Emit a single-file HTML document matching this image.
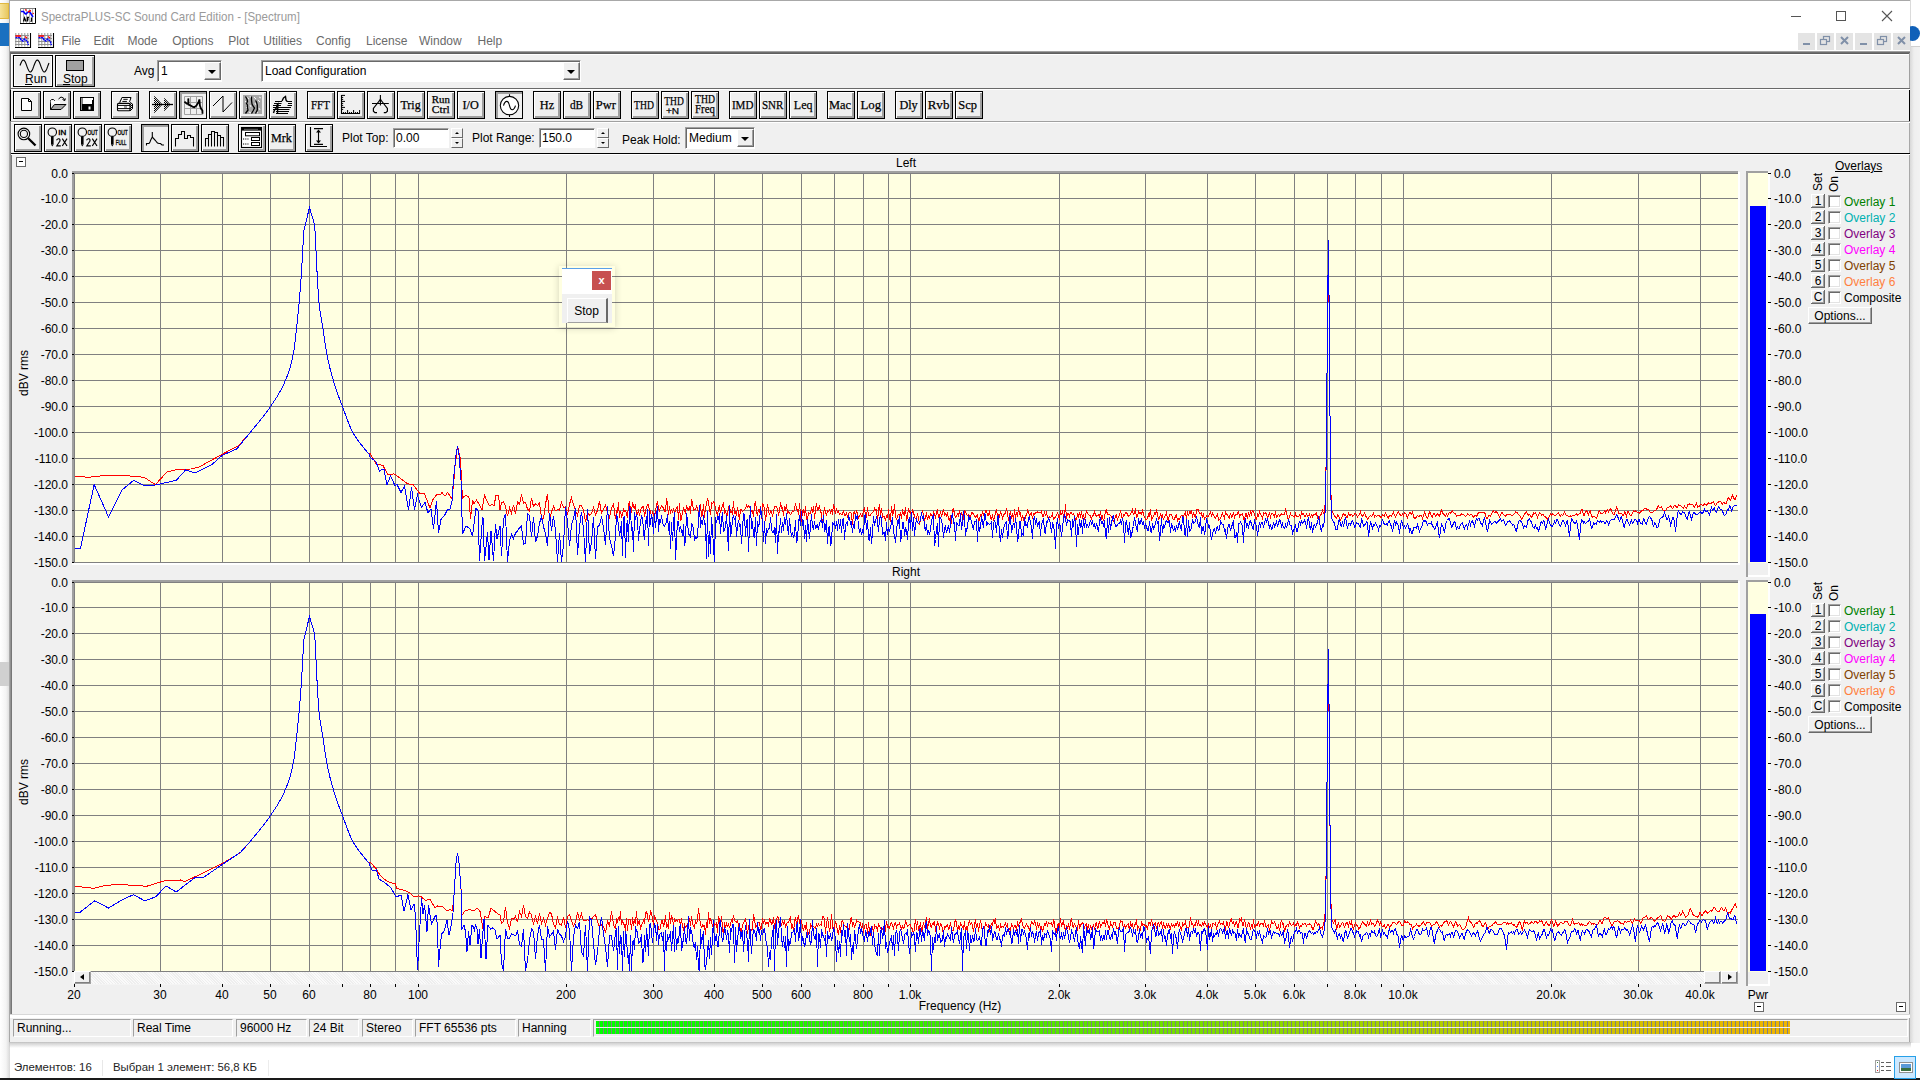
<!DOCTYPE html><html><head><meta charset="utf-8"><title>SpectraPLUS</title><style>html,body{margin:0;padding:0;}body{width:1920px;height:1080px;overflow:hidden;position:relative;background:#ffffff;font-family:"Liberation Sans",sans-serif;}div{box-sizing:border-box;}.btn{position:absolute;width:28px;height:28px;background:#f0f0f0;border:1px solid #000;box-shadow:inset 1px 1px 0 #fff,inset -2px -2px 0 #a0a0a0;}.btnp{position:absolute;width:28px;height:28px;background:#f0f0f0;border:1px solid #000;box-shadow:inset 2px 2px 0 #a0a0a0;}.lbl{position:absolute;white-space:nowrap;font-size:12px;line-height:14px;color:#000;}svg{position:absolute;left:0;top:0;overflow:visible}</style></head><body><div style="position:absolute;left:0px;top:0px;width:10px;height:1080px;background:linear-gradient(90deg,#ffffff 0%,#f4f4f4 60%,#d8d8d8 100%)"></div><div style="position:absolute;left:0px;top:3px;width:9px;height:16px;background:linear-gradient(90deg,#f6e39a,#e8c860);border:1px solid #e0b840;border-left:none"></div><div style="position:absolute;left:0px;top:23px;width:9px;height:23px;background:#1a70c0"></div><div style="position:absolute;left:0px;top:662px;width:9px;height:24px;background:#d0d0d0"></div><div style="position:absolute;left:1910px;top:0px;width:10px;height:1043px;background:linear-gradient(90deg,#d8d8d8 0%,#efefef 40%,#f2f2f2 100%)"></div><div style="position:absolute;left:1911px;top:0px;width:9px;height:46px;background:#ffffff"></div><div style="position:absolute;left:1905px;top:26px;width:15px;height:15px;border-radius:50%;background:#1060b8"></div><div style="position:absolute;left:1911px;top:46px;width:9px;height:1px;background:#d0d0d0"></div><div style="position:absolute;left:9px;top:0px;width:1901px;height:1043px;background:#f0f0f0;border:1px solid #a8a8a8"></div><div style="position:absolute;left:10px;top:1px;width:1900px;height:50px;background:#ffffff"></div><svg width="1920" height="60"><rect x="20" y="8" width="16" height="16" fill="#fff"/><path d="M20.5,24 V8.5 H36" stroke="#808080" fill="none"/><path d="M35.5,8 V23.5 H20" stroke="#000" fill="none"/><path d="M23.5,9 V23 M26.5,9 V23 M29.5,9 V23 M32.5,9 V23" stroke="#a0a0a0" stroke-width="0.8"/><polyline points="21,11.5 23.5,11.5 25,13.5 26,14 27.5,12.5 29,11.5 30.5,13 32,15.5 33,17" fill="none" stroke="#0000ff" stroke-width="1.6"/><path d="M25,9.5 L26.5,10.5 M28,12 L31,10.5 M33,13 L33.5,14" stroke="#ff0000" stroke-width="1.4"/><path d="M23.5,21.5 L24.5,18 L26,21.5 M27.5,21.5 V17.5 H29 M27,19.5 H28.5 M31.5,17.5 V21 L30.5,21.5" stroke="#000" stroke-width="1.3" fill="none"/><g transform="translate(15,33)"><rect x="0" y="1" width="15" height="14" fill="#fff"/><line x1="0.8" y1="0" x2="0.8" y2="13.5" stroke="#888" stroke-width="0.9"/><line x1="3.8" y1="0" x2="3.8" y2="13.5" stroke="#888" stroke-width="0.9"/><line x1="6.8" y1="0" x2="6.8" y2="13.5" stroke="#888" stroke-width="0.9"/><line x1="9.8" y1="0" x2="9.8" y2="13.5" stroke="#888" stroke-width="0.9"/><line x1="12.8" y1="0" x2="12.8" y2="13.5" stroke="#888" stroke-width="0.9"/><line x1="0" y1="2.5" x2="14" y2="2.5" stroke="#888" stroke-width="0.9"/><line x1="0" y1="5.5" x2="14" y2="5.5" stroke="#888" stroke-width="0.9"/><line x1="0" y1="8.5" x2="14" y2="8.5" stroke="#888" stroke-width="0.9"/><line x1="0" y1="11.5" x2="14" y2="11.5" stroke="#888" stroke-width="0.9"/><path d="M0.5,4.5 H5 L6,7 L8,8 L9.5,6 L11,7 L12.5,9 L13.5,12" fill="none" stroke="#0000ff" stroke-width="1.5" stroke-dasharray="2,0.6"/><path d="M0.5,3 H6 M10,3.5 L12,5" fill="none" stroke="#ff0000" stroke-width="1.3"/><path d="M0,14.5 H15.5 V0" stroke="#000" fill="none" stroke-width="1.1"/></g><g transform="translate(38,33)"><rect x="0" y="1" width="15" height="14" fill="#fff"/><line x1="0.8" y1="0" x2="0.8" y2="13.5" stroke="#888" stroke-width="0.9"/><line x1="3.8" y1="0" x2="3.8" y2="13.5" stroke="#888" stroke-width="0.9"/><line x1="6.8" y1="0" x2="6.8" y2="13.5" stroke="#888" stroke-width="0.9"/><line x1="9.8" y1="0" x2="9.8" y2="13.5" stroke="#888" stroke-width="0.9"/><line x1="12.8" y1="0" x2="12.8" y2="13.5" stroke="#888" stroke-width="0.9"/><line x1="0" y1="2.5" x2="14" y2="2.5" stroke="#888" stroke-width="0.9"/><line x1="0" y1="5.5" x2="14" y2="5.5" stroke="#888" stroke-width="0.9"/><line x1="0" y1="8.5" x2="14" y2="8.5" stroke="#888" stroke-width="0.9"/><line x1="0" y1="11.5" x2="14" y2="11.5" stroke="#888" stroke-width="0.9"/><path d="M0.5,4.5 H5 L6,7 L8,8 L9.5,6 L11,7 L12.5,9 L13.5,12" fill="none" stroke="#0000ff" stroke-width="1.5" stroke-dasharray="2,0.6"/><path d="M0.5,3 H6 M10,3.5 L12,5" fill="none" stroke="#ff0000" stroke-width="1.3"/><path d="M0,14.5 H15.5 V0" stroke="#000" fill="none" stroke-width="1.1"/></g><line x1="1791" y1="16.5" x2="1801" y2="16.5" stroke="#555"/><rect x="1836.5" y="11.5" width="9" height="9" fill="none" stroke="#555"/><path d="M1882,11 L1892,21 M1892,11 L1882,21" stroke="#555" stroke-width="1.1"/></svg><div style="position:absolute;left:41px;top:9px;font-size:13px;line-height:15px;color:#9a9a9a;white-space:nowrap;transform:scaleX(0.887);transform-origin:0 0">SpectraPLUS-SC Sound Card Edition - [Spectrum]</div><div style="position:absolute;left:61.4px;top:34px;font-size:12px;line-height:14px;color:#6a6a6a;white-space:nowrap;">File</div><div style="position:absolute;left:93.4px;top:34px;font-size:12px;line-height:14px;color:#6a6a6a;white-space:nowrap;">Edit</div><div style="position:absolute;left:127.4px;top:34px;font-size:12px;line-height:14px;color:#6a6a6a;white-space:nowrap;">Mode</div><div style="position:absolute;left:172.2px;top:34px;font-size:12px;line-height:14px;color:#6a6a6a;white-space:nowrap;">Options</div><div style="position:absolute;left:228.3px;top:34px;font-size:12px;line-height:14px;color:#6a6a6a;white-space:nowrap;">Plot</div><div style="position:absolute;left:263.3px;top:34px;font-size:12px;line-height:14px;color:#6a6a6a;white-space:nowrap;">Utilities</div><div style="position:absolute;left:316px;top:34px;font-size:12px;line-height:14px;color:#6a6a6a;white-space:nowrap;">Config</div><div style="position:absolute;left:366px;top:34px;font-size:12px;line-height:14px;color:#6a6a6a;white-space:nowrap;">License</div><div style="position:absolute;left:419px;top:34px;font-size:12px;line-height:14px;color:#6a6a6a;white-space:nowrap;">Window</div><div style="position:absolute;left:477.5px;top:34px;font-size:12px;line-height:14px;color:#6a6a6a;white-space:nowrap;">Help</div><div style="position:absolute;left:1798px;top:33px;width:17px;height:17px;background:#e4e4e4"></div><div style="position:absolute;left:1817px;top:33px;width:17px;height:17px;background:#e4e4e4"></div><div style="position:absolute;left:1836px;top:33px;width:17px;height:17px;background:#e4e4e4"></div><div style="position:absolute;left:1855px;top:33px;width:17px;height:17px;background:#e4e4e4"></div><div style="position:absolute;left:1874px;top:33px;width:17px;height:17px;background:#e4e4e4"></div><div style="position:absolute;left:1893px;top:33px;width:17px;height:17px;background:#e4e4e4"></div><svg width="1920" height="60"><rect x="1803" y="43" width="7" height="2" fill="#8090a8"/><rect x="1823.5" y="36.5" width="6" height="5" fill="none" stroke="#8090a8" stroke-width="1.2"/><rect x="1820.5" y="39.5" width="6" height="5" fill="#e4e4e4" stroke="#8090a8" stroke-width="1.2"/><path d="M1841,37 L1848,44 M1848,37 L1841,44" stroke="#8090a8" stroke-width="2"/><rect x="1860" y="43" width="7" height="2" fill="#8090a8"/><rect x="1880.5" y="36.5" width="6" height="5" fill="none" stroke="#8090a8" stroke-width="1.2"/><rect x="1877.5" y="39.5" width="6" height="5" fill="#e4e4e4" stroke="#8090a8" stroke-width="1.2"/><path d="M1898,37 L1905,44 M1905,37 L1898,44" stroke="#8090a8" stroke-width="2"/></svg><div style="position:absolute;left:10px;top:51px;width:1900px;height:1px;background:#a0a0a0"></div><div style="position:absolute;left:10px;top:52px;width:1900px;height:1px;background:#6e6e6e"></div><div style="position:absolute;left:10px;top:53px;width:1900px;height:1px;background:#5f5f5f"></div><div style="position:absolute;left:10px;top:54px;width:1900px;height:34px;background:#f0f0f0"></div><div style="position:absolute;left:11px;top:54px;width:1898px;height:1px;background:#ffffff"></div><div style="position:absolute;left:10px;top:88px;width:1900px;height:1px;background:#696969"></div><div style="position:absolute;left:10px;top:89px;width:1900px;height:1px;background:#ffffff"></div><div style="position:absolute;left:10px;top:121px;width:1900px;height:1px;background:#a0a0a0"></div><div style="position:absolute;left:10px;top:122px;width:1900px;height:1px;background:#ffffff"></div><div style="position:absolute;left:10px;top:52px;width:1px;height:38px;background:#696969"></div><div style="position:absolute;left:11px;top:55px;width:1px;height:33px;background:#ffffff"></div><div style="position:absolute;left:10px;top:90px;width:1px;height:31px;background:#000"></div><div style="position:absolute;left:10px;top:121px;width:1px;height:34px;background:#808080"></div><div style="position:absolute;left:1909px;top:53px;width:1px;height:35px;background:#a0a0a0"></div><div style="position:absolute;left:1909px;top:90px;width:1px;height:31px;background:#000"></div><div style="position:absolute;left:11px;top:153px;width:1899px;height:1px;background:#000"></div><div style="position:absolute;left:11px;top:154px;width:1899px;height:1px;background:#ffffff"></div><div style="position:absolute;left:13px;top:55px;width:40px;height:32px;background:#f0f0f0;border:1px solid #000;box-shadow:inset 1px 1px 0 #fff,inset -1px -1px 0 #fff;"></div><div style="position:absolute;left:55px;top:55px;width:40px;height:32px;background:#f0f0f0;border:1px solid #000;box-shadow:inset 1px 1px 0 #fff,inset -2px -2px 0 #a0a0a0;"></div><svg width="1920" height="160"><polyline points="20.0,65.5 20.5,64.2 21.0,63.0 21.5,61.9 22.0,61.0 22.5,60.4 23.0,60.1 23.5,60.0 24.0,60.3 24.5,60.8 25.0,61.6 25.5,62.6 26.0,63.8 26.5,65.1 27.0,66.5 27.5,67.8 28.0,69.0 28.5,70.1 29.0,71.0 29.5,71.6 30.0,71.9 30.5,72.0 31.0,71.7 31.5,71.2 32.0,70.4 32.5,69.4 33.0,68.2 33.5,66.9 34.0,65.5 34.5,64.2 35.0,63.0 35.5,61.9 36.0,61.0 36.5,60.4 37.0,60.1 37.5,60.0 38.0,60.3 38.5,60.8 39.0,61.6 39.5,62.6 40.0,63.8 40.5,65.1 41.0,66.5 41.5,67.8 42.0,69.0 42.5,70.1 43.0,71.0 43.5,71.6 44.0,71.9 44.5,72.0 45.0,71.7 45.5,71.2 46.0,70.4 46.5,69.4 47.0,68.2 47.5,66.9 48.0,65.5 48.5,64.2 49.0,63.0" fill="none" stroke="#000" stroke-width="1.1"/><rect x="66.5" y="60.5" width="17" height="10" fill="#a0a0a0" stroke="#000"/></svg><div style="position:absolute;left:25px;top:72px;font-size:12px;line-height:14px;color:#000;white-space:nowrap;">Run</div><div style="position:absolute;left:25px;top:84px;width:7px;height:1px;background:#000"></div><div style="position:absolute;left:63px;top:72px;font-size:12px;line-height:14px;color:#000;white-space:nowrap;">Stop</div><div style="position:absolute;left:63px;top:84px;width:7px;height:1px;background:#000"></div><div style="position:absolute;left:134px;top:64px;font-size:12px;line-height:14px;color:#000;white-space:nowrap;">Avg</div><div style="position:absolute;left:157px;top:60px;width:65px;height:22px;background:#fff;border:1px solid;border-color:#a0a0a0 #fff #fff #a0a0a0;box-shadow:inset 1px 1px 0 #696969"></div><div style="position:absolute;left:204px;top:62px;width:17px;height:18px;background:#f0f0f0;border:1px solid;border-color:#fff #696969 #696969 #fff;box-shadow:inset -1px -1px 0 #a0a0a0"></div><div style="position:absolute;left:208px;top:70px;width:0;height:0;border-left:4px solid transparent;border-right:4px solid transparent;border-top:4px solid #000"></div><div style="position:absolute;left:161px;top:64px;font-size:12px;line-height:14px;color:#000;white-space:nowrap;">1</div><div style="position:absolute;left:261px;top:60px;width:320px;height:22px;background:#fff;border:1px solid;border-color:#a0a0a0 #fff #fff #a0a0a0;box-shadow:inset 1px 1px 0 #696969"></div><div style="position:absolute;left:563px;top:62px;width:17px;height:18px;background:#f0f0f0;border:1px solid;border-color:#fff #696969 #696969 #fff;box-shadow:inset -1px -1px 0 #a0a0a0"></div><div style="position:absolute;left:567px;top:70px;width:0;height:0;border-left:4px solid transparent;border-right:4px solid transparent;border-top:4px solid #000"></div><div style="position:absolute;left:265px;top:64px;font-size:12px;line-height:14px;color:#000;white-space:nowrap;">Load Configuration</div><div class="btn" style="left:13px;top:91px"></div><div class="btn" style="left:43px;top:91px"></div><div class="btn" style="left:73px;top:91px"></div><div class="btn" style="left:111px;top:91px"></div><div class="btn" style="left:149px;top:91px"></div><div class="btnp" style="left:179px;top:91px"></div><div class="btn" style="left:209px;top:91px"></div><div class="btn" style="left:239px;top:91px"></div><div class="btn" style="left:269px;top:91px"></div><div class="btn" style="left:307px;top:91px"></div><div class="btn" style="left:337px;top:91px"></div><div class="btn" style="left:367px;top:91px"></div><div class="btn" style="left:397px;top:91px"></div><div class="btn" style="left:427px;top:91px"></div><div class="btn" style="left:457px;top:91px"></div><div class="btnp" style="left:495px;top:91px"></div><div class="btn" style="left:533px;top:91px"></div><div class="btn" style="left:563px;top:91px"></div><div class="btn" style="left:593px;top:91px"></div><div class="btn" style="left:631px;top:91px"></div><div class="btn" style="left:661px;top:91px"></div><div class="btn" style="left:691px;top:91px"></div><div class="btn" style="left:729px;top:91px"></div><div class="btn" style="left:759px;top:91px"></div><div class="btn" style="left:789px;top:91px"></div><div class="btn" style="left:827px;top:91px"></div><div class="btn" style="left:857px;top:91px"></div><div class="btn" style="left:895px;top:91px"></div><div class="btn" style="left:925px;top:91px"></div><div class="btn" style="left:955px;top:91px"></div><div class="btn" style="left:14px;top:124px"></div><div class="btn" style="left:44px;top:124px"></div><div class="btn" style="left:74px;top:124px"></div><div class="btn" style="left:104px;top:124px"></div><div class="btnp" style="left:141px;top:124px"></div><div class="btn" style="left:171px;top:124px"></div><div class="btn" style="left:201px;top:124px"></div><div class="btn" style="left:238px;top:124px"></div><div class="btn" style="left:268px;top:124px"></div><div class="btn" style="left:305px;top:124px"></div><svg width="1920" height="160"><g transform="translate(13,91)"><path d="M8.5,7.5 H15.5 L18.5,10.5 V19.5 H8.5 Z" fill="#fff" stroke="#000"/><path d="M15.5,7.5 V10.5 H18.5" fill="none" stroke="#000"/></g><g transform="translate(43,91)"><path d="M7.5,18.5 V9.5 L8.5,8.5 H10.5 L11.5,9.5 V10.5 H17" fill="none" stroke="#000"/><path d="M7.5,10 H17 V13 H8 Z" fill="#fff"/><path d="M7.5,18.5 L11.5,13.5 H23 L18,18.5 Z" fill="#a8a8a8" stroke="#000"/><path d="M15.5,8 Q18,4.5 20.5,7 L21.5,9" fill="none" stroke="#000"/><path d="M19.5,8 L21.5,10 L22.5,7.5" fill="none" stroke="#000"/></g><g transform="translate(73,91)"><rect x="7" y="6" width="14" height="14" fill="#000"/><rect x="8" y="7" width="1" height="12" fill="#909090"/><rect x="9.5" y="7" width="9.5" height="6" fill="#fff"/><rect x="19" y="7" width="1" height="2" fill="#fff"/><rect x="10" y="15" width="8.5" height="4" fill="#000"/><rect x="15.5" y="15.5" width="2" height="3" fill="#fff"/></g><g transform="translate(111,91)"><path d="M11.2,6.5 H19.7 V7.5 L18.4,10.8 M11.2,6.5 L8.6,11.8" stroke="#000" stroke-width="1.1" fill="none"/><path d="M11.5,7 H19 L17.8,11.5 H9.5 Z" fill="#fff"/><path d="M12.3,8.3 H16.7 M11.3,10.4 H15.9" stroke="#000" stroke-width="1"/><rect x="6.5" y="12.4" width="12.5" height="7.3" rx="1" fill="#fff" stroke="#000" stroke-width="1.1"/><path d="M6.5,14.4 H19 M6.5,17.6 H19" stroke="#000" stroke-width="1"/><rect x="13" y="15" width="3" height="2" fill="#a0a0a0"/><path d="M19,11.5 L21.5,13 V17.5 L19,20" stroke="#000" stroke-width="1" fill="url(#chk)"/></g><g transform="translate(149,91)"><defs><pattern id="chk" width="2" height="2" patternUnits="userSpaceOnUse"><rect x="0" y="0" width="1" height="1" fill="#000"/><rect x="1" y="1" width="1" height="1" fill="#000"/></pattern></defs><path d="M5,5 L13,13.5 L5,22 Z M15,7 L21,13.5 L15,20 Z" fill="url(#chk)"/><path d="M3,13.5 H24" stroke="#000" stroke-width="1.3"/><path d="M5.5,5.5 L13,13.5 L5.5,21.5 M15.5,7.5 L21,13.5 L15.5,19.5" stroke="#000" stroke-width="0.8" fill="none"/></g><g transform="translate(179,91)"><path d="M5.5,5.5 H23.5 V23.5 H5.5 Z M11.5,5.5 V23.5 M17.5,5.5 V23.5 M5.5,11.5 H23.5 M5.5,17.5 H23.5" stroke="#a0a0a0" fill="none"/><path d="M5.4,10.6 L7.75,12.75 L9.3,13 L9.3,7.4 L9.5,13.7 L11.2,14.3 L13.4,15.6 L15.25,16.3 L17.4,14.6 L19.6,10.9 L20.4,8.4 L20.9,14.6 L22.1,17.75 L23.4,19.6 L23.5,22.75" stroke="#000" stroke-width="1.8" fill="none"/></g><g transform="translate(209,91)"><path d="M4,15 L14,5 V21 L23,11.5" stroke="#000" stroke-width="1" fill="none"/></g><g transform="translate(239,91)"><rect x="4" y="4" width="19" height="19" fill="#a8a8a8"/><path d="M7,6 L10,8 M6,10 L8,12 M11,5 L12,7 M15,6 L17,8 M19,9 L21,11 M7,16 L9,18 M11,14 L12,16 M16,12 L17,14 M20,17 L21,19 M10,21 L12,22 M17,21 L19,22 M20,6 L22,7" stroke="#fff" stroke-width="0.9"/><path d="M6.5,5.5 L8,8 L8.5,10.5 L7.5,12.5 L8.5,14 L8.5,17 L9,19 L6.5,22.5 M12.5,5.5 L12.5,9 L13,13 L14,15 L15.5,17 L14,20 L12.5,22.5 M16.5,9.5 L17.5,11 L18.3,14 L18.3,19 L16.5,22.5" stroke="#000" stroke-width="1.3" fill="none"/></g><g transform="translate(269,91)"><path d="M6,10.5 H13 M18,10.5 H23 M5,12.5 H12.5 M19,12.5 H23 M4,14.5 H12 M18.5,14.5 H23 M4,16.5 H22 M4,18.5 H20.5 M7,20.5 H20 M7,22.5 H19" stroke="#000" stroke-width="1"/><path d="M13,10 L14.5,7 L16.5,5.5 L17,9 L18,10.5 M4.5,22 L5.5,19 L7.5,17 L8,14 L9,13 L8.5,22" stroke="#000" stroke-width="1.4" fill="none"/></g><g transform="translate(337,91)"><path d="M4.5,4 V22.5 H23" stroke="#000" stroke-width="1.1" fill="none"/><path d="M4.5,4.4 H8 M4.5,10.4 H8 M4.5,16.4 H8 M4.5,6.4 H6.2 M4.5,8.4 H6.2 M4.5,12.4 H6.2 M4.5,14.4 H6.2 M4.5,18.4 H6.2 M10.6,22.5 V19 M16.6,22.5 V19 M22.6,22.5 V19 M6.4,22.5 V21 M8.4,22.5 V21 M12.6,22.5 V21 M14.5,22.5 V21 M18.6,22.5 V21 M20.5,22.5 V21" stroke="#000" stroke-width="1"/></g><g transform="translate(367,91)"><path d="M13.4,4 V14.5 M5,12.5 H21.8" stroke="#000" stroke-width="1.1" fill="none"/><path d="M13.4,7 L15.3,10.2 H11.5 Z" fill="#000"/><path d="M12.2,10 L6.4,17.4 V20.2 L8,21.6 H10 M14.6,10 L20.4,17.4 V20.2 L18.8,21.6 H16.8" stroke="#000" stroke-width="1.2" fill="none"/></g><g transform="translate(495,91)"><circle cx="14.5" cy="14.6" r="9.2" stroke="#000" stroke-width="1.1" fill="#fff"/><path d="M14.5,3.3 V5.5 M14.5,23.7 V26" stroke="#000" stroke-width="1.1"/><path d="M8.5,14.6 C9.5,11 11,10.4 11.8,10.4 C13.5,10.4 14,12.5 14.5,14.6 C15,16.7 15.5,18.7 17.2,18.7 C18,18.7 19.5,18 20.5,14.6" stroke="#000" stroke-width="1.1" fill="none"/></g><g transform="translate(14,124)"><circle cx="9.9" cy="9.9" r="5.8" stroke="#000" stroke-width="1.1" fill="none"/><circle cx="9.9" cy="9.9" r="3.6" stroke="#000" stroke-width="1.1" fill="none"/><path d="M14.2,14.2 L21.5,21.5" stroke="#000" stroke-width="2.3"/></g><g transform="translate(44,124)"><circle cx="8.3" cy="8.2" r="4.2" stroke="#000" stroke-width="1.1" fill="#f0f0f0"/><path d="M8.3,12.5 V20.5" stroke="#000" stroke-width="2.6"/><path d="M7,20.5 L8.3,22.5 L9.6,20.5 Z" fill="#000"/><text x="14.2" y="10.9" font-family="Liberation Sans" font-size="6.6" stroke="#000" stroke-width="0.35" textLength="8" lengthAdjust="spacingAndGlyphs" fill="#000">IN</text><path d="M12.5,16.2 Q13.5,14.5 15,14.8 Q16.5,15.3 15.8,17.2 L12.8,21.8 H16.8" stroke="#000" stroke-width="1.15" fill="none"/><path d="M18.3,14.6 L23,22 M23,14.6 L18.3,22" stroke="#000" stroke-width="1.15"/></g><g transform="translate(74,124)"><circle cx="8.3" cy="8.2" r="4.2" stroke="#000" stroke-width="1.1" fill="#f0f0f0"/><path d="M8.3,12.5 V20.5" stroke="#000" stroke-width="2.6"/><path d="M7,20.5 L8.3,22.5 L9.6,20.5 Z" fill="#000"/><text x="13.5" y="10.9" font-family="Liberation Sans" font-size="6.6" stroke="#000" stroke-width="0.35" textLength="10.3" lengthAdjust="spacingAndGlyphs" fill="#000">OUT</text><path d="M12.5,16.2 Q13.5,14.5 15,14.8 Q16.5,15.3 15.8,17.2 L12.8,21.8 H16.8" stroke="#000" stroke-width="1.15" fill="none"/><path d="M18.3,14.6 L23,22 M23,14.6 L18.3,22" stroke="#000" stroke-width="1.15"/></g><g transform="translate(104,124)"><circle cx="8.3" cy="8.2" r="4.2" stroke="#000" stroke-width="1.1" fill="#f0f0f0"/><path d="M8.3,12.5 V20.5" stroke="#000" stroke-width="2.6"/><path d="M7,20.5 L8.3,22.5 L9.6,20.5 Z" fill="#000"/><text x="13.5" y="10.9" font-family="Liberation Sans" font-size="6.6" stroke="#000" stroke-width="0.35" textLength="10.3" lengthAdjust="spacingAndGlyphs" fill="#000">OUT</text><text x="11.8" y="20.8" font-family="Liberation Sans" font-size="6.8" stroke="#000" stroke-width="0.35" textLength="10.7" lengthAdjust="spacingAndGlyphs" fill="#000">FULL</text></g><g transform="translate(141,124)"><path d="M5.5,21.5 V19.5 H8 L9,18 L9.5,16.5 L10.5,14.5 L11.3,13 V8 M11.3,12.5 L12,14 L13.5,15.5 L14.5,16.5 L15.5,18 L16.5,19 L18,19.5 H19.5 L21,21 H23" stroke="#000" stroke-width="1.1" fill="none"/></g><g transform="translate(171,124)"><path d="M4.5,22.6 V14.5 H7.5 V10.5 H10.5 V7.5 H13.5 V14.5 H16.5 V11.5 H19.5 V13.5 H22.5 V22.6" stroke="#000" stroke-width="1.05" fill="none"/></g><g transform="translate(201,124)"><path d="M4.5,22.6 V14.5 H7.5 V10.5 H10.5 V7.5 H13.5 V8.5 H16.5 V11.5 H19.5 V13.5 H22.5 V22.6 M7.5,14.5 V22.6 M10.5,10.5 V22.6 M13.5,7.5 V22.6 M16.5,8.5 V22.6 M19.5,11.5 V22.6" stroke="#000" stroke-width="1.05" fill="none"/></g><g transform="translate(238,124)"><rect x="3.5" y="3.5" width="20" height="20" fill="#fff" stroke="#000" stroke-width="1.1"/><rect x="4" y="4" width="19" height="2.6" fill="#000"/><path d="M6.5,5.3 H19.5" stroke="#fff" stroke-width="0.8" stroke-dasharray="1,1"/><rect x="7.5" y="8.5" width="14" height="3.3" fill="none" stroke="#000"/><rect x="13.5" y="13.5" width="8" height="3" fill="none" stroke="#000"/><rect x="13.5" y="18.5" width="8" height="3" fill="none" stroke="#000"/><path d="M5,15 H10.5 M5,20 H10.5" stroke="#000" stroke-dasharray="1.2,1"/></g><g transform="translate(305,124)"><path d="M5.5,3 V22.5 H22" stroke="#000" stroke-width="1.1" fill="none"/><path d="M9,4.6 H18 M9,20.4 H18 M13.5,6 V19" stroke="#000" stroke-width="1.1"/><path d="M11,8.5 L13.5,5.5 L16,8.5 Z M11,16.5 L13.5,19.5 L16,16.5 Z" fill="#000"/></g></svg><svg width="1920" height="160"><text x="311" y="108.8" font-family="Liberation Serif" font-size="13" font-weight="normal" textLength="18.8" lengthAdjust="spacingAndGlyphs" fill="#000" stroke="#000" stroke-width="0.25">FFT</text><text x="400.4" y="108.8" font-family="Liberation Serif" font-size="13" font-weight="normal" textLength="20.3" lengthAdjust="spacingAndGlyphs" fill="#000" stroke="#000" stroke-width="0.25">Trig</text><text x="431.8" y="102.5" font-family="Liberation Serif" font-size="10" font-weight="normal" textLength="18.0" lengthAdjust="spacingAndGlyphs" fill="#000" stroke="#000" stroke-width="0.25">Run</text><text x="431.8" y="113" font-family="Liberation Serif" font-size="11" font-weight="normal" textLength="18.0" lengthAdjust="spacingAndGlyphs" fill="#000" stroke="#000" stroke-width="0.25">Ctrl</text><text x="462.5" y="108.8" font-family="Liberation Serif" font-size="13" font-weight="normal" textLength="16.3" lengthAdjust="spacingAndGlyphs" fill="#000" stroke="#000" stroke-width="0.25">I/O</text><text x="539.8" y="108.8" font-family="Liberation Serif" font-size="13" font-weight="normal" textLength="14.399999999999999" lengthAdjust="spacingAndGlyphs" fill="#000" stroke="#000" stroke-width="0.25">Hz</text><text x="569.9" y="108.8" font-family="Liberation Serif" font-size="13" font-weight="normal" textLength="13.200000000000001" lengthAdjust="spacingAndGlyphs" fill="#000" stroke="#000" stroke-width="0.25">dB</text><text x="595.8" y="108.8" font-family="Liberation Serif" font-size="13" font-weight="normal" textLength="20.099999999999998" lengthAdjust="spacingAndGlyphs" fill="#000" stroke="#000" stroke-width="0.25">Pwr</text><text x="634.1" y="108.8" font-family="Liberation Serif" font-size="13" font-weight="normal" textLength="19.799999999999997" lengthAdjust="spacingAndGlyphs" fill="#000" stroke="#000" stroke-width="0.25">THD</text><text x="664.2" y="104.9" font-family="Liberation Serif" font-size="13" font-weight="normal" textLength="19.6" lengthAdjust="spacingAndGlyphs" fill="#000" stroke="#000" stroke-width="0.25">THD</text><text x="665.9" y="113.7" font-family="Liberation Sans" font-size="9.5" font-weight="normal" textLength="13.200000000000001" lengthAdjust="spacingAndGlyphs" fill="#000" stroke="#000" stroke-width="0.25">+N</text><text x="695" y="102.9" font-family="Liberation Serif" font-size="11.8" font-weight="normal" textLength="19.9" lengthAdjust="spacingAndGlyphs" fill="#000" stroke="#000" stroke-width="0.25">THD</text><text x="695" y="113" font-family="Liberation Serif" font-size="12" font-weight="normal" textLength="19.9" lengthAdjust="spacingAndGlyphs" fill="#000" stroke="#000" stroke-width="0.25">Freq</text><text x="731.9" y="108.8" font-family="Liberation Serif" font-size="13" font-weight="normal" textLength="21.5" lengthAdjust="spacingAndGlyphs" fill="#000" stroke="#000" stroke-width="0.25">IMD</text><text x="761.9" y="108.8" font-family="Liberation Serif" font-size="13" font-weight="normal" textLength="21.5" lengthAdjust="spacingAndGlyphs" fill="#000" stroke="#000" stroke-width="0.25">SNR</text><text x="793.8" y="108.8" font-family="Liberation Serif" font-size="13" font-weight="normal" textLength="18.7" lengthAdjust="spacingAndGlyphs" fill="#000" stroke="#000" stroke-width="0.25">Leq</text><text x="829" y="108.8" font-family="Liberation Serif" font-size="13" font-weight="normal" textLength="22" lengthAdjust="spacingAndGlyphs" fill="#000" stroke="#000" stroke-width="0.25">Mac</text><text x="860.4" y="108.8" font-family="Liberation Serif" font-size="13" font-weight="normal" textLength="20.85" lengthAdjust="spacingAndGlyphs" fill="#000" stroke="#000" stroke-width="0.25">Log</text><text x="899.4" y="108.8" font-family="Liberation Serif" font-size="13" font-weight="normal" textLength="18.299999999999997" lengthAdjust="spacingAndGlyphs" fill="#000" stroke="#000" stroke-width="0.25">Dly</text><text x="927.7" y="108.8" font-family="Liberation Serif" font-size="13" font-weight="normal" textLength="21.7" lengthAdjust="spacingAndGlyphs" fill="#000" stroke="#000" stroke-width="0.25">Rvb</text><text x="958.3" y="108.8" font-family="Liberation Serif" font-size="13" font-weight="normal" textLength="18.7" lengthAdjust="spacingAndGlyphs" fill="#000" stroke="#000" stroke-width="0.25">Scp</text><text x="271" y="141.8" font-family="Liberation Serif" font-size="13" font-weight="normal" textLength="20.9" lengthAdjust="spacingAndGlyphs" fill="#000" stroke="#000" stroke-width="0.25">Mrk</text></svg><div style="position:absolute;left:342px;top:131px;font-size:12px;line-height:14px;color:#000;white-space:nowrap;">Plot Top:</div><div style="position:absolute;left:393px;top:128px;width:56px;height:20px;background:#fff;border:1px solid;border-color:#a0a0a0 #fff #fff #a0a0a0;box-shadow:inset 1px 1px 0 #696969"></div><div style="position:absolute;left:396px;top:131px;font-size:12px;line-height:14px;color:#000;white-space:nowrap;">0.00</div><div style="position:absolute;left:451px;top:128px;width:12px;height:10px;background:#f0f0f0;border:1px solid;border-color:#fff #696969 #696969 #fff"></div><div style="position:absolute;left:451px;top:138px;width:12px;height:10px;background:#f0f0f0;border:1px solid;border-color:#fff #696969 #696969 #fff"></div><div style="position:absolute;left:455px;top:132px;width:0;height:0;border-left:2px solid transparent;border-right:2px solid transparent;border-bottom:2px solid #000"></div><div style="position:absolute;left:455px;top:142px;width:0;height:0;border-left:2px solid transparent;border-right:2px solid transparent;border-top:2px solid #000"></div><div style="position:absolute;left:472px;top:131px;font-size:12px;line-height:14px;color:#000;white-space:nowrap;">Plot Range:</div><div style="position:absolute;left:539px;top:128px;width:56px;height:20px;background:#fff;border:1px solid;border-color:#a0a0a0 #fff #fff #a0a0a0;box-shadow:inset 1px 1px 0 #696969"></div><div style="position:absolute;left:542px;top:131px;font-size:12px;line-height:14px;color:#000;white-space:nowrap;">150.0</div><div style="position:absolute;left:597px;top:128px;width:12px;height:10px;background:#f0f0f0;border:1px solid;border-color:#fff #696969 #696969 #fff"></div><div style="position:absolute;left:597px;top:138px;width:12px;height:10px;background:#f0f0f0;border:1px solid;border-color:#fff #696969 #696969 #fff"></div><div style="position:absolute;left:601px;top:132px;width:0;height:0;border-left:2px solid transparent;border-right:2px solid transparent;border-bottom:2px solid #000"></div><div style="position:absolute;left:601px;top:142px;width:0;height:0;border-left:2px solid transparent;border-right:2px solid transparent;border-top:2px solid #000"></div><div style="position:absolute;left:622px;top:133px;font-size:12px;line-height:14px;color:#000;white-space:nowrap;">Peak Hold:</div><div style="position:absolute;left:685px;top:127px;width:70px;height:22px;background:#fff;border:1px solid;border-color:#a0a0a0 #fff #fff #a0a0a0;box-shadow:inset 1px 1px 0 #696969"></div><div style="position:absolute;left:737px;top:129px;width:17px;height:18px;background:#f0f0f0;border:1px solid;border-color:#fff #696969 #696969 #fff;box-shadow:inset -1px -1px 0 #a0a0a0"></div><div style="position:absolute;left:741px;top:137px;width:0;height:0;border-left:4px solid transparent;border-right:4px solid transparent;border-top:4px solid #000"></div><div style="position:absolute;left:689px;top:131px;font-size:12px;line-height:14px;color:#000;white-space:nowrap;">Medium</div><div style="position:absolute;left:10px;top:155px;width:2px;height:860px;background:linear-gradient(90deg,#a0a0a0,#696969)"></div><div style="position:absolute;left:16px;top:157px;width:10px;height:10px;background:#fff;border:1px solid #696969"></div><div style="position:absolute;left:19px;top:161px;width:4px;height:1px;background:#000"></div><svg width="1920" height="1080" style="shape-rendering:crispEdges"><rect x="75" y="174" width="1663" height="388" fill="#ffffe1"/><rect x="72" y="171" width="1666" height="2" fill="#a0a0a0"/><rect x="72" y="171" width="2" height="392" fill="#a0a0a0"/><rect x="1738" y="172" width="2" height="392" fill="#ffffff"/><rect x="72" y="563" width="1668" height="2" fill="#ffffff"/><rect x="74" y="173" width="1664" height="1" fill="#808080"/><rect x="72" y="173" width="2" height="1" fill="#000"/><rect x="74" y="198" width="1664" height="1" fill="#808080"/><rect x="72" y="198" width="2" height="1" fill="#000"/><rect x="74" y="224" width="1664" height="1" fill="#808080"/><rect x="72" y="224" width="2" height="1" fill="#000"/><rect x="74" y="250" width="1664" height="1" fill="#808080"/><rect x="72" y="250" width="2" height="1" fill="#000"/><rect x="74" y="276" width="1664" height="1" fill="#808080"/><rect x="72" y="276" width="2" height="1" fill="#000"/><rect x="74" y="302" width="1664" height="1" fill="#808080"/><rect x="72" y="302" width="2" height="1" fill="#000"/><rect x="74" y="328" width="1664" height="1" fill="#808080"/><rect x="72" y="328" width="2" height="1" fill="#000"/><rect x="74" y="354" width="1664" height="1" fill="#808080"/><rect x="72" y="354" width="2" height="1" fill="#000"/><rect x="74" y="380" width="1664" height="1" fill="#808080"/><rect x="72" y="380" width="2" height="1" fill="#000"/><rect x="74" y="406" width="1664" height="1" fill="#808080"/><rect x="72" y="406" width="2" height="1" fill="#000"/><rect x="74" y="432" width="1664" height="1" fill="#808080"/><rect x="72" y="432" width="2" height="1" fill="#000"/><rect x="74" y="458" width="1664" height="1" fill="#808080"/><rect x="72" y="458" width="2" height="1" fill="#000"/><rect x="74" y="484" width="1664" height="1" fill="#808080"/><rect x="72" y="484" width="2" height="1" fill="#000"/><rect x="74" y="510" width="1664" height="1" fill="#808080"/><rect x="72" y="510" width="2" height="1" fill="#000"/><rect x="74" y="536" width="1664" height="1" fill="#808080"/><rect x="72" y="536" width="2" height="1" fill="#000"/><rect x="74" y="562" width="1664" height="1" fill="#808080"/><rect x="72" y="562" width="2" height="1" fill="#000"/><rect x="74" y="173" width="1" height="389" fill="#808080"/><rect x="160" y="173" width="1" height="389" fill="#808080"/><rect x="222" y="173" width="1" height="389" fill="#808080"/><rect x="270" y="173" width="1" height="389" fill="#808080"/><rect x="309" y="173" width="1" height="389" fill="#808080"/><rect x="342" y="173" width="1" height="389" fill="#808080"/><rect x="370" y="173" width="1" height="389" fill="#808080"/><rect x="395" y="173" width="1" height="389" fill="#808080"/><rect x="418" y="173" width="1" height="389" fill="#808080"/><rect x="566" y="173" width="1" height="389" fill="#808080"/><rect x="653" y="173" width="1" height="389" fill="#808080"/><rect x="714" y="173" width="1" height="389" fill="#808080"/><rect x="762" y="173" width="1" height="389" fill="#808080"/><rect x="801" y="173" width="1" height="389" fill="#808080"/><rect x="834" y="173" width="1" height="389" fill="#808080"/><rect x="863" y="173" width="1" height="389" fill="#808080"/><rect x="888" y="173" width="1" height="389" fill="#808080"/><rect x="910" y="173" width="1" height="389" fill="#808080"/><rect x="1059" y="173" width="1" height="389" fill="#808080"/><rect x="1145" y="173" width="1" height="389" fill="#808080"/><rect x="1207" y="173" width="1" height="389" fill="#808080"/><rect x="1255" y="173" width="1" height="389" fill="#808080"/><rect x="1294" y="173" width="1" height="389" fill="#808080"/><rect x="1327" y="173" width="1" height="389" fill="#808080"/><rect x="1355" y="173" width="1" height="389" fill="#808080"/><rect x="1381" y="173" width="1" height="389" fill="#808080"/><rect x="1403" y="173" width="1" height="389" fill="#808080"/><rect x="1551" y="173" width="1" height="389" fill="#808080"/><rect x="1638" y="173" width="1" height="389" fill="#808080"/><rect x="1700" y="173" width="1" height="389" fill="#808080"/><rect x="1746" y="171" width="2" height="406" fill="#a0a0a0"/><rect x="1746" y="171" width="22" height="2" fill="#a0a0a0"/><rect x="1748" y="173" width="20" height="390" fill="#ffffe1"/><rect x="1748" y="563" width="20" height="12" fill="#f0f0f0"/><rect x="1768" y="172" width="2" height="405" fill="#ffffff"/><rect x="1748" y="575" width="22" height="2" fill="#ffffff"/><rect x="1750" y="206" width="16" height="356" fill="#0000ff"/><rect x="1768" y="173" width="3" height="1" fill="#000"/><rect x="1768" y="198" width="3" height="1" fill="#000"/><rect x="1768" y="224" width="3" height="1" fill="#000"/><rect x="1768" y="250" width="3" height="1" fill="#000"/><rect x="1768" y="276" width="3" height="1" fill="#000"/><rect x="1768" y="302" width="3" height="1" fill="#000"/><rect x="1768" y="328" width="3" height="1" fill="#000"/><rect x="1768" y="354" width="3" height="1" fill="#000"/><rect x="1768" y="380" width="3" height="1" fill="#000"/><rect x="1768" y="406" width="3" height="1" fill="#000"/><rect x="1768" y="432" width="3" height="1" fill="#000"/><rect x="1768" y="458" width="3" height="1" fill="#000"/><rect x="1768" y="484" width="3" height="1" fill="#000"/><rect x="1768" y="510" width="3" height="1" fill="#000"/><rect x="1768" y="536" width="3" height="1" fill="#000"/><rect x="1768" y="562" width="3" height="1" fill="#000"/><rect x="75" y="583" width="1663" height="388" fill="#ffffe1"/><rect x="72" y="580" width="1666" height="2" fill="#a0a0a0"/><rect x="72" y="580" width="2" height="392" fill="#a0a0a0"/><rect x="1738" y="581" width="2" height="392" fill="#ffffff"/><rect x="74" y="582" width="1664" height="1" fill="#808080"/><rect x="72" y="582" width="2" height="1" fill="#000"/><rect x="74" y="607" width="1664" height="1" fill="#808080"/><rect x="72" y="607" width="2" height="1" fill="#000"/><rect x="74" y="633" width="1664" height="1" fill="#808080"/><rect x="72" y="633" width="2" height="1" fill="#000"/><rect x="74" y="659" width="1664" height="1" fill="#808080"/><rect x="72" y="659" width="2" height="1" fill="#000"/><rect x="74" y="685" width="1664" height="1" fill="#808080"/><rect x="72" y="685" width="2" height="1" fill="#000"/><rect x="74" y="711" width="1664" height="1" fill="#808080"/><rect x="72" y="711" width="2" height="1" fill="#000"/><rect x="74" y="737" width="1664" height="1" fill="#808080"/><rect x="72" y="737" width="2" height="1" fill="#000"/><rect x="74" y="763" width="1664" height="1" fill="#808080"/><rect x="72" y="763" width="2" height="1" fill="#000"/><rect x="74" y="789" width="1664" height="1" fill="#808080"/><rect x="72" y="789" width="2" height="1" fill="#000"/><rect x="74" y="815" width="1664" height="1" fill="#808080"/><rect x="72" y="815" width="2" height="1" fill="#000"/><rect x="74" y="841" width="1664" height="1" fill="#808080"/><rect x="72" y="841" width="2" height="1" fill="#000"/><rect x="74" y="867" width="1664" height="1" fill="#808080"/><rect x="72" y="867" width="2" height="1" fill="#000"/><rect x="74" y="893" width="1664" height="1" fill="#808080"/><rect x="72" y="893" width="2" height="1" fill="#000"/><rect x="74" y="919" width="1664" height="1" fill="#808080"/><rect x="72" y="919" width="2" height="1" fill="#000"/><rect x="74" y="945" width="1664" height="1" fill="#808080"/><rect x="72" y="945" width="2" height="1" fill="#000"/><rect x="74" y="971" width="1664" height="1" fill="#808080"/><rect x="72" y="971" width="2" height="1" fill="#000"/><rect x="74" y="582" width="1" height="389" fill="#808080"/><rect x="160" y="582" width="1" height="389" fill="#808080"/><rect x="222" y="582" width="1" height="389" fill="#808080"/><rect x="270" y="582" width="1" height="389" fill="#808080"/><rect x="309" y="582" width="1" height="389" fill="#808080"/><rect x="342" y="582" width="1" height="389" fill="#808080"/><rect x="370" y="582" width="1" height="389" fill="#808080"/><rect x="395" y="582" width="1" height="389" fill="#808080"/><rect x="418" y="582" width="1" height="389" fill="#808080"/><rect x="566" y="582" width="1" height="389" fill="#808080"/><rect x="653" y="582" width="1" height="389" fill="#808080"/><rect x="714" y="582" width="1" height="389" fill="#808080"/><rect x="762" y="582" width="1" height="389" fill="#808080"/><rect x="801" y="582" width="1" height="389" fill="#808080"/><rect x="834" y="582" width="1" height="389" fill="#808080"/><rect x="863" y="582" width="1" height="389" fill="#808080"/><rect x="888" y="582" width="1" height="389" fill="#808080"/><rect x="910" y="582" width="1" height="389" fill="#808080"/><rect x="1059" y="582" width="1" height="389" fill="#808080"/><rect x="1145" y="582" width="1" height="389" fill="#808080"/><rect x="1207" y="582" width="1" height="389" fill="#808080"/><rect x="1255" y="582" width="1" height="389" fill="#808080"/><rect x="1294" y="582" width="1" height="389" fill="#808080"/><rect x="1327" y="582" width="1" height="389" fill="#808080"/><rect x="1355" y="582" width="1" height="389" fill="#808080"/><rect x="1381" y="582" width="1" height="389" fill="#808080"/><rect x="1403" y="582" width="1" height="389" fill="#808080"/><rect x="1551" y="582" width="1" height="389" fill="#808080"/><rect x="1638" y="582" width="1" height="389" fill="#808080"/><rect x="1700" y="582" width="1" height="389" fill="#808080"/><rect x="1746" y="580" width="2" height="406" fill="#a0a0a0"/><rect x="1746" y="580" width="22" height="2" fill="#a0a0a0"/><rect x="1748" y="582" width="20" height="390" fill="#ffffe1"/><rect x="1748" y="972" width="20" height="12" fill="#f0f0f0"/><rect x="1768" y="581" width="2" height="405" fill="#ffffff"/><rect x="1748" y="984" width="22" height="2" fill="#ffffff"/><rect x="1750" y="614" width="16" height="357" fill="#0000ff"/><rect x="1768" y="582" width="3" height="1" fill="#000"/><rect x="1768" y="607" width="3" height="1" fill="#000"/><rect x="1768" y="633" width="3" height="1" fill="#000"/><rect x="1768" y="659" width="3" height="1" fill="#000"/><rect x="1768" y="685" width="3" height="1" fill="#000"/><rect x="1768" y="711" width="3" height="1" fill="#000"/><rect x="1768" y="737" width="3" height="1" fill="#000"/><rect x="1768" y="763" width="3" height="1" fill="#000"/><rect x="1768" y="789" width="3" height="1" fill="#000"/><rect x="1768" y="815" width="3" height="1" fill="#000"/><rect x="1768" y="841" width="3" height="1" fill="#000"/><rect x="1768" y="867" width="3" height="1" fill="#000"/><rect x="1768" y="893" width="3" height="1" fill="#000"/><rect x="1768" y="919" width="3" height="1" fill="#000"/><rect x="1768" y="945" width="3" height="1" fill="#000"/><rect x="1768" y="971" width="3" height="1" fill="#000"/><rect x="72" y="972" width="1666" height="13" fill="#f4f4f4"/></svg><div style="position:absolute;left:74px;top:972px;width:1664px;height:12px;background-image:repeating-linear-gradient(45deg,#fafafa 0 1px,#eeeeee 1px 2px)"></div><div style="position:absolute;left:74px;top:971px;width:17px;height:13px;background:#f0f0f0;border:1px solid;border-color:#fff #a0a0a0 #a0a0a0 #fff;box-shadow:inset -1px -1px 0 #808080"></div><div style="position:absolute;left:80px;top:974px;width:0;height:0;border-top:3px solid transparent;border-bottom:3px solid transparent;border-right:4px solid #000"></div><div style="position:absolute;left:1704px;top:971px;width:17px;height:13px;background:#f0f0f0;border:1px solid;border-color:#fff #a0a0a0 #a0a0a0 #fff;box-shadow:inset -1px -1px 0 #808080"></div><div style="position:absolute;left:1721px;top:971px;width:17px;height:13px;background:#f0f0f0;border:1px solid;border-color:#fff #a0a0a0 #a0a0a0 #fff;box-shadow:inset -1px -1px 0 #808080"></div><div style="position:absolute;left:1728px;top:974px;width:0;height:0;border-top:3px solid transparent;border-bottom:3px solid transparent;border-left:4px solid #000"></div><div class="lbl" style="left:0px;width:68px;text-align:right;top:167px">0.0</div><div class="lbl" style="left:1774px;top:167px">0.0</div><div class="lbl" style="left:0px;width:68px;text-align:right;top:192px">-10.0</div><div class="lbl" style="left:1774px;top:192px">-10.0</div><div class="lbl" style="left:0px;width:68px;text-align:right;top:218px">-20.0</div><div class="lbl" style="left:1774px;top:218px">-20.0</div><div class="lbl" style="left:0px;width:68px;text-align:right;top:244px">-30.0</div><div class="lbl" style="left:1774px;top:244px">-30.0</div><div class="lbl" style="left:0px;width:68px;text-align:right;top:270px">-40.0</div><div class="lbl" style="left:1774px;top:270px">-40.0</div><div class="lbl" style="left:0px;width:68px;text-align:right;top:296px">-50.0</div><div class="lbl" style="left:1774px;top:296px">-50.0</div><div class="lbl" style="left:0px;width:68px;text-align:right;top:322px">-60.0</div><div class="lbl" style="left:1774px;top:322px">-60.0</div><div class="lbl" style="left:0px;width:68px;text-align:right;top:348px">-70.0</div><div class="lbl" style="left:1774px;top:348px">-70.0</div><div class="lbl" style="left:0px;width:68px;text-align:right;top:374px">-80.0</div><div class="lbl" style="left:1774px;top:374px">-80.0</div><div class="lbl" style="left:0px;width:68px;text-align:right;top:400px">-90.0</div><div class="lbl" style="left:1774px;top:400px">-90.0</div><div class="lbl" style="left:0px;width:68px;text-align:right;top:426px">-100.0</div><div class="lbl" style="left:1774px;top:426px">-100.0</div><div class="lbl" style="left:0px;width:68px;text-align:right;top:452px">-110.0</div><div class="lbl" style="left:1774px;top:452px">-110.0</div><div class="lbl" style="left:0px;width:68px;text-align:right;top:478px">-120.0</div><div class="lbl" style="left:1774px;top:478px">-120.0</div><div class="lbl" style="left:0px;width:68px;text-align:right;top:504px">-130.0</div><div class="lbl" style="left:1774px;top:504px">-130.0</div><div class="lbl" style="left:0px;width:68px;text-align:right;top:530px">-140.0</div><div class="lbl" style="left:1774px;top:530px">-140.0</div><div class="lbl" style="left:0px;width:68px;text-align:right;top:556px">-150.0</div><div class="lbl" style="left:1774px;top:556px">-150.0</div><div class="lbl" style="left:-6px;top:366px;width:60px;text-align:center;transform:rotate(-90deg)">dBV rms</div><div class="lbl" style="left:0px;width:68px;text-align:right;top:576px">0.0</div><div class="lbl" style="left:1774px;top:576px">0.0</div><div class="lbl" style="left:0px;width:68px;text-align:right;top:601px">-10.0</div><div class="lbl" style="left:1774px;top:601px">-10.0</div><div class="lbl" style="left:0px;width:68px;text-align:right;top:627px">-20.0</div><div class="lbl" style="left:1774px;top:627px">-20.0</div><div class="lbl" style="left:0px;width:68px;text-align:right;top:653px">-30.0</div><div class="lbl" style="left:1774px;top:653px">-30.0</div><div class="lbl" style="left:0px;width:68px;text-align:right;top:679px">-40.0</div><div class="lbl" style="left:1774px;top:679px">-40.0</div><div class="lbl" style="left:0px;width:68px;text-align:right;top:705px">-50.0</div><div class="lbl" style="left:1774px;top:705px">-50.0</div><div class="lbl" style="left:0px;width:68px;text-align:right;top:731px">-60.0</div><div class="lbl" style="left:1774px;top:731px">-60.0</div><div class="lbl" style="left:0px;width:68px;text-align:right;top:757px">-70.0</div><div class="lbl" style="left:1774px;top:757px">-70.0</div><div class="lbl" style="left:0px;width:68px;text-align:right;top:783px">-80.0</div><div class="lbl" style="left:1774px;top:783px">-80.0</div><div class="lbl" style="left:0px;width:68px;text-align:right;top:809px">-90.0</div><div class="lbl" style="left:1774px;top:809px">-90.0</div><div class="lbl" style="left:0px;width:68px;text-align:right;top:835px">-100.0</div><div class="lbl" style="left:1774px;top:835px">-100.0</div><div class="lbl" style="left:0px;width:68px;text-align:right;top:861px">-110.0</div><div class="lbl" style="left:1774px;top:861px">-110.0</div><div class="lbl" style="left:0px;width:68px;text-align:right;top:887px">-120.0</div><div class="lbl" style="left:1774px;top:887px">-120.0</div><div class="lbl" style="left:0px;width:68px;text-align:right;top:913px">-130.0</div><div class="lbl" style="left:1774px;top:913px">-130.0</div><div class="lbl" style="left:0px;width:68px;text-align:right;top:939px">-140.0</div><div class="lbl" style="left:1774px;top:939px">-140.0</div><div class="lbl" style="left:0px;width:68px;text-align:right;top:965px">-150.0</div><div class="lbl" style="left:1774px;top:965px">-150.0</div><div class="lbl" style="left:-6px;top:775px;width:60px;text-align:center;transform:rotate(-90deg)">dBV rms</div><div class="lbl" style="left:876px;top:156px;width:60px;text-align:center">Left</div><div class="lbl" style="left:876px;top:565px;width:60px;text-align:center">Right</div><div style="position:absolute;left:74px;top:984px;width:1px;height:3px;background:#000"></div><div class="lbl" style="left:34px;width:80px;text-align:center;top:988px">20</div><div style="position:absolute;left:160px;top:984px;width:1px;height:3px;background:#000"></div><div class="lbl" style="left:120px;width:80px;text-align:center;top:988px">30</div><div style="position:absolute;left:222px;top:984px;width:1px;height:3px;background:#000"></div><div class="lbl" style="left:182px;width:80px;text-align:center;top:988px">40</div><div style="position:absolute;left:270px;top:984px;width:1px;height:3px;background:#000"></div><div class="lbl" style="left:230px;width:80px;text-align:center;top:988px">50</div><div style="position:absolute;left:309px;top:984px;width:1px;height:3px;background:#000"></div><div class="lbl" style="left:269px;width:80px;text-align:center;top:988px">60</div><div style="position:absolute;left:342px;top:984px;width:1px;height:3px;background:#000"></div><div style="position:absolute;left:370px;top:984px;width:1px;height:3px;background:#000"></div><div class="lbl" style="left:330px;width:80px;text-align:center;top:988px">80</div><div style="position:absolute;left:395px;top:984px;width:1px;height:3px;background:#000"></div><div style="position:absolute;left:418px;top:984px;width:1px;height:3px;background:#000"></div><div class="lbl" style="left:378px;width:80px;text-align:center;top:988px">100</div><div style="position:absolute;left:566px;top:984px;width:1px;height:3px;background:#000"></div><div class="lbl" style="left:526px;width:80px;text-align:center;top:988px">200</div><div style="position:absolute;left:653px;top:984px;width:1px;height:3px;background:#000"></div><div class="lbl" style="left:613px;width:80px;text-align:center;top:988px">300</div><div style="position:absolute;left:714px;top:984px;width:1px;height:3px;background:#000"></div><div class="lbl" style="left:674px;width:80px;text-align:center;top:988px">400</div><div style="position:absolute;left:762px;top:984px;width:1px;height:3px;background:#000"></div><div class="lbl" style="left:722px;width:80px;text-align:center;top:988px">500</div><div style="position:absolute;left:801px;top:984px;width:1px;height:3px;background:#000"></div><div class="lbl" style="left:761px;width:80px;text-align:center;top:988px">600</div><div style="position:absolute;left:834px;top:984px;width:1px;height:3px;background:#000"></div><div style="position:absolute;left:863px;top:984px;width:1px;height:3px;background:#000"></div><div class="lbl" style="left:823px;width:80px;text-align:center;top:988px">800</div><div style="position:absolute;left:888px;top:984px;width:1px;height:3px;background:#000"></div><div style="position:absolute;left:910px;top:984px;width:1px;height:3px;background:#000"></div><div class="lbl" style="left:870px;width:80px;text-align:center;top:988px">1.0k</div><div style="position:absolute;left:1059px;top:984px;width:1px;height:3px;background:#000"></div><div class="lbl" style="left:1019px;width:80px;text-align:center;top:988px">2.0k</div><div style="position:absolute;left:1145px;top:984px;width:1px;height:3px;background:#000"></div><div class="lbl" style="left:1105px;width:80px;text-align:center;top:988px">3.0k</div><div style="position:absolute;left:1207px;top:984px;width:1px;height:3px;background:#000"></div><div class="lbl" style="left:1167px;width:80px;text-align:center;top:988px">4.0k</div><div style="position:absolute;left:1255px;top:984px;width:1px;height:3px;background:#000"></div><div class="lbl" style="left:1215px;width:80px;text-align:center;top:988px">5.0k</div><div style="position:absolute;left:1294px;top:984px;width:1px;height:3px;background:#000"></div><div class="lbl" style="left:1254px;width:80px;text-align:center;top:988px">6.0k</div><div style="position:absolute;left:1327px;top:984px;width:1px;height:3px;background:#000"></div><div style="position:absolute;left:1355px;top:984px;width:1px;height:3px;background:#000"></div><div class="lbl" style="left:1315px;width:80px;text-align:center;top:988px">8.0k</div><div style="position:absolute;left:1381px;top:984px;width:1px;height:3px;background:#000"></div><div style="position:absolute;left:1403px;top:984px;width:1px;height:3px;background:#000"></div><div class="lbl" style="left:1363px;width:80px;text-align:center;top:988px">10.0k</div><div style="position:absolute;left:1551px;top:984px;width:1px;height:3px;background:#000"></div><div class="lbl" style="left:1511px;width:80px;text-align:center;top:988px">20.0k</div><div style="position:absolute;left:1638px;top:984px;width:1px;height:3px;background:#000"></div><div class="lbl" style="left:1598px;width:80px;text-align:center;top:988px">30.0k</div><div style="position:absolute;left:1700px;top:984px;width:1px;height:3px;background:#000"></div><div class="lbl" style="left:1660px;width:80px;text-align:center;top:988px">40.0k</div><div class="lbl" style="left:1738px;width:40px;text-align:center;top:988px">Pwr</div><div class="lbl" style="left:900px;width:120px;text-align:center;top:999px">Frequency (Hz)</div><div style="position:absolute;left:1754px;top:1002px;width:10px;height:10px;background:#fff;border:1px solid #696969"></div><div style="position:absolute;left:1757px;top:1006px;width:4px;height:1px;background:#000"></div><div style="position:absolute;left:1896px;top:1002px;width:10px;height:10px;background:#fff;border:1px solid #696969"></div><div style="position:absolute;left:1899px;top:1006px;width:4px;height:1px;background:#000"></div><div class="lbl" style="left:1835px;top:159px;text-decoration:underline">Overlays</div><div class="lbl" style="left:1803px;top:175px;width:30px;text-align:center;transform:rotate(-90deg)">Set</div><div class="lbl" style="left:1819px;top:177px;width:30px;text-align:center;transform:rotate(-90deg)">On</div><div style="position:absolute;left:1811px;top:194px;width:14px;height:14px;background:#f0f0f0;border-right:1px solid #696969;border-bottom:1px solid #696969;box-shadow:inset 1px 1px 0 #fff,inset -1px -1px 0 #a0a0a0"></div><div class="lbl" style="left:1811px;top:194px;width:14px;text-align:center">1</div><div style="position:absolute;left:1828px;top:195px;width:13px;height:13px;background:#fff;border:1px solid;border-color:#a0a0a0 #fff #fff #a0a0a0;box-shadow:inset 1px 1px 0 #696969,inset -1px -1px 0 #e3e3e3"></div><div class="lbl" style="left:1844px;top:195px;color:#008000">Overlay 1</div><div style="position:absolute;left:1811px;top:210px;width:14px;height:14px;background:#f0f0f0;border-right:1px solid #696969;border-bottom:1px solid #696969;box-shadow:inset 1px 1px 0 #fff,inset -1px -1px 0 #a0a0a0"></div><div class="lbl" style="left:1811px;top:210px;width:14px;text-align:center">2</div><div style="position:absolute;left:1828px;top:211px;width:13px;height:13px;background:#fff;border:1px solid;border-color:#a0a0a0 #fff #fff #a0a0a0;box-shadow:inset 1px 1px 0 #696969,inset -1px -1px 0 #e3e3e3"></div><div class="lbl" style="left:1844px;top:211px;color:#00b0b0">Overlay 2</div><div style="position:absolute;left:1811px;top:226px;width:14px;height:14px;background:#f0f0f0;border-right:1px solid #696969;border-bottom:1px solid #696969;box-shadow:inset 1px 1px 0 #fff,inset -1px -1px 0 #a0a0a0"></div><div class="lbl" style="left:1811px;top:226px;width:14px;text-align:center">3</div><div style="position:absolute;left:1828px;top:227px;width:13px;height:13px;background:#fff;border:1px solid;border-color:#a0a0a0 #fff #fff #a0a0a0;box-shadow:inset 1px 1px 0 #696969,inset -1px -1px 0 #e3e3e3"></div><div class="lbl" style="left:1844px;top:227px;color:#800080">Overlay 3</div><div style="position:absolute;left:1811px;top:242px;width:14px;height:14px;background:#f0f0f0;border-right:1px solid #696969;border-bottom:1px solid #696969;box-shadow:inset 1px 1px 0 #fff,inset -1px -1px 0 #a0a0a0"></div><div class="lbl" style="left:1811px;top:242px;width:14px;text-align:center">4</div><div style="position:absolute;left:1828px;top:243px;width:13px;height:13px;background:#fff;border:1px solid;border-color:#a0a0a0 #fff #fff #a0a0a0;box-shadow:inset 1px 1px 0 #696969,inset -1px -1px 0 #e3e3e3"></div><div class="lbl" style="left:1844px;top:243px;color:#ff00ff">Overlay 4</div><div style="position:absolute;left:1811px;top:258px;width:14px;height:14px;background:#f0f0f0;border-right:1px solid #696969;border-bottom:1px solid #696969;box-shadow:inset 1px 1px 0 #fff,inset -1px -1px 0 #a0a0a0"></div><div class="lbl" style="left:1811px;top:258px;width:14px;text-align:center">5</div><div style="position:absolute;left:1828px;top:259px;width:13px;height:13px;background:#fff;border:1px solid;border-color:#a0a0a0 #fff #fff #a0a0a0;box-shadow:inset 1px 1px 0 #696969,inset -1px -1px 0 #e3e3e3"></div><div class="lbl" style="left:1844px;top:259px;color:#804000">Overlay 5</div><div style="position:absolute;left:1811px;top:274px;width:14px;height:14px;background:#f0f0f0;border-right:1px solid #696969;border-bottom:1px solid #696969;box-shadow:inset 1px 1px 0 #fff,inset -1px -1px 0 #a0a0a0"></div><div class="lbl" style="left:1811px;top:274px;width:14px;text-align:center">6</div><div style="position:absolute;left:1828px;top:275px;width:13px;height:13px;background:#fff;border:1px solid;border-color:#a0a0a0 #fff #fff #a0a0a0;box-shadow:inset 1px 1px 0 #696969,inset -1px -1px 0 #e3e3e3"></div><div class="lbl" style="left:1844px;top:275px;color:#ff8040">Overlay 6</div><div style="position:absolute;left:1811px;top:290px;width:14px;height:14px;background:#f0f0f0;border-right:1px solid #696969;border-bottom:1px solid #696969;box-shadow:inset 1px 1px 0 #fff,inset -1px -1px 0 #a0a0a0"></div><div class="lbl" style="left:1811px;top:290px;width:14px;text-align:center">C</div><div style="position:absolute;left:1828px;top:291px;width:13px;height:13px;background:#fff;border:1px solid;border-color:#a0a0a0 #fff #fff #a0a0a0;box-shadow:inset 1px 1px 0 #696969,inset -1px -1px 0 #e3e3e3"></div><div class="lbl" style="left:1844px;top:291px">Composite</div><div style="position:absolute;left:1808px;top:307px;width:64px;height:17px;background:#f0f0f0;border:1px solid;border-color:#fff #696969 #696969 #fff;box-shadow:inset -1px -1px 0 #a0a0a0"></div><div class="lbl" style="left:1808px;top:309px;width:64px;text-align:center">Options...</div><div class="lbl" style="left:1803px;top:584px;width:30px;text-align:center;transform:rotate(-90deg)">Set</div><div class="lbl" style="left:1819px;top:586px;width:30px;text-align:center;transform:rotate(-90deg)">On</div><div style="position:absolute;left:1811px;top:603px;width:14px;height:14px;background:#f0f0f0;border-right:1px solid #696969;border-bottom:1px solid #696969;box-shadow:inset 1px 1px 0 #fff,inset -1px -1px 0 #a0a0a0"></div><div class="lbl" style="left:1811px;top:603px;width:14px;text-align:center">1</div><div style="position:absolute;left:1828px;top:604px;width:13px;height:13px;background:#fff;border:1px solid;border-color:#a0a0a0 #fff #fff #a0a0a0;box-shadow:inset 1px 1px 0 #696969,inset -1px -1px 0 #e3e3e3"></div><div class="lbl" style="left:1844px;top:604px;color:#008000">Overlay 1</div><div style="position:absolute;left:1811px;top:619px;width:14px;height:14px;background:#f0f0f0;border-right:1px solid #696969;border-bottom:1px solid #696969;box-shadow:inset 1px 1px 0 #fff,inset -1px -1px 0 #a0a0a0"></div><div class="lbl" style="left:1811px;top:619px;width:14px;text-align:center">2</div><div style="position:absolute;left:1828px;top:620px;width:13px;height:13px;background:#fff;border:1px solid;border-color:#a0a0a0 #fff #fff #a0a0a0;box-shadow:inset 1px 1px 0 #696969,inset -1px -1px 0 #e3e3e3"></div><div class="lbl" style="left:1844px;top:620px;color:#00b0b0">Overlay 2</div><div style="position:absolute;left:1811px;top:635px;width:14px;height:14px;background:#f0f0f0;border-right:1px solid #696969;border-bottom:1px solid #696969;box-shadow:inset 1px 1px 0 #fff,inset -1px -1px 0 #a0a0a0"></div><div class="lbl" style="left:1811px;top:635px;width:14px;text-align:center">3</div><div style="position:absolute;left:1828px;top:636px;width:13px;height:13px;background:#fff;border:1px solid;border-color:#a0a0a0 #fff #fff #a0a0a0;box-shadow:inset 1px 1px 0 #696969,inset -1px -1px 0 #e3e3e3"></div><div class="lbl" style="left:1844px;top:636px;color:#800080">Overlay 3</div><div style="position:absolute;left:1811px;top:651px;width:14px;height:14px;background:#f0f0f0;border-right:1px solid #696969;border-bottom:1px solid #696969;box-shadow:inset 1px 1px 0 #fff,inset -1px -1px 0 #a0a0a0"></div><div class="lbl" style="left:1811px;top:651px;width:14px;text-align:center">4</div><div style="position:absolute;left:1828px;top:652px;width:13px;height:13px;background:#fff;border:1px solid;border-color:#a0a0a0 #fff #fff #a0a0a0;box-shadow:inset 1px 1px 0 #696969,inset -1px -1px 0 #e3e3e3"></div><div class="lbl" style="left:1844px;top:652px;color:#ff00ff">Overlay 4</div><div style="position:absolute;left:1811px;top:667px;width:14px;height:14px;background:#f0f0f0;border-right:1px solid #696969;border-bottom:1px solid #696969;box-shadow:inset 1px 1px 0 #fff,inset -1px -1px 0 #a0a0a0"></div><div class="lbl" style="left:1811px;top:667px;width:14px;text-align:center">5</div><div style="position:absolute;left:1828px;top:668px;width:13px;height:13px;background:#fff;border:1px solid;border-color:#a0a0a0 #fff #fff #a0a0a0;box-shadow:inset 1px 1px 0 #696969,inset -1px -1px 0 #e3e3e3"></div><div class="lbl" style="left:1844px;top:668px;color:#804000">Overlay 5</div><div style="position:absolute;left:1811px;top:683px;width:14px;height:14px;background:#f0f0f0;border-right:1px solid #696969;border-bottom:1px solid #696969;box-shadow:inset 1px 1px 0 #fff,inset -1px -1px 0 #a0a0a0"></div><div class="lbl" style="left:1811px;top:683px;width:14px;text-align:center">6</div><div style="position:absolute;left:1828px;top:684px;width:13px;height:13px;background:#fff;border:1px solid;border-color:#a0a0a0 #fff #fff #a0a0a0;box-shadow:inset 1px 1px 0 #696969,inset -1px -1px 0 #e3e3e3"></div><div class="lbl" style="left:1844px;top:684px;color:#ff8040">Overlay 6</div><div style="position:absolute;left:1811px;top:699px;width:14px;height:14px;background:#f0f0f0;border-right:1px solid #696969;border-bottom:1px solid #696969;box-shadow:inset 1px 1px 0 #fff,inset -1px -1px 0 #a0a0a0"></div><div class="lbl" style="left:1811px;top:699px;width:14px;text-align:center">C</div><div style="position:absolute;left:1828px;top:700px;width:13px;height:13px;background:#fff;border:1px solid;border-color:#a0a0a0 #fff #fff #a0a0a0;box-shadow:inset 1px 1px 0 #696969,inset -1px -1px 0 #e3e3e3"></div><div class="lbl" style="left:1844px;top:700px">Composite</div><div style="position:absolute;left:1808px;top:716px;width:64px;height:17px;background:#f0f0f0;border:1px solid;border-color:#fff #696969 #696969 #fff;box-shadow:inset -1px -1px 0 #a0a0a0"></div><div class="lbl" style="left:1808px;top:718px;width:64px;text-align:center">Options...</div><div style="position:absolute;left:10px;top:1014px;width:1900px;height:1px;background:#d8d8d8"></div><div style="position:absolute;left:10px;top:1015px;width:1900px;height:3px;background:#ffffff"></div><div style="position:absolute;left:13px;top:1019px;width:118px;height:18px;border:1px solid;border-color:#a0a0a0 #fff #fff #a0a0a0"></div><div style="position:absolute;left:17px;top:1021px;font-size:12px;line-height:14px;color:#000;white-space:nowrap;">Running...</div><div style="position:absolute;left:133px;top:1019px;width:100px;height:18px;border:1px solid;border-color:#a0a0a0 #fff #fff #a0a0a0"></div><div style="position:absolute;left:137px;top:1021px;font-size:12px;line-height:14px;color:#000;white-space:nowrap;">Real Time</div><div style="position:absolute;left:236px;top:1019px;width:71px;height:18px;border:1px solid;border-color:#a0a0a0 #fff #fff #a0a0a0"></div><div style="position:absolute;left:240px;top:1021px;font-size:12px;line-height:14px;color:#000;white-space:nowrap;">96000 Hz</div><div style="position:absolute;left:309px;top:1019px;width:50px;height:18px;border:1px solid;border-color:#a0a0a0 #fff #fff #a0a0a0"></div><div style="position:absolute;left:313px;top:1021px;font-size:12px;line-height:14px;color:#000;white-space:nowrap;">24 Bit</div><div style="position:absolute;left:362px;top:1019px;width:51px;height:18px;border:1px solid;border-color:#a0a0a0 #fff #fff #a0a0a0"></div><div style="position:absolute;left:366px;top:1021px;font-size:12px;line-height:14px;color:#000;white-space:nowrap;">Stereo</div><div style="position:absolute;left:415px;top:1019px;width:101px;height:18px;border:1px solid;border-color:#a0a0a0 #fff #fff #a0a0a0"></div><div style="position:absolute;left:419px;top:1021px;font-size:12px;line-height:14px;color:#000;white-space:nowrap;">FFT 65536 pts</div><div style="position:absolute;left:518px;top:1019px;width:73px;height:18px;border:1px solid;border-color:#a0a0a0 #fff #fff #a0a0a0"></div><div style="position:absolute;left:522px;top:1021px;font-size:12px;line-height:14px;color:#000;white-space:nowrap;">Hanning</div><div style="position:absolute;left:593px;top:1019px;width:1315px;height:18px;border:1px solid;border-color:#a0a0a0 #fff #fff #a0a0a0"></div><svg width="1920" height="1080" style="shape-rendering:crispEdges"><defs><linearGradient id="mg" x1="596" y1="0" x2="1790" y2="0" gradientUnits="userSpaceOnUse"><stop offset="0" stop-color="#00ff00"/><stop offset="0.33" stop-color="#44e800"/><stop offset="0.67" stop-color="#a8d000"/><stop offset="1" stop-color="#f0b400"/></linearGradient><pattern id="mp" x="596" y="0" width="4" height="20" patternUnits="userSpaceOnUse"><rect x="3" y="0" width="1" height="20" fill="#808080"/></pattern></defs><rect x="596" y="1021" width="1194" height="6" fill="url(#mg)"/><rect x="596" y="1028" width="1194" height="6" fill="url(#mg)"/><rect x="596" y="1021" width="1194" height="6" fill="url(#mp)"/><rect x="596" y="1028" width="1194" height="6" fill="url(#mp)"/></svg><div style="position:absolute;left:9px;top:1042px;width:1902px;height:6px;background:linear-gradient(#c8c8c8,#ffffff00)"></div><div style="position:absolute;left:14px;top:1061px;font-size:11.4px;line-height:13.4px;color:#1e1e1e;white-space:nowrap;">Элементов: 16</div><div style="position:absolute;left:102px;top:1060px;width:1px;height:16px;background:#e8e8e8"></div><div style="position:absolute;left:268px;top:1060px;width:1px;height:16px;background:#ececec"></div><div style="position:absolute;left:113px;top:1061px;font-size:11.4px;line-height:13.4px;color:#1e1e1e;white-space:nowrap;">Выбран 1 элемент: 56,8 КБ</div><div style="position:absolute;left:0px;top:1078px;width:1920px;height:2px;background:#1a1a1a"></div><svg width="1920" height="1080" style="shape-rendering:crispEdges"><rect x="1875.5" y="1060.5" width="4" height="12" fill="#fff" stroke="#a0a0a0"/><rect x="1877" y="1062" width="1" height="1" fill="#408040"/><rect x="1877" y="1066" width="1" height="1" fill="#4080ff"/><rect x="1877" y="1070" width="1" height="1" fill="#e02020"/><path d="M1881,1062.5 H1884 M1886,1062.5 H1891 M1881,1066.5 H1884 M1886,1066.5 H1891 M1881,1070.5 H1884 M1886,1070.5 H1891" stroke="#606060"/><rect x="1894.5" y="1056.5" width="21" height="22" fill="#cce8ff" stroke="#26a0e8"/><rect x="1899.5" y="1062.5" width="13" height="10" fill="#fff" stroke="#909090"/><rect x="1901" y="1064" width="10" height="7" fill="#5a9ad8"/><rect x="1901" y="1068" width="10" height="3" fill="#3a7040"/></svg><svg width="1920" height="1080" style="shape-rendering:crispEdges"><polyline points="75.0,476.2 88.7,477.3 106.5,475.2 125.0,475.5 144.0,477.3 155.4,484.6 166.9,472.0 176.2,469.6 190.8,469.0 199.2,466.9 222.0,454.4 238.7,445.5 250.4,432.3 250.9,431.7 251.4,431.1 251.9,430.4 252.4,429.8 252.9,429.2 253.4,428.6 253.9,427.9 254.4,427.3 254.9,426.7 255.4,426.1 255.9,425.5 256.4,424.9 256.9,424.3 257.4,423.7 257.9,423.1 258.4,422.5 258.9,421.9 259.4,421.2 259.9,420.6 260.4,420.0 260.9,419.4 261.4,418.8 261.9,418.2 262.4,417.5 262.9,416.9 263.4,416.3 263.9,415.6 264.4,415.0 264.9,414.3 265.4,413.7 265.9,413.0 266.4,412.3 266.9,411.7 267.4,411.0 267.9,410.3 268.4,409.6 268.9,408.9 269.4,408.2 269.9,407.4 270.4,406.7 270.9,406.0 271.4,405.2 271.9,404.5 272.4,403.7 272.9,403.0 273.4,402.2 273.9,401.5 274.4,400.7 274.9,400.0 275.4,399.2 275.9,398.4 276.4,397.6 276.9,396.9 277.4,396.0 277.9,395.2 278.4,394.4 278.9,393.5 279.4,392.7 279.9,391.8 280.4,390.9 280.9,389.9 281.4,389.0 281.9,388.0 282.4,387.0 282.9,386.0 283.4,385.0 283.9,383.9 284.4,382.8 284.9,381.6 285.4,380.5 285.9,379.3 286.4,378.0 286.9,376.8 287.4,375.5 287.9,374.1 288.4,372.7 288.9,371.2 289.4,369.7 289.9,368.1 290.4,366.3 290.9,364.5 291.4,362.5 291.9,360.5 292.4,358.3 292.9,356.0 293.4,353.5 293.9,350.4 294.4,346.8 294.9,342.8 295.4,338.4 295.9,334.0 296.4,329.5 296.9,325.0 297.4,320.3 297.9,315.4 298.4,310.2 298.9,304.9 299.4,299.3 299.9,293.6 300.4,287.5 300.9,281.0 301.4,273.7 301.9,265.2 302.4,256.1 302.9,247.4 303.4,238.9 303.9,230.4 309.5,207.5 314.7,224.9 315.2,234.8 315.7,244.8 316.2,254.9 316.7,265.2 317.2,275.0 317.7,283.7 318.2,292.2 318.7,299.3 319.2,304.5 319.7,308.7 320.2,312.3 320.7,315.4 321.2,318.3 321.7,321.0 322.2,323.8 322.7,326.7 323.2,329.9 323.7,333.4 324.2,336.9 324.7,340.5 325.2,344.0 325.7,347.4 326.2,350.6 326.7,353.5 327.2,356.1 327.7,358.5 328.2,360.8 328.7,363.1 329.2,365.2 329.7,367.3 330.2,369.3 330.7,371.2 331.2,373.1 331.7,374.9 332.2,376.7 332.7,378.4 333.2,380.1 333.7,381.8 334.2,383.4 334.7,385.0 335.2,386.6 335.7,388.1 336.2,389.6 336.7,391.0 337.2,392.4 337.7,393.8 338.2,395.2 338.7,396.6 339.2,397.9 339.7,399.3 340.2,400.6 340.7,401.9 341.2,403.2 341.7,404.5 342.2,405.9 342.7,407.2 343.2,408.6 343.7,409.9 344.2,411.3 344.7,412.6 345.2,414.0 345.7,415.4 346.2,416.7 346.7,418.1 347.2,419.4 347.7,420.8 348.2,422.0 348.7,423.3 349.2,424.6 349.7,425.8 350.2,426.9 350.7,428.1 351.2,429.2 351.7,430.2 352.2,431.2 352.7,432.2 353.2,433.0 353.7,433.9 354.2,434.8 354.7,435.6 355.2,436.4 355.7,437.2 356.2,437.9 356.7,438.7 357.2,439.4 357.7,440.1 358.2,440.8 358.7,441.5 359.2,442.1 359.7,442.8 360.2,443.4 360.7,444.1 361.2,444.7 361.7,445.3 362.2,445.9 362.7,446.6 363.2,447.2 363.7,447.8 364.2,448.4 364.7,449.0 365.2,449.6 365.7,450.2 366.2,450.8 366.7,451.4 367.2,452.0 367.7,452.7 368.2,453.3 368.7,453.9 369.2,454.6 369.7,455.3 370.0,453.0 376.0,463.8 383.0,465.6 388.0,475.0 394.0,473.8 400.0,478.0 407.5,483.8 413.0,484.4 420.0,493.8 424.5,493.8 430.0,508.0 433.0,499.4 437.0,494.4 440.0,495.0 442.0,492.5 445.0,496.2 447.5,492.5 452.0,498.8 454.0,479.4 455.0,466.0 456.5,455.0 457.5,446.2 459.0,453.0 460.5,459.4 461.5,480.0 462.5,498.0 466.0,495.0 469.0,497.5 470.5,519.4 472.5,500.0 474.0,503.8 476.5,500.0 479.5,505.0 482.0,510.0 484.5,495.0 487.5,502.5 490.0,506.2 492.0,503.8 494.0,506.2 496.0,495.0 498.5,495.0 500.0,510.0 501.5,503.0 503.5,501.9 505.5,505.9 507.5,516.3 509.5,507.9 511.5,513.4 513.5,505.0 515.5,514.2 517.5,501.6 519.5,504.2 521.5,494.3 523.5,503.3 525.5,502.4 527.5,509.1 529.5,511.1 531.5,498.2 533.5,506.5 535.5,504.0 537.5,505.5 539.5,502.6 541.5,518.0 543.5,518.2 545.5,504.2 547.5,493.8 549.5,519.3 551.5,512.0 553.5,506.4 555.5,510.9 557.5,509.6 559.5,510.2 561.5,502.2 563.5,507.7 565.5,506.9 567.5,515.2 569.5,504.2 571.5,498.0 573.5,504.5 575.5,510.2 577.5,515.7 579.5,505.6 581.5,505.8 583.5,509.9 585.5,522.0 587.5,513.1 589.5,515.1 591.5,513.9 593.5,507.3 595.5,514.9 597.5,510.3 599.5,501.4 601.5,513.4 603.5,509.4 605.5,505.4 607.5,512.7 609.5,517.8 611.5,507.7 613.5,504.2 615.5,519.2 616.5,511.1 617.5,512.1 618.5,502.0 619.5,518.4 620.5,510.8 621.5,517.7 622.5,515.0 623.5,509.3 624.5,511.5 625.5,510.3 626.5,513.6 627.5,518.4 628.5,504.3 629.5,501.2 630.5,509.6 631.5,511.5 632.5,502.1 633.5,506.7 634.5,508.1 635.5,504.5 636.5,514.6 637.5,514.3 638.5,509.1 639.5,515.9 640.5,509.5 641.5,508.3 642.5,506.5 643.5,506.8 644.5,517.4 645.5,510.5 646.5,507.8 647.5,504.1 648.5,504.3 649.5,511.3 650.5,510.9 651.5,516.3 652.5,512.4 653.5,514.3 654.5,517.0 655.5,511.5 656.5,504.3 657.5,501.4 658.5,508.2 659.5,510.5 660.5,508.1 661.5,505.6 662.5,507.0 663.5,507.8 664.5,511.1 665.5,511.5 666.5,498.1 667.5,504.4 668.5,514.7 669.5,505.8 670.5,514.1 671.5,508.7 672.5,512.8 673.5,508.6 674.5,513.0 675.5,511.4 676.5,507.4 677.5,506.8 678.5,519.7 679.5,503.5 680.5,521.3 681.5,517.9 682.5,512.9 683.5,507.4 684.5,510.5 685.5,512.9 686.5,504.7 687.5,509.8 688.5,510.3 689.5,505.8 690.5,513.8 691.5,498.6 692.5,503.4 693.5,510.1 694.5,509.8 695.5,509.2 696.5,506.2 697.5,507.9 698.5,514.3 699.5,515.4 700.5,504.3 701.5,517.3 702.5,514.4 703.5,504.0 704.5,517.5 705.5,507.3 706.5,504.6 707.5,497.6 708.5,503.2 709.5,509.1 710.5,515.4 711.5,503.0 712.5,503.7 713.5,502.0 714.5,502.1 715.5,510.0 716.5,511.9 717.5,515.8 718.5,508.0 719.5,506.0 720.5,513.4 721.5,509.2 722.5,505.3 723.5,502.4 724.5,514.0 725.5,511.5 726.5,515.2 727.5,515.3 728.5,506.2 729.5,505.6 730.5,512.5 731.5,511.7 732.5,513.5 733.5,501.4 734.5,513.5 735.5,512.2 736.5,514.7 737.5,507.3 738.5,513.1 739.5,519.8 740.5,509.4 741.5,509.9 742.5,511.6 743.5,510.4 744.5,509.5 745.5,508.9 746.5,505.1 747.5,507.3 748.5,505.7 749.5,507.4 750.5,508.3 751.5,511.4 752.5,510.5 753.5,517.2 754.5,505.4 755.5,500.8 756.5,511.4 757.5,515.6 758.5,509.3 759.5,512.4 760.5,506.5 761.5,518.8 762.5,503.3 763.5,504.2 764.5,508.9 765.5,521.2 766.5,512.7 767.5,503.7 768.5,510.4 769.5,515.4 770.5,510.5 771.5,511.1 772.5,517.1 773.5,511.5 774.5,506.7 775.5,506.7 776.5,506.4 777.5,509.7 778.5,514.5 779.5,511.6 780.5,502.0 781.5,508.6 782.5,507.8 783.5,516.4 784.5,506.1 785.5,510.5 786.5,504.0 787.5,513.4 788.5,512.1 789.5,512.8 790.5,514.5 791.5,513.2 792.5,511.0 793.5,511.8 794.5,510.1 795.5,502.6 796.5,509.0 797.5,509.2 798.5,515.0 799.5,503.1 800.5,515.3 801.5,521.7 802.5,511.2 803.5,510.1 804.5,516.1 805.5,505.6 806.5,519.6 807.5,519.0 808.5,512.4 809.5,513.8 810.5,513.2 811.5,509.3 812.5,512.8 813.5,505.6 814.5,519.1 815.5,509.6 816.5,502.6 817.5,511.2 818.5,508.4 819.5,506.1 820.5,511.5 821.5,513.3 822.5,523.7 823.5,515.4 824.5,507.2 825.5,512.1 826.5,516.1 827.5,510.5 828.5,511.5 829.5,509.9 830.5,512.7 831.5,509.5 832.5,515.0 833.5,503.6 834.5,509.4 835.5,513.6 836.5,509.2 837.5,512.0 838.5,510.9 839.5,514.7 840.5,513.6 841.5,514.3 842.5,514.2 843.5,510.6 844.5,515.7 845.5,515.5 846.5,512.0 847.5,517.8 848.5,513.5 849.5,512.3 850.5,512.2 851.5,513.9 852.5,525.3 853.5,512.8 854.5,511.9 855.5,516.7 856.5,510.0 857.5,514.3 858.5,517.7 859.5,515.7 860.5,513.7 861.5,516.4 862.5,516.0 863.5,510.9 864.5,507.2 865.5,516.4 866.5,517.0 867.5,507.2 868.5,515.5 869.5,515.3 870.5,515.1 871.5,513.2 872.5,512.9 873.5,511.7 874.5,508.4 875.5,510.6 876.5,509.6 877.5,520.1 878.5,511.5 879.5,503.7 880.5,516.6 881.5,508.1 882.5,517.3 883.5,516.1 884.5,516.7 885.5,521.4 886.5,515.1 887.5,518.1 888.5,509.3 889.5,518.7 890.5,521.5 891.5,505.8 892.5,514.6 893.5,513.0 894.5,504.4 895.5,515.9 896.5,520.2 897.5,515.2 898.5,514.4 899.5,515.5 900.5,512.3 901.5,519.2 902.5,509.5 903.5,514.9 904.5,515.1 905.5,507.3 906.5,521.4 907.5,516.6 908.5,508.3 909.5,512.4 910.5,511.9 911.5,515.4 912.5,510.2 913.5,511.6 914.5,517.2 915.5,518.5 916.5,517.5 917.5,514.7 918.5,516.9 919.5,525.2 920.5,518.0 921.5,514.3 922.5,511.7 923.5,514.6 924.5,520.9 925.5,516.9 926.5,512.5 927.5,520.3 928.5,515.9 929.5,517.9 930.5,514.0 931.5,514.2 932.5,517.9 933.5,512.3 934.5,514.8 935.5,517.2 936.5,512.9 937.5,510.3 938.5,517.3 939.5,517.7 940.5,511.2 941.5,517.2 942.5,512.7 943.5,509.1 944.5,514.9 945.5,513.7 946.5,515.7 947.5,513.2 948.5,519.5 949.5,520.5 950.5,515.3 951.5,523.6 952.5,509.9 953.5,508.8 954.5,514.1 955.5,517.1 956.5,516.6 957.5,514.0 958.5,516.0 959.5,510.2 960.5,517.2 961.5,512.0 962.5,515.7 963.5,519.7 964.5,510.8 965.5,511.2 966.5,514.2 967.5,515.3 968.5,514.4 969.5,515.2 970.5,517.7 971.5,512.9 972.5,513.0 973.5,514.3 974.5,515.8 975.5,517.0 976.5,516.6 977.5,514.7 978.5,520.8 979.5,520.1 980.5,514.4 981.5,517.9 982.5,511.3 983.5,515.4 984.5,515.2 985.5,510.8 986.5,511.0 987.5,514.9 988.5,515.7 989.5,510.2 990.5,518.5 991.5,519.1 992.5,515.9 993.5,519.7 994.5,517.8 995.5,512.6 996.5,510.5 997.5,515.1 998.5,514.4 999.5,517.9 1000.5,511.1 1001.5,514.4 1002.5,518.2 1003.5,515.1 1004.5,514.1 1005.5,512.7 1006.5,509.5 1007.5,513.0 1008.5,521.0 1009.5,515.8 1010.5,510.9 1011.5,519.1 1012.5,512.7 1013.5,521.9 1014.5,509.2 1015.5,518.0 1016.5,512.2 1017.5,516.7 1018.5,507.5 1019.5,514.9 1020.5,512.2 1021.5,521.0 1022.5,514.9 1023.5,519.3 1024.5,522.7 1025.5,515.7 1026.5,515.9 1027.5,510.0 1028.5,512.4 1029.5,515.9 1030.5,513.2 1031.5,512.4 1032.5,518.6 1033.5,513.4 1034.5,514.6 1035.5,512.4 1036.5,512.6 1037.5,511.9 1038.5,512.9 1039.5,512.5 1040.5,512.7 1041.5,510.7 1042.5,516.7 1043.5,516.6 1044.5,512.2 1045.5,515.0 1046.5,512.6 1047.5,516.5 1048.5,519.1 1049.5,516.6 1050.5,517.6 1051.5,516.4 1052.5,513.8 1053.5,519.5 1054.5,518.5 1055.5,516.4 1056.5,515.7 1057.5,511.7 1058.5,515.5 1059.5,520.2 1060.5,509.8 1061.5,515.2 1062.5,512.1 1063.5,515.2 1064.5,516.9 1065.5,504.1 1066.5,518.9 1067.5,513.2 1068.5,514.0 1069.5,516.3 1070.5,512.5 1071.5,512.7 1072.5,514.8 1073.5,514.0 1074.5,516.1 1075.5,519.1 1076.5,519.6 1077.5,513.9 1078.5,516.3 1079.5,512.2 1080.5,517.5 1081.5,511.2 1082.5,519.2 1083.5,514.1 1084.5,519.1 1085.5,516.5 1086.5,509.9 1087.5,513.7 1088.5,514.2 1089.5,515.9 1090.5,515.4 1091.5,519.4 1092.5,515.3 1093.5,515.8 1094.5,511.4 1095.5,514.4 1096.5,516.7 1097.5,515.8 1098.5,515.1 1099.5,516.7 1100.5,511.0 1101.5,518.8 1102.5,516.3 1103.5,521.4 1104.5,516.4 1105.5,511.2 1106.5,510.2 1107.5,514.6 1108.5,514.9 1109.5,514.4 1110.5,515.2 1111.5,516.4 1112.5,520.2 1113.5,521.5 1114.5,519.1 1115.5,516.3 1116.5,515.0 1117.5,520.4 1118.5,516.3 1119.5,515.3 1120.5,510.3 1121.5,515.8 1122.5,519.9 1123.5,514.7 1124.5,515.3 1125.5,513.1 1126.5,512.3 1127.5,514.6 1128.5,516.6 1129.5,515.9 1130.5,514.1 1131.5,512.5 1132.5,509.7 1133.5,515.3 1134.5,511.8 1135.5,509.6 1136.5,517.7 1137.5,516.5 1138.5,511.4 1139.5,513.4 1140.5,512.7 1141.5,514.3 1142.5,509.5 1143.5,515.4 1144.5,516.3 1145.5,519.3 1146.5,519.1 1147.5,518.8 1148.5,514.3 1149.5,516.3 1150.5,508.6 1151.5,520.5 1152.5,517.7 1153.5,516.7 1154.5,512.7 1155.5,514.4 1156.5,510.8 1157.5,514.3 1158.5,519.4 1159.5,518.1 1160.5,513.6 1161.5,517.2 1162.5,515.4 1163.5,520.3 1164.5,516.4 1165.5,515.7 1166.5,512.8 1167.5,518.2 1168.5,521.1 1169.5,514.1 1170.5,514.7 1171.5,514.8 1172.5,517.8 1173.5,519.5 1174.5,519.1 1175.5,516.1 1176.5,514.7 1177.5,520.8 1178.5,518.4 1179.5,519.3 1180.5,517.2 1181.5,515.5 1182.5,515.1 1183.5,516.1 1184.5,513.4 1185.5,512.1 1186.5,519.2 1187.5,511.0 1188.5,516.1 1189.5,512.1 1190.5,513.0 1191.5,510.2 1192.5,518.0 1193.5,511.9 1194.5,515.6 1195.5,518.3 1196.5,509.7 1197.5,510.0 1198.5,509.9 1199.5,513.8 1200.5,513.5 1201.5,512.9 1202.5,518.0 1203.5,514.6 1204.5,519.0 1205.5,517.7 1206.5,515.9 1207.5,516.3 1208.5,516.6 1209.5,513.9 1210.5,511.9 1211.5,515.7 1212.5,513.5 1213.5,515.4 1214.5,516.8 1215.5,518.5 1216.5,516.3 1217.5,514.0 1218.5,520.0 1219.5,519.3 1220.5,518.8 1221.5,515.3 1222.5,513.4 1223.5,516.1 1224.5,518.5 1225.5,511.0 1226.5,514.4 1227.5,515.0 1228.5,517.1 1229.5,517.9 1230.5,512.7 1231.5,517.1 1232.5,515.9 1233.5,511.7 1234.5,518.5 1235.5,514.3 1236.5,514.8 1237.5,514.1 1238.5,511.1 1239.5,517.7 1240.5,514.7 1241.5,514.1 1242.5,513.6 1243.5,519.2 1244.5,520.3 1245.5,513.9 1246.5,513.6 1247.5,519.3 1248.5,511.8 1249.5,517.1 1250.5,511.8 1251.5,514.5 1252.5,510.5 1253.5,511.7 1254.5,513.8 1255.5,518.7 1256.5,519.1 1257.5,514.3 1258.5,516.0 1259.5,511.6 1260.5,514.3 1261.5,515.8 1262.5,518.6 1263.5,512.7 1264.5,513.8 1265.5,513.0 1266.5,514.1 1267.5,518.2 1268.5,515.6 1269.5,513.0 1270.5,516.8 1271.5,513.1 1272.5,513.2 1273.5,515.5 1274.5,517.1 1275.5,511.3 1276.5,518.3 1277.5,515.4 1278.5,514.6 1279.5,516.0 1280.5,514.7 1281.5,514.0 1282.5,514.7 1283.5,514.4 1284.5,514.1 1285.5,509.5 1286.5,511.9 1287.5,517.6 1288.5,519.6 1289.5,516.0 1290.5,513.6 1291.5,515.6 1292.5,515.7 1293.5,516.9 1294.5,517.4 1295.5,513.8 1296.5,516.3 1297.5,516.8 1298.5,516.6 1299.5,515.1 1300.5,517.5 1301.5,512.5 1302.5,514.4 1303.5,513.4 1304.5,516.4 1305.5,516.2 1306.5,514.1 1307.5,516.6 1308.5,515.9 1309.5,513.9 1310.5,517.3 1311.5,515.3 1312.5,517.0 1313.5,514.2 1314.5,514.7 1315.5,514.0 1316.5,512.8 1317.5,518.1 1318.5,516.4 1319.5,517.8 1320.5,514.6 1321.5,514.6 1322.5,510.2 1323.5,513.3 1324.5,512.0 1325.5,499.0 1326.5,436.0 1327.5,314.0 1328.5,250.0 1329.5,352.0 1330.5,479.0 1331.5,510.0 1333.5,514.0 1334.5,516.0 1335.5,517.0 1336.5,518.4 1337.5,514.9 1338.5,516.1 1339.5,518.4 1340.5,520.0 1341.5,518.5 1342.5,515.2 1343.5,513.7 1344.5,515.2 1345.5,514.7 1346.5,517.7 1347.5,516.9 1348.5,513.1 1349.5,515.0 1350.5,515.1 1351.5,514.5 1352.5,516.2 1353.5,515.9 1354.5,513.5 1355.5,513.1 1356.5,514.6 1357.5,516.8 1358.5,515.6 1359.5,513.9 1360.5,511.7 1361.5,515.5 1362.5,516.3 1363.5,515.0 1364.5,512.9 1365.5,515.8 1366.5,517.0 1367.5,518.9 1368.5,518.1 1369.5,516.5 1370.5,515.6 1371.5,516.3 1372.5,515.3 1373.5,513.4 1374.5,516.8 1375.5,515.5 1376.5,516.1 1377.5,515.9 1378.5,515.3 1379.5,515.5 1380.5,517.3 1381.5,517.8 1382.5,514.6 1383.5,515.3 1384.5,516.1 1385.5,512.7 1386.5,514.9 1387.5,517.2 1388.5,517.9 1389.5,515.2 1390.5,515.1 1391.5,516.2 1392.5,513.9 1393.5,512.1 1394.5,515.4 1395.5,517.0 1396.5,515.1 1397.5,512.5 1398.5,512.0 1399.5,513.9 1400.5,515.2 1401.5,515.7 1402.5,513.8 1403.5,516.1 1404.5,512.8 1405.5,513.2 1406.5,515.3 1407.5,517.5 1408.5,515.1 1409.5,512.4 1410.5,512.5 1411.5,514.3 1412.5,512.5 1413.5,515.9 1414.5,518.9 1415.5,518.4 1416.5,516.8 1417.5,515.8 1418.5,516.5 1419.5,516.1 1420.5,515.4 1421.5,515.6 1422.5,518.2 1423.5,515.7 1424.5,512.4 1425.5,514.5 1426.5,516.9 1427.5,518.3 1428.5,515.1 1429.5,512.0 1430.5,512.7 1431.5,516.6 1432.5,517.2 1433.5,513.6 1434.5,513.7 1435.5,515.9 1436.5,514.8 1437.5,513.6 1438.5,515.2 1439.5,516.0 1440.5,513.0 1441.5,510.3 1442.5,512.8 1443.5,514.4 1444.5,515.1 1445.5,516.1 1446.5,514.3 1447.5,516.3 1448.5,514.1 1449.5,512.4 1450.5,513.5 1451.5,511.8 1452.5,511.1 1453.5,512.9 1454.5,513.2 1455.5,513.5 1456.5,516.3 1457.5,515.5 1458.5,515.1 1459.5,515.2 1460.5,515.0 1461.5,513.9 1462.5,514.1 1463.5,514.9 1464.5,515.3 1465.5,516.4 1466.5,515.8 1467.5,513.5 1468.5,514.7 1469.5,515.5 1470.5,514.9 1471.5,514.3 1472.5,516.4 1473.5,517.2 1474.5,515.9 1475.5,515.8 1476.5,516.5 1477.5,514.5 1478.5,512.8 1479.5,512.5 1480.5,512.9 1481.5,512.9 1482.5,513.0 1483.5,512.8 1484.5,512.3 1485.5,514.5 1486.5,518.7 1487.5,518.7 1488.5,515.9 1489.5,515.2 1490.5,516.3 1491.5,514.2 1492.5,512.5 1493.5,510.8 1494.5,512.6 1495.5,512.0 1496.5,511.8 1497.5,512.9 1498.5,515.0 1499.5,517.0 1500.5,515.4 1501.5,512.5 1502.5,512.9 1503.5,514.6 1504.5,515.9 1505.5,516.5 1506.5,514.5 1507.5,514.5 1508.5,514.9 1509.5,515.0 1510.5,514.7 1511.5,515.2 1512.5,515.2 1513.5,514.4 1514.5,513.8 1515.5,511.6 1516.5,512.2 1517.5,512.8 1518.5,514.7 1519.5,515.3 1520.5,516.3 1521.5,519.5 1522.5,517.7 1523.5,515.7 1524.5,514.8 1525.5,512.1 1526.5,511.7 1527.5,514.5 1528.5,515.0 1529.5,514.2 1530.5,515.5 1531.5,517.4 1532.5,515.9 1533.5,513.1 1534.5,513.8 1535.5,512.5 1536.5,514.7 1537.5,517.6 1538.5,515.2 1539.5,512.5 1540.5,513.4 1541.5,515.1 1542.5,514.6 1543.5,514.8 1544.5,516.5 1545.5,517.0 1546.5,517.5 1547.5,519.4 1548.5,518.1 1549.5,515.5 1550.5,513.9 1551.5,515.3 1552.5,514.0 1553.5,514.1 1554.5,515.7 1555.5,515.5 1556.5,514.4 1557.5,513.2 1558.5,512.3 1559.5,516.0 1560.5,516.1 1561.5,514.3 1562.5,515.3 1563.5,514.4 1564.5,512.2 1565.5,513.9 1566.5,515.6 1567.5,515.6 1568.5,516.6 1569.5,516.1 1570.5,515.9 1571.5,516.8 1572.5,515.4 1573.5,515.3 1574.5,515.7 1575.5,514.2 1576.5,513.9 1577.5,515.0 1578.5,514.3 1579.5,513.4 1580.5,513.4 1581.5,509.4 1582.5,510.0 1583.5,515.7 1584.5,515.2 1585.5,511.6 1586.5,510.4 1587.5,512.4 1588.5,514.4 1589.5,511.7 1590.5,510.5 1591.5,516.4 1592.5,517.1 1593.5,516.5 1594.5,516.3 1595.5,517.7 1596.5,518.4 1597.5,515.8 1598.5,512.0 1599.5,511.0 1600.5,513.4 1601.5,513.4 1602.5,513.2 1603.5,512.4 1604.5,511.2 1605.5,512.7 1606.5,510.3 1607.5,509.7 1608.5,512.2 1609.5,509.9 1610.5,508.5 1611.5,510.6 1612.5,512.8 1613.5,514.7 1614.5,513.9 1615.5,510.2 1616.5,507.2 1617.5,508.8 1618.5,513.4 1619.5,513.6 1620.5,513.3 1621.5,513.4 1622.5,515.0 1623.5,515.8 1624.5,511.9 1625.5,513.3 1626.5,516.2 1627.5,512.0 1628.5,511.6 1629.5,514.5 1630.5,515.3 1631.5,515.5 1632.5,512.9 1633.5,510.7 1634.5,511.3 1635.5,511.0 1636.5,511.5 1637.5,512.1 1638.5,512.9 1639.5,513.1 1640.5,512.4 1641.5,510.9 1642.5,510.8 1643.5,510.7 1644.5,508.2 1645.5,508.4 1646.5,509.0 1647.5,509.4 1648.5,509.4 1649.5,511.0 1650.5,512.9 1651.5,512.4 1652.5,512.3 1653.5,511.3 1654.5,510.2 1655.5,510.3 1656.5,509.8 1657.5,507.3 1658.5,505.6 1659.5,507.9 1660.5,507.8 1661.5,506.8 1662.5,509.0 1663.5,510.8 1664.5,510.4 1665.5,510.9 1666.5,508.5 1667.5,507.5 1668.5,507.3 1669.5,506.4 1670.5,506.0 1671.5,507.1 1672.5,508.6 1673.5,507.0 1674.5,505.3 1675.5,505.4 1676.5,507.7 1677.5,507.3 1678.5,504.9 1679.5,505.3 1680.5,505.2 1681.5,506.4 1682.5,507.4 1683.5,508.1 1684.5,506.2 1685.5,507.5 1686.5,508.4 1687.5,504.9 1688.5,504.2 1689.5,503.9 1690.5,504.6 1691.5,504.7 1692.5,504.8 1693.5,505.8 1694.5,507.1 1695.5,505.0 1696.5,503.3 1697.5,507.1 1698.5,507.0 1699.5,506.0 1700.5,504.3 1701.5,504.7 1702.5,505.5 1703.5,505.1 1704.5,503.7 1705.5,504.1 1706.5,504.9 1707.5,504.1 1708.5,502.7 1709.5,503.1 1710.5,503.2 1711.5,503.1 1712.5,502.2 1713.5,501.8 1714.5,504.6 1715.5,505.6 1716.5,503.9 1717.5,502.4 1718.5,502.1 1719.5,501.0 1720.5,501.0 1721.5,503.6 1722.5,504.3 1723.5,502.3 1724.5,502.9 1725.5,503.8 1726.5,502.9 1727.5,499.5 1728.5,497.6 1729.5,499.2 1730.5,500.1 1731.5,497.8 1732.5,495.4 1733.5,497.3 1734.5,499.8 1735.5,498.9 1736.5,494.8" fill="none" stroke="#ff0000" stroke-width="1"/><polyline points="75.0,548.5 80.4,548.5 94.2,484.6 108.5,517.0 122.0,490.0 133.5,480.4 143.5,485.2 155.4,485.0 176.2,480.4 185.6,470.0 195.0,473.0 211.7,464.8 222.0,455.4 236.7,449.0 250.4,432.3 250.9,431.7 251.4,431.1 251.9,430.4 252.4,429.8 252.9,429.2 253.4,428.6 253.9,427.9 254.4,427.3 254.9,426.7 255.4,426.1 255.9,425.5 256.4,424.9 256.9,424.3 257.4,423.7 257.9,423.1 258.4,422.5 258.9,421.9 259.4,421.2 259.9,420.6 260.4,420.0 260.9,419.4 261.4,418.8 261.9,418.2 262.4,417.5 262.9,416.9 263.4,416.3 263.9,415.6 264.4,415.0 264.9,414.3 265.4,413.7 265.9,413.0 266.4,412.3 266.9,411.7 267.4,411.0 267.9,410.3 268.4,409.6 268.9,408.9 269.4,408.2 269.9,407.4 270.4,406.7 270.9,406.0 271.4,405.2 271.9,404.5 272.4,403.7 272.9,403.0 273.4,402.2 273.9,401.5 274.4,400.7 274.9,400.0 275.4,399.2 275.9,398.4 276.4,397.6 276.9,396.9 277.4,396.0 277.9,395.2 278.4,394.4 278.9,393.5 279.4,392.7 279.9,391.8 280.4,390.9 280.9,389.9 281.4,389.0 281.9,388.0 282.4,387.0 282.9,386.0 283.4,385.0 283.9,383.9 284.4,382.8 284.9,381.6 285.4,380.5 285.9,379.3 286.4,378.0 286.9,376.8 287.4,375.5 287.9,374.1 288.4,372.7 288.9,371.2 289.4,369.7 289.9,368.1 290.4,366.3 290.9,364.5 291.4,362.5 291.9,360.5 292.4,358.3 292.9,356.0 293.4,353.5 293.9,350.4 294.4,346.8 294.9,342.8 295.4,338.4 295.9,334.0 296.4,329.5 296.9,325.0 297.4,320.3 297.9,315.4 298.4,310.2 298.9,304.9 299.4,299.3 299.9,293.6 300.4,287.5 300.9,281.0 301.4,273.7 301.9,265.2 302.4,256.1 302.9,247.4 303.4,238.9 303.9,230.4 309.5,207.5 314.7,224.9 315.2,234.8 315.7,244.8 316.2,254.9 316.7,265.2 317.2,275.0 317.7,283.7 318.2,292.2 318.7,299.3 319.2,304.5 319.7,308.7 320.2,312.3 320.7,315.4 321.2,318.3 321.7,321.0 322.2,323.8 322.7,326.7 323.2,329.9 323.7,333.4 324.2,336.9 324.7,340.5 325.2,344.0 325.7,347.4 326.2,350.6 326.7,353.5 327.2,356.1 327.7,358.5 328.2,360.8 328.7,363.1 329.2,365.2 329.7,367.3 330.2,369.3 330.7,371.2 331.2,373.1 331.7,374.9 332.2,376.7 332.7,378.4 333.2,380.1 333.7,381.8 334.2,383.4 334.7,385.0 335.2,386.6 335.7,388.1 336.2,389.6 336.7,391.0 337.2,392.4 337.7,393.8 338.2,395.2 338.7,396.6 339.2,397.9 339.7,399.3 340.2,400.6 340.7,401.9 341.2,403.2 341.7,404.5 342.2,405.9 342.7,407.2 343.2,408.6 343.7,409.9 344.2,411.3 344.7,412.6 345.2,414.0 345.7,415.4 346.2,416.7 346.7,418.1 347.2,419.4 347.7,420.8 348.2,422.0 348.7,423.3 349.2,424.6 349.7,425.8 350.2,426.9 350.7,428.1 351.2,429.2 351.7,430.2 352.2,431.2 352.7,432.2 353.2,433.0 353.7,433.9 354.2,434.8 354.7,435.6 355.2,436.4 355.7,437.2 356.2,437.9 356.7,438.7 357.2,439.4 357.7,440.1 358.2,440.8 358.7,441.5 359.2,442.1 359.7,442.8 360.2,443.4 360.7,444.1 361.2,444.7 361.7,445.3 362.2,445.9 362.7,446.6 363.2,447.2 363.7,447.8 364.2,448.4 364.7,449.0 365.2,449.6 365.7,450.2 366.2,450.8 366.7,451.4 367.2,452.0 367.7,452.7 368.2,453.3 368.7,453.9 369.2,454.6 369.7,455.3 370.0,456.9 376.0,461.9 379.5,471.0 383.0,468.8 384.0,469.4 387.0,485.0 390.5,476.0 395.0,485.6 397.0,484.4 401.0,492.5 404.5,486.0 408.5,510.0 411.5,487.5 414.5,510.0 417.5,495.0 421.5,507.5 425.0,502.5 428.0,513.0 431.0,508.8 433.5,528.8 436.5,500.6 438.5,533.0 441.0,519.4 444.5,515.6 447.5,509.4 450.0,509.4 452.0,501.0 453.5,479.4 456.0,455.0 457.5,446.2 459.0,455.0 461.0,480.0 462.5,533.8 466.0,526.0 470.0,528.8 472.5,536.0 474.5,520.0 476.0,508.0 478.0,511.0 479.5,561.0 482.0,525.0 483.0,517.5 484.5,561.0 487.5,532.5 489.0,560.0 491.0,531.0 493.5,561.0 495.5,523.8 497.0,538.8 500.0,526.0 501.5,556.0 503.5,519.2 505.5,514.0 507.5,562.0 509.5,540.6 511.5,534.1 513.5,538.8 515.5,533.1 517.5,530.9 519.5,527.9 521.5,526.1 523.5,544.3 525.5,543.5 527.5,514.0 529.5,515.6 531.5,536.8 533.5,516.8 535.5,542.1 537.5,536.1 539.5,523.2 541.5,516.9 543.5,526.8 545.5,533.5 547.5,545.8 549.5,512.6 551.5,530.5 553.5,515.9 555.5,531.1 557.5,562.0 559.5,532.6 561.5,562.0 563.5,544.4 565.5,506.9 567.5,521.3 569.5,546.3 571.5,524.3 573.5,518.6 575.5,507.9 577.5,554.8 579.5,527.3 581.5,511.7 583.5,529.2 585.5,562.0 587.5,508.6 589.5,553.9 591.5,542.4 593.5,516.7 595.5,559.4 597.5,527.0 599.5,525.1 601.5,516.6 603.5,527.5 605.5,545.1 607.5,505.7 609.5,538.3 611.5,545.6 613.5,556.1 615.5,536.5 616.5,514.2 617.5,517.5 618.5,527.0 619.5,535.6 620.5,530.9 621.5,521.5 622.5,555.7 623.5,517.8 624.5,516.9 625.5,558.1 626.5,526.0 627.5,520.5 628.5,541.9 629.5,506.2 630.5,509.9 631.5,530.5 632.5,527.5 633.5,552.1 634.5,511.8 635.5,519.7 636.5,514.5 637.5,519.4 638.5,541.1 639.5,528.4 640.5,523.0 641.5,516.2 642.5,517.4 643.5,531.1 644.5,540.0 645.5,521.1 646.5,522.7 647.5,509.5 648.5,545.9 649.5,510.8 650.5,524.5 651.5,513.7 652.5,520.1 653.5,533.7 654.5,512.6 655.5,528.2 656.5,516.6 657.5,506.2 658.5,531.6 659.5,519.4 660.5,522.6 661.5,514.9 662.5,522.1 663.5,525.4 664.5,526.3 665.5,523.8 666.5,522.6 667.5,514.3 668.5,530.5 669.5,520.8 670.5,549.1 671.5,521.7 672.5,540.5 673.5,522.8 674.5,511.9 675.5,560.4 676.5,539.8 677.5,521.2 678.5,521.1 679.5,531.5 680.5,527.3 681.5,530.1 682.5,536.1 683.5,524.5 684.5,546.0 685.5,539.3 686.5,513.1 687.5,521.2 688.5,534.2 689.5,534.2 690.5,537.7 691.5,523.9 692.5,524.3 693.5,528.9 694.5,540.7 695.5,536.7 696.5,538.3 697.5,536.5 698.5,520.0 699.5,504.8 700.5,527.7 701.5,519.7 702.5,524.7 703.5,514.8 704.5,525.2 705.5,522.8 706.5,559.1 707.5,510.7 708.5,557.3 709.5,531.1 710.5,554.2 711.5,517.0 712.5,529.5 713.5,547.1 714.5,561.9 715.5,517.1 716.5,523.1 717.5,516.3 718.5,519.4 719.5,513.3 720.5,534.1 721.5,520.7 722.5,511.7 723.5,532.1 724.5,529.2 725.5,527.0 726.5,515.1 727.5,532.8 728.5,550.7 729.5,505.0 730.5,537.2 731.5,530.3 732.5,520.1 733.5,515.1 734.5,520.0 735.5,516.5 736.5,536.5 737.5,525.3 738.5,520.2 739.5,526.5 740.5,525.2 741.5,543.9 742.5,528.7 743.5,513.6 744.5,515.5 745.5,536.7 746.5,520.2 747.5,519.8 748.5,552.3 749.5,524.4 750.5,506.4 751.5,528.8 752.5,521.1 753.5,536.0 754.5,537.0 755.5,517.4 756.5,546.1 757.5,520.9 758.5,527.1 759.5,522.8 760.5,507.5 761.5,515.1 762.5,521.6 763.5,541.6 764.5,521.1 765.5,544.1 766.5,527.8 767.5,531.7 768.5,528.9 769.5,527.8 770.5,517.4 771.5,528.2 772.5,532.8 773.5,532.5 774.5,526.9 775.5,542.9 776.5,514.4 777.5,553.5 778.5,531.6 779.5,532.2 780.5,517.9 781.5,532.5 782.5,522.5 783.5,531.4 784.5,516.6 785.5,525.3 786.5,512.7 787.5,527.6 788.5,534.5 789.5,518.5 790.5,528.9 791.5,536.6 792.5,532.6 793.5,538.0 794.5,533.7 795.5,519.7 796.5,542.6 797.5,539.9 798.5,523.2 799.5,515.4 800.5,526.4 801.5,511.3 802.5,526.3 803.5,520.2 804.5,538.8 805.5,525.5 806.5,541.6 807.5,519.1 808.5,528.5 809.5,538.7 810.5,525.7 811.5,514.2 812.5,527.3 813.5,528.8 814.5,521.0 815.5,529.2 816.5,525.9 817.5,525.1 818.5,529.9 819.5,522.6 820.5,521.3 821.5,519.0 822.5,527.5 823.5,515.0 824.5,531.5 825.5,528.4 826.5,520.3 827.5,544.4 828.5,528.0 829.5,525.9 830.5,545.6 831.5,541.6 832.5,522.6 833.5,524.4 834.5,522.2 835.5,529.4 836.5,521.2 837.5,530.5 838.5,518.6 839.5,528.5 840.5,518.9 841.5,532.7 842.5,519.9 843.5,519.0 844.5,539.5 845.5,525.5 846.5,523.1 847.5,525.5 848.5,515.8 849.5,517.5 850.5,523.8 851.5,521.8 852.5,533.0 853.5,524.0 854.5,528.5 855.5,514.0 856.5,517.8 857.5,514.7 858.5,525.8 859.5,532.5 860.5,529.6 861.5,533.6 862.5,530.8 863.5,534.1 864.5,516.3 865.5,514.6 866.5,530.3 867.5,519.8 868.5,538.2 869.5,541.2 870.5,527.0 871.5,544.0 872.5,531.6 873.5,515.9 874.5,525.8 875.5,521.1 876.5,516.3 877.5,521.7 878.5,531.8 879.5,518.3 880.5,516.0 881.5,518.7 882.5,535.1 883.5,532.7 884.5,532.6 885.5,540.8 886.5,521.7 887.5,535.4 888.5,527.5 889.5,532.3 890.5,525.9 891.5,524.1 892.5,517.0 893.5,532.8 894.5,534.7 895.5,543.4 896.5,530.6 897.5,520.7 898.5,522.5 899.5,516.3 900.5,541.6 901.5,537.0 902.5,522.4 903.5,522.4 904.5,535.5 905.5,528.0 906.5,529.9 907.5,540.1 908.5,522.4 909.5,516.6 910.5,528.9 911.5,512.5 912.5,530.7 913.5,517.0 914.5,535.9 915.5,523.8 916.5,519.7 917.5,522.6 918.5,523.2 919.5,522.4 920.5,519.1 921.5,512.4 922.5,518.9 923.5,515.5 924.5,526.5 925.5,530.5 926.5,524.3 927.5,535.4 928.5,531.3 929.5,533.5 930.5,530.3 931.5,519.3 932.5,518.1 933.5,514.5 934.5,545.9 935.5,539.5 936.5,529.8 937.5,523.0 938.5,546.8 939.5,517.9 940.5,517.8 941.5,520.5 942.5,526.2 943.5,537.6 944.5,528.7 945.5,526.6 946.5,532.6 947.5,529.1 948.5,524.6 949.5,532.6 950.5,523.8 951.5,517.0 952.5,512.9 953.5,523.1 954.5,522.9 955.5,540.8 956.5,522.6 957.5,524.3 958.5,525.8 959.5,525.4 960.5,513.4 961.5,530.1 962.5,521.4 963.5,511.2 964.5,518.9 965.5,535.6 966.5,529.0 967.5,528.7 968.5,515.4 969.5,519.2 970.5,517.6 971.5,522.4 972.5,525.7 973.5,529.5 974.5,521.2 975.5,521.8 976.5,520.0 977.5,542.0 978.5,520.9 979.5,532.0 980.5,527.1 981.5,516.5 982.5,520.9 983.5,528.4 984.5,514.0 985.5,514.5 986.5,526.2 987.5,522.9 988.5,523.9 989.5,524.1 990.5,523.9 991.5,522.0 992.5,537.6 993.5,522.5 994.5,521.0 995.5,523.2 996.5,532.6 997.5,517.4 998.5,515.9 999.5,535.1 1000.5,541.6 1001.5,529.3 1002.5,538.4 1003.5,527.5 1004.5,526.6 1005.5,522.3 1006.5,521.6 1007.5,539.2 1008.5,533.1 1009.5,515.1 1010.5,517.6 1011.5,532.7 1012.5,528.2 1013.5,522.6 1014.5,527.9 1015.5,518.0 1016.5,526.0 1017.5,541.8 1018.5,536.4 1019.5,522.0 1020.5,521.2 1021.5,535.8 1022.5,533.7 1023.5,536.4 1024.5,516.8 1025.5,525.3 1026.5,524.7 1027.5,527.0 1028.5,517.3 1029.5,516.4 1030.5,523.7 1031.5,526.4 1032.5,538.6 1033.5,520.4 1034.5,515.7 1035.5,524.8 1036.5,518.5 1037.5,527.0 1038.5,522.7 1039.5,521.9 1040.5,535.5 1041.5,523.1 1042.5,522.8 1043.5,518.3 1044.5,531.6 1045.5,533.1 1046.5,521.9 1047.5,522.8 1048.5,517.1 1049.5,520.9 1050.5,523.8 1051.5,533.4 1052.5,522.3 1053.5,525.5 1054.5,531.9 1055.5,548.7 1056.5,526.4 1057.5,517.6 1058.5,529.2 1059.5,523.9 1060.5,526.3 1061.5,537.4 1062.5,527.5 1063.5,518.2 1064.5,513.9 1065.5,519.0 1066.5,525.6 1067.5,519.9 1068.5,520.1 1069.5,521.1 1070.5,521.9 1071.5,537.4 1072.5,518.8 1073.5,526.5 1074.5,516.1 1075.5,523.4 1076.5,546.9 1077.5,523.8 1078.5,534.6 1079.5,518.9 1080.5,527.5 1081.5,519.6 1082.5,534.0 1083.5,517.9 1084.5,527.8 1085.5,519.5 1086.5,527.8 1087.5,523.8 1088.5,528.1 1089.5,524.0 1090.5,519.7 1091.5,523.7 1092.5,521.2 1093.5,525.9 1094.5,524.2 1095.5,528.7 1096.5,523.0 1097.5,527.6 1098.5,532.4 1099.5,520.9 1100.5,518.2 1101.5,523.1 1102.5,521.7 1103.5,526.6 1104.5,520.4 1105.5,534.7 1106.5,538.6 1107.5,518.2 1108.5,532.5 1109.5,517.0 1110.5,530.2 1111.5,523.1 1112.5,518.1 1113.5,514.8 1114.5,522.1 1115.5,526.4 1116.5,526.9 1117.5,524.2 1118.5,523.6 1119.5,523.7 1120.5,520.9 1121.5,524.4 1122.5,517.8 1123.5,523.5 1124.5,542.6 1125.5,523.8 1126.5,521.4 1127.5,528.7 1128.5,534.9 1129.5,522.0 1130.5,537.1 1131.5,536.7 1132.5,528.6 1133.5,526.5 1134.5,516.8 1135.5,522.2 1136.5,528.8 1137.5,530.6 1138.5,517.7 1139.5,525.0 1140.5,522.1 1141.5,519.1 1142.5,524.2 1143.5,522.3 1144.5,527.2 1145.5,524.5 1146.5,526.6 1147.5,530.3 1148.5,530.1 1149.5,521.2 1150.5,530.9 1151.5,532.5 1152.5,523.5 1153.5,529.2 1154.5,527.5 1155.5,522.6 1156.5,519.3 1157.5,523.3 1158.5,522.2 1159.5,541.2 1160.5,531.0 1161.5,518.5 1162.5,533.3 1163.5,524.3 1164.5,528.0 1165.5,521.6 1166.5,520.5 1167.5,522.7 1168.5,522.7 1169.5,520.3 1170.5,532.8 1171.5,523.8 1172.5,526.2 1173.5,531.0 1174.5,527.7 1175.5,531.5 1176.5,524.6 1177.5,529.6 1178.5,526.1 1179.5,521.2 1180.5,528.0 1181.5,530.6 1182.5,516.7 1183.5,517.2 1184.5,532.7 1185.5,536.2 1186.5,519.1 1187.5,536.7 1188.5,520.2 1189.5,531.8 1190.5,530.8 1191.5,527.9 1192.5,518.7 1193.5,523.6 1194.5,522.1 1195.5,521.6 1196.5,516.0 1197.5,522.8 1198.5,525.9 1199.5,527.3 1200.5,516.9 1201.5,534.0 1202.5,527.4 1203.5,526.9 1204.5,535.2 1205.5,528.2 1206.5,517.8 1207.5,521.5 1208.5,527.0 1209.5,525.5 1210.5,532.8 1211.5,540.0 1212.5,533.9 1213.5,529.9 1214.5,529.0 1215.5,533.7 1216.5,527.9 1217.5,527.1 1218.5,530.4 1219.5,529.9 1220.5,521.3 1221.5,523.3 1222.5,524.5 1223.5,524.5 1224.5,531.1 1225.5,529.6 1226.5,539.2 1227.5,529.2 1228.5,524.2 1229.5,525.0 1230.5,531.0 1231.5,527.0 1232.5,524.0 1233.5,520.2 1234.5,537.9 1235.5,537.8 1236.5,531.7 1237.5,543.1 1238.5,523.2 1239.5,523.6 1240.5,522.0 1241.5,524.4 1242.5,525.3 1243.5,543.4 1244.5,521.1 1245.5,518.6 1246.5,528.0 1247.5,523.3 1248.5,529.0 1249.5,522.2 1250.5,521.2 1251.5,523.6 1252.5,528.9 1253.5,529.5 1254.5,519.1 1255.5,524.2 1256.5,525.6 1257.5,535.5 1258.5,529.1 1259.5,521.6 1260.5,526.0 1261.5,522.8 1262.5,522.5 1263.5,528.2 1264.5,522.6 1265.5,519.5 1266.5,522.7 1267.5,517.7 1268.5,523.5 1269.5,527.3 1270.5,524.9 1271.5,529.7 1272.5,528.4 1273.5,522.2 1274.5,526.4 1275.5,524.4 1276.5,521.7 1277.5,525.9 1278.5,523.7 1279.5,519.5 1280.5,520.6 1281.5,528.0 1282.5,524.3 1283.5,527.8 1284.5,528.7 1285.5,524.7 1286.5,527.3 1287.5,525.3 1288.5,518.8 1289.5,523.7 1290.5,525.7 1291.5,525.9 1292.5,534.6 1293.5,529.3 1294.5,529.2 1295.5,523.6 1296.5,531.8 1297.5,531.1 1298.5,525.8 1299.5,520.7 1300.5,524.2 1301.5,520.8 1302.5,523.1 1303.5,522.8 1304.5,520.2 1305.5,521.7 1306.5,528.6 1307.5,521.1 1308.5,517.0 1309.5,525.4 1310.5,529.7 1311.5,522.4 1312.5,532.6 1313.5,527.1 1314.5,523.7 1315.5,528.3 1316.5,523.3 1317.5,523.3 1318.5,517.6 1319.5,520.4 1320.5,528.4 1321.5,530.7 1322.5,524.6 1323.5,526.3 1324.5,520.0 1325.5,506.0 1326.5,437.0 1327.5,312.0 1328.5,240.0 1329.5,349.0 1330.5,481.0 1331.5,518.0 1333.5,522.0 1334.5,522.2 1335.5,528.8 1336.5,529.8 1337.5,529.3 1338.5,520.2 1339.5,519.9 1340.5,524.8 1341.5,525.9 1342.5,521.5 1343.5,525.7 1344.5,522.4 1345.5,516.8 1346.5,522.3 1347.5,529.4 1348.5,523.3 1349.5,523.5 1350.5,525.1 1351.5,522.0 1352.5,520.8 1353.5,522.8 1354.5,527.4 1355.5,526.3 1356.5,522.5 1357.5,523.2 1358.5,523.9 1359.5,526.1 1360.5,527.4 1361.5,518.6 1362.5,521.7 1363.5,526.6 1364.5,525.1 1365.5,523.7 1366.5,522.1 1367.5,522.9 1368.5,536.6 1369.5,530.0 1370.5,520.6 1371.5,524.8 1372.5,528.2 1373.5,525.1 1374.5,525.8 1375.5,523.0 1376.5,525.6 1377.5,526.7 1378.5,529.9 1379.5,525.6 1380.5,526.5 1381.5,523.9 1382.5,518.9 1383.5,523.1 1384.5,524.0 1385.5,524.8 1386.5,523.9 1387.5,525.1 1388.5,521.6 1389.5,520.8 1390.5,525.0 1391.5,526.1 1392.5,531.8 1393.5,526.1 1394.5,519.9 1395.5,524.8 1396.5,522.3 1397.5,523.8 1398.5,526.2 1399.5,533.9 1400.5,524.6 1401.5,521.2 1402.5,523.0 1403.5,528.2 1404.5,526.1 1405.5,528.3 1406.5,526.3 1407.5,524.0 1408.5,525.6 1409.5,531.4 1410.5,528.9 1411.5,532.9 1412.5,533.6 1413.5,527.6 1414.5,527.4 1415.5,527.1 1416.5,528.2 1417.5,524.9 1418.5,527.9 1419.5,531.5 1420.5,528.4 1421.5,527.6 1422.5,523.8 1423.5,520.7 1424.5,521.1 1425.5,520.5 1426.5,522.4 1427.5,524.8 1428.5,523.3 1429.5,523.8 1430.5,524.0 1431.5,522.4 1432.5,526.4 1433.5,526.2 1434.5,529.3 1435.5,527.9 1436.5,524.4 1437.5,522.5 1438.5,530.9 1439.5,538.1 1440.5,529.7 1441.5,524.0 1442.5,525.9 1443.5,528.8 1444.5,533.1 1445.5,525.9 1446.5,521.1 1447.5,520.5 1448.5,518.7 1449.5,518.6 1450.5,522.8 1451.5,527.4 1452.5,525.9 1453.5,523.3 1454.5,521.7 1455.5,523.1 1456.5,529.9 1457.5,526.7 1458.5,528.8 1459.5,527.9 1460.5,524.5 1461.5,523.2 1462.5,522.9 1463.5,526.7 1464.5,529.1 1465.5,525.5 1466.5,524.6 1467.5,528.0 1468.5,524.4 1469.5,521.4 1470.5,525.2 1471.5,521.4 1472.5,521.0 1473.5,523.8 1474.5,526.3 1475.5,521.6 1476.5,518.5 1477.5,520.1 1478.5,518.4 1479.5,518.4 1480.5,523.2 1481.5,523.8 1482.5,525.8 1483.5,520.5 1484.5,518.2 1485.5,521.6 1486.5,527.9 1487.5,531.7 1488.5,527.0 1489.5,520.3 1490.5,521.8 1491.5,524.3 1492.5,523.7 1493.5,522.7 1494.5,521.8 1495.5,521.8 1496.5,523.2 1497.5,521.9 1498.5,521.3 1499.5,519.9 1500.5,519.0 1501.5,521.6 1502.5,520.3 1503.5,519.8 1504.5,522.5 1505.5,525.4 1506.5,524.4 1507.5,521.5 1508.5,521.4 1509.5,521.0 1510.5,522.0 1511.5,523.6 1512.5,525.1 1513.5,524.2 1514.5,525.4 1515.5,530.9 1516.5,531.4 1517.5,525.8 1518.5,522.2 1519.5,520.5 1520.5,521.0 1521.5,522.1 1522.5,524.3 1523.5,528.0 1524.5,525.8 1525.5,526.2 1526.5,527.6 1527.5,521.8 1528.5,519.1 1529.5,519.0 1530.5,521.2 1531.5,522.2 1532.5,525.7 1533.5,527.6 1534.5,528.4 1535.5,524.4 1536.5,528.7 1537.5,527.8 1538.5,531.1 1539.5,529.3 1540.5,522.8 1541.5,521.8 1542.5,523.4 1543.5,520.7 1544.5,522.4 1545.5,528.6 1546.5,526.6 1547.5,521.4 1548.5,519.0 1549.5,522.7 1550.5,524.9 1551.5,525.9 1552.5,526.8 1553.5,523.9 1554.5,521.4 1555.5,523.3 1556.5,520.0 1557.5,519.9 1558.5,522.0 1559.5,525.2 1560.5,526.3 1561.5,523.2 1562.5,520.3 1563.5,520.5 1564.5,522.9 1565.5,525.4 1566.5,522.3 1567.5,521.1 1568.5,529.0 1569.5,536.6 1570.5,525.8 1571.5,519.1 1572.5,520.1 1573.5,521.3 1574.5,523.6 1575.5,523.2 1576.5,521.4 1577.5,524.2 1578.5,534.2 1579.5,539.6 1580.5,526.7 1581.5,519.7 1582.5,520.1 1583.5,522.9 1584.5,522.0 1585.5,523.6 1586.5,522.4 1587.5,521.3 1588.5,521.0 1589.5,519.4 1590.5,523.2 1591.5,528.5 1592.5,527.8 1593.5,523.1 1594.5,524.1 1595.5,523.7 1596.5,524.5 1597.5,520.5 1598.5,521.8 1599.5,522.6 1600.5,520.7 1601.5,522.2 1602.5,521.5 1603.5,521.1 1604.5,523.0 1605.5,523.2 1606.5,521.0 1607.5,521.8 1608.5,524.8 1609.5,522.4 1610.5,520.4 1611.5,519.3 1612.5,519.1 1613.5,519.3 1614.5,519.1 1615.5,517.0 1616.5,515.1 1617.5,515.9 1618.5,519.0 1619.5,521.2 1620.5,518.3 1621.5,517.0 1622.5,521.0 1623.5,525.7 1624.5,527.4 1625.5,521.6 1626.5,519.8 1627.5,520.0 1628.5,523.5 1629.5,524.9 1630.5,522.8 1631.5,520.5 1632.5,523.1 1633.5,522.7 1634.5,520.0 1635.5,519.6 1636.5,520.9 1637.5,523.8 1638.5,519.4 1639.5,520.1 1640.5,523.1 1641.5,523.1 1642.5,524.1 1643.5,518.8 1644.5,519.6 1645.5,523.9 1646.5,524.1 1647.5,519.9 1648.5,518.0 1649.5,516.5 1650.5,518.2 1651.5,518.6 1652.5,522.3 1653.5,527.0 1654.5,523.0 1655.5,523.6 1656.5,526.9 1657.5,527.6 1658.5,526.8 1659.5,520.1 1660.5,518.2 1661.5,517.9 1662.5,517.1 1663.5,515.8 1664.5,512.5 1665.5,515.2 1666.5,519.0 1667.5,519.3 1668.5,516.3 1669.5,518.9 1670.5,525.4 1671.5,523.1 1672.5,517.4 1673.5,517.9 1674.5,522.6 1675.5,531.5 1676.5,522.5 1677.5,513.0 1678.5,511.1 1679.5,512.4 1680.5,514.5 1681.5,514.3 1682.5,511.6 1683.5,512.5 1684.5,512.4 1685.5,515.8 1686.5,518.3 1687.5,519.5 1688.5,513.0 1689.5,511.7 1690.5,516.9 1691.5,519.8 1692.5,515.3 1693.5,512.3 1694.5,512.3 1695.5,514.7 1696.5,514.7 1697.5,514.3 1698.5,513.4 1699.5,512.4 1700.5,511.6 1701.5,513.4 1702.5,513.7 1703.5,511.3 1704.5,509.3 1705.5,511.6 1706.5,511.2 1707.5,511.0 1708.5,513.5 1709.5,515.2 1710.5,511.0 1711.5,507.7 1712.5,510.5 1713.5,508.9 1714.5,507.9 1715.5,511.4 1716.5,512.5 1717.5,509.2 1718.5,506.8 1719.5,507.9 1720.5,509.9 1721.5,509.5 1722.5,510.3 1723.5,514.5 1724.5,515.4 1725.5,514.7 1726.5,513.0 1727.5,509.6 1728.5,510.0 1729.5,506.0 1730.5,506.8 1731.5,511.5 1732.5,507.9 1733.5,506.1 1734.5,505.8 1735.5,505.9 1736.5,505.4" fill="none" stroke="#0000ff" stroke-width="1"/><polyline points="75.0,886.2 94.0,888.3 106.5,885.2 120.0,884.6 140.0,885.6 146.0,886.5 163.7,881.0 180.4,880.0 184.6,881.7 199.2,874.8 222.0,863.7 240.0,853.0 250.4,841.3 250.9,840.7 251.4,840.1 251.9,839.4 252.4,838.8 252.9,838.2 253.4,837.6 253.9,836.9 254.4,836.3 254.9,835.7 255.4,835.1 255.9,834.5 256.4,833.9 256.9,833.3 257.4,832.7 257.9,832.1 258.4,831.5 258.9,830.9 259.4,830.2 259.9,829.6 260.4,829.0 260.9,828.4 261.4,827.8 261.9,827.2 262.4,826.5 262.9,825.9 263.4,825.3 263.9,824.6 264.4,824.0 264.9,823.3 265.4,822.7 265.9,822.0 266.4,821.3 266.9,820.7 267.4,820.0 267.9,819.3 268.4,818.6 268.9,817.9 269.4,817.2 269.9,816.4 270.4,815.7 270.9,815.0 271.4,814.2 271.9,813.5 272.4,812.7 272.9,812.0 273.4,811.2 273.9,810.5 274.4,809.7 274.9,809.0 275.4,808.2 275.9,807.4 276.4,806.6 276.9,805.9 277.4,805.0 277.9,804.2 278.4,803.4 278.9,802.5 279.4,801.7 279.9,800.8 280.4,799.9 280.9,798.9 281.4,798.0 281.9,797.0 282.4,796.0 282.9,795.0 283.4,794.0 283.9,792.9 284.4,791.8 284.9,790.6 285.4,789.5 285.9,788.3 286.4,787.0 286.9,785.8 287.4,784.5 287.9,783.1 288.4,781.7 288.9,780.2 289.4,778.7 289.9,777.1 290.4,775.3 290.9,773.5 291.4,771.5 291.9,769.5 292.4,767.3 292.9,765.0 293.4,762.5 293.9,759.4 294.4,755.8 294.9,751.8 295.4,747.4 295.9,743.0 296.4,738.5 296.9,734.0 297.4,729.3 297.9,724.4 298.4,719.2 298.9,713.9 299.4,708.3 299.9,702.6 300.4,696.5 300.9,690.0 301.4,682.7 301.9,674.2 302.4,665.1 302.9,656.4 303.4,647.9 303.9,639.4 309.5,616.5 314.7,633.9 315.2,643.8 315.7,653.8 316.2,663.9 316.7,674.2 317.2,684.0 317.7,692.7 318.2,701.2 318.7,708.3 319.2,713.5 319.7,717.7 320.2,721.3 320.7,724.4 321.2,727.3 321.7,730.0 322.2,732.8 322.7,735.7 323.2,738.9 323.7,742.4 324.2,745.9 324.7,749.5 325.2,753.0 325.7,756.4 326.2,759.6 326.7,762.5 327.2,765.1 327.7,767.5 328.2,769.8 328.7,772.1 329.2,774.2 329.7,776.3 330.2,778.3 330.7,780.2 331.2,782.1 331.7,783.9 332.2,785.7 332.7,787.4 333.2,789.1 333.7,790.8 334.2,792.4 334.7,794.0 335.2,795.6 335.7,797.1 336.2,798.6 336.7,800.0 337.2,801.4 337.7,802.8 338.2,804.2 338.7,805.6 339.2,806.9 339.7,808.3 340.2,809.6 340.7,810.9 341.2,812.2 341.7,813.5 342.2,814.9 342.7,816.2 343.2,817.6 343.7,818.9 344.2,820.3 344.7,821.6 345.2,823.0 345.7,824.4 346.2,825.7 346.7,827.1 347.2,828.4 347.7,829.8 348.2,831.0 348.7,832.3 349.2,833.6 349.7,834.8 350.2,835.9 350.7,837.1 351.2,838.2 351.7,839.2 352.2,840.2 352.7,841.2 353.2,842.0 353.7,842.9 354.2,843.8 354.7,844.6 355.2,845.4 355.7,846.2 356.2,846.9 356.7,847.7 357.2,848.4 357.7,849.1 358.2,849.8 358.7,850.5 359.2,851.1 359.7,851.8 360.2,852.4 360.7,853.1 361.2,853.7 361.7,854.3 362.2,854.9 362.7,855.6 363.2,856.2 363.7,856.8 364.2,857.4 364.7,858.0 365.2,858.6 365.7,859.2 366.2,859.8 366.7,860.4 367.2,861.0 367.7,861.7 368.2,862.3 368.7,862.9 369.2,863.6 369.7,864.3 370.0,862.0 376.5,869.0 380.0,875.2 384.0,879.0 390.0,882.8 395.0,883.4 397.0,888.4 404.0,890.2 410.0,892.8 414.0,897.0 418.0,895.9 421.0,896.5 425.0,900.2 430.0,899.6 435.0,907.8 437.5,905.9 443.0,907.1 447.0,910.9 450.0,909.6 452.5,910.9 454.0,895.2 456.0,862.8 457.5,852.8 459.0,862.8 461.0,889.0 462.0,915.2 465.0,910.9 470.0,909.6 474.0,910.9 477.0,907.8 480.0,911.5 483.0,929.0 485.0,916.5 488.0,917.8 491.0,908.4 495.0,911.5 499.0,914.6 500.0,915.2 501.5,923.3 503.5,921.9 505.5,906.8 507.5,922.9 509.5,928.6 511.5,918.3 513.5,919.2 515.5,916.1 517.5,922.3 519.5,911.4 521.5,916.6 523.5,905.1 525.5,916.8 527.5,918.7 529.5,911.9 531.5,915.1 533.5,924.8 535.5,915.6 537.5,924.2 539.5,913.2 541.5,923.8 543.5,918.3 545.5,925.0 547.5,918.5 549.5,912.4 551.5,913.8 553.5,924.3 555.5,928.3 557.5,916.5 559.5,924.6 561.5,925.1 563.5,916.7 565.5,927.8 567.5,916.2 569.5,914.6 571.5,920.7 573.5,926.0 575.5,922.1 577.5,912.4 579.5,919.9 581.5,913.9 583.5,920.7 585.5,920.3 587.5,920.0 589.5,920.3 591.5,919.4 593.5,916.4 595.5,914.5 597.5,922.0 599.5,926.5 601.5,925.0 603.5,926.5 605.5,932.6 607.5,921.4 609.5,925.6 611.5,911.4 613.5,924.5 615.5,929.2 616.5,919.3 617.5,921.5 618.5,916.8 619.5,920.7 620.5,911.3 621.5,925.3 622.5,920.3 623.5,924.0 624.5,924.3 625.5,930.6 626.5,918.3 627.5,930.6 628.5,919.6 629.5,919.2 630.5,919.5 631.5,930.2 632.5,917.3 633.5,925.5 634.5,919.6 635.5,923.7 636.5,911.3 637.5,924.8 638.5,923.0 639.5,920.2 640.5,929.7 641.5,924.4 642.5,923.0 643.5,920.5 644.5,923.8 645.5,912.4 646.5,911.6 647.5,915.4 648.5,922.1 649.5,918.5 650.5,910.9 651.5,912.6 652.5,918.4 653.5,924.8 654.5,915.9 655.5,917.9 656.5,921.6 657.5,922.7 658.5,929.1 659.5,929.8 660.5,928.7 661.5,920.5 662.5,921.0 663.5,925.9 664.5,923.4 665.5,914.8 666.5,928.4 667.5,924.4 668.5,928.5 669.5,911.9 670.5,924.2 671.5,914.9 672.5,918.3 673.5,925.6 674.5,919.0 675.5,921.2 676.5,919.8 677.5,921.3 678.5,919.1 679.5,919.3 680.5,926.3 681.5,918.5 682.5,926.4 683.5,929.1 684.5,924.4 685.5,927.1 686.5,925.9 687.5,928.1 688.5,918.2 689.5,918.1 690.5,925.8 691.5,915.8 692.5,923.1 693.5,926.4 694.5,927.8 695.5,920.6 696.5,923.2 697.5,921.4 698.5,907.8 699.5,918.0 700.5,923.2 701.5,928.2 702.5,924.8 703.5,926.3 704.5,925.9 705.5,934.7 706.5,922.1 707.5,928.4 708.5,911.8 709.5,924.1 710.5,918.2 711.5,921.2 712.5,926.8 713.5,921.8 714.5,925.1 715.5,924.9 716.5,923.2 717.5,932.8 718.5,916.1 719.5,920.3 720.5,923.8 721.5,916.2 722.5,928.0 723.5,935.7 724.5,921.9 725.5,927.5 726.5,923.6 727.5,926.0 728.5,924.4 729.5,928.2 730.5,923.7 731.5,919.8 732.5,921.6 733.5,915.0 734.5,920.5 735.5,921.5 736.5,922.5 737.5,920.8 738.5,924.3 739.5,929.8 740.5,928.8 741.5,932.4 742.5,924.8 743.5,923.2 744.5,921.5 745.5,918.3 746.5,926.0 747.5,934.1 748.5,927.1 749.5,924.0 750.5,933.0 751.5,929.8 752.5,929.2 753.5,914.3 754.5,918.7 755.5,927.3 756.5,926.3 757.5,923.6 758.5,922.9 759.5,923.0 760.5,929.6 761.5,928.7 762.5,917.6 763.5,924.3 764.5,919.3 765.5,924.2 766.5,923.0 767.5,922.9 768.5,925.5 769.5,918.6 770.5,920.3 771.5,924.5 772.5,923.5 773.5,916.8 774.5,928.7 775.5,920.4 776.5,919.0 777.5,916.9 778.5,917.6 779.5,928.0 780.5,920.5 781.5,926.0 782.5,920.6 783.5,923.6 784.5,920.3 785.5,927.5 786.5,923.7 787.5,922.0 788.5,922.0 789.5,920.3 790.5,916.1 791.5,928.8 792.5,924.2 793.5,932.2 794.5,921.8 795.5,917.4 796.5,923.8 797.5,919.3 798.5,915.4 799.5,922.7 800.5,920.6 801.5,920.4 802.5,928.1 803.5,930.2 804.5,926.6 805.5,928.7 806.5,922.1 807.5,935.0 808.5,934.1 809.5,933.2 810.5,924.1 811.5,926.2 812.5,925.9 813.5,926.7 814.5,927.2 815.5,928.6 816.5,924.2 817.5,926.1 818.5,923.9 819.5,925.5 820.5,924.8 821.5,925.0 822.5,916.2 823.5,916.2 824.5,920.3 825.5,933.5 826.5,922.7 827.5,919.2 828.5,923.3 829.5,932.0 830.5,926.7 831.5,914.0 832.5,926.3 833.5,931.9 834.5,926.3 835.5,921.2 836.5,925.2 837.5,930.6 838.5,935.0 839.5,924.8 840.5,932.9 841.5,921.5 842.5,920.6 843.5,924.1 844.5,925.7 845.5,926.2 846.5,926.8 847.5,928.9 848.5,929.8 849.5,929.9 850.5,919.1 851.5,918.1 852.5,925.7 853.5,923.5 854.5,927.2 855.5,925.3 856.5,920.2 857.5,921.7 858.5,921.6 859.5,922.9 860.5,922.5 861.5,928.9 862.5,922.9 863.5,933.1 864.5,925.2 865.5,924.6 866.5,924.3 867.5,934.1 868.5,922.2 869.5,931.3 870.5,936.4 871.5,926.8 872.5,926.6 873.5,933.1 874.5,925.0 875.5,926.9 876.5,926.5 877.5,931.6 878.5,923.2 879.5,926.0 880.5,927.4 881.5,931.2 882.5,929.4 883.5,927.6 884.5,934.0 885.5,929.8 886.5,921.4 887.5,927.1 888.5,926.7 889.5,928.2 890.5,923.3 891.5,922.6 892.5,925.6 893.5,928.4 894.5,923.8 895.5,922.9 896.5,927.4 897.5,924.6 898.5,924.4 899.5,923.2 900.5,926.1 901.5,929.0 902.5,926.2 903.5,928.2 904.5,926.8 905.5,920.9 906.5,923.3 907.5,926.6 908.5,925.2 909.5,924.5 910.5,925.0 911.5,928.3 912.5,928.4 913.5,935.1 914.5,926.6 915.5,919.0 916.5,929.6 917.5,920.7 918.5,929.9 919.5,928.5 920.5,922.2 921.5,930.6 922.5,928.8 923.5,922.2 924.5,927.6 925.5,923.7 926.5,917.0 927.5,930.6 928.5,922.0 929.5,919.6 930.5,926.8 931.5,927.2 932.5,923.5 933.5,924.1 934.5,920.8 935.5,931.6 936.5,926.6 937.5,922.5 938.5,924.3 939.5,927.8 940.5,923.5 941.5,924.2 942.5,929.8 943.5,933.5 944.5,926.2 945.5,927.0 946.5,925.7 947.5,924.8 948.5,929.7 949.5,928.7 950.5,922.0 951.5,928.9 952.5,930.8 953.5,930.3 954.5,924.3 955.5,919.0 956.5,922.1 957.5,931.8 958.5,926.0 959.5,928.7 960.5,923.2 961.5,925.3 962.5,927.0 963.5,928.9 964.5,921.5 965.5,931.8 966.5,927.8 967.5,930.4 968.5,922.5 969.5,921.0 970.5,924.4 971.5,922.6 972.5,926.1 973.5,931.5 974.5,925.7 975.5,919.0 976.5,928.0 977.5,923.0 978.5,931.6 979.5,924.2 980.5,921.4 981.5,925.1 982.5,932.8 983.5,925.8 984.5,929.4 985.5,922.8 986.5,925.1 987.5,926.6 988.5,925.3 989.5,930.2 990.5,927.2 991.5,923.6 992.5,924.9 993.5,919.6 994.5,923.6 995.5,917.6 996.5,929.1 997.5,926.5 998.5,925.3 999.5,930.8 1000.5,924.8 1001.5,927.5 1002.5,926.5 1003.5,927.0 1004.5,924.7 1005.5,922.9 1006.5,927.3 1007.5,923.6 1008.5,931.4 1009.5,928.6 1010.5,929.8 1011.5,924.1 1012.5,925.7 1013.5,928.6 1014.5,925.4 1015.5,926.1 1016.5,930.6 1017.5,921.5 1018.5,925.8 1019.5,923.0 1020.5,921.7 1021.5,917.9 1022.5,925.1 1023.5,927.1 1024.5,928.0 1025.5,926.5 1026.5,923.7 1027.5,925.8 1028.5,927.3 1029.5,930.0 1030.5,927.1 1031.5,921.7 1032.5,923.3 1033.5,924.5 1034.5,920.9 1035.5,922.4 1036.5,930.0 1037.5,922.4 1038.5,927.8 1039.5,923.0 1040.5,928.3 1041.5,927.2 1042.5,931.5 1043.5,927.6 1044.5,924.0 1045.5,925.0 1046.5,922.1 1047.5,925.5 1048.5,922.8 1049.5,923.4 1050.5,923.8 1051.5,922.5 1052.5,927.0 1053.5,920.5 1054.5,922.6 1055.5,933.5 1056.5,932.6 1057.5,924.3 1058.5,924.0 1059.5,928.1 1060.5,917.7 1061.5,926.9 1062.5,922.9 1063.5,921.3 1064.5,927.6 1065.5,930.0 1066.5,926.5 1067.5,928.4 1068.5,923.2 1069.5,930.3 1070.5,922.4 1071.5,918.1 1072.5,925.9 1073.5,926.9 1074.5,923.9 1075.5,925.4 1076.5,928.5 1077.5,930.1 1078.5,919.7 1079.5,928.5 1080.5,925.1 1081.5,923.7 1082.5,923.0 1083.5,924.1 1084.5,928.5 1085.5,924.3 1086.5,923.8 1087.5,929.6 1088.5,923.6 1089.5,931.6 1090.5,925.3 1091.5,929.4 1092.5,928.9 1093.5,923.6 1094.5,930.2 1095.5,924.5 1096.5,922.8 1097.5,929.4 1098.5,925.7 1099.5,921.6 1100.5,927.1 1101.5,925.2 1102.5,922.9 1103.5,923.5 1104.5,921.0 1105.5,927.3 1106.5,919.0 1107.5,923.1 1108.5,926.2 1109.5,929.7 1110.5,922.8 1111.5,925.4 1112.5,927.2 1113.5,922.4 1114.5,922.3 1115.5,922.4 1116.5,928.8 1117.5,928.3 1118.5,929.3 1119.5,925.2 1120.5,921.0 1121.5,921.6 1122.5,921.2 1123.5,929.8 1124.5,925.1 1125.5,927.6 1126.5,925.6 1127.5,924.3 1128.5,923.9 1129.5,931.2 1130.5,921.4 1131.5,926.8 1132.5,923.4 1133.5,930.9 1134.5,924.3 1135.5,924.4 1136.5,919.3 1137.5,930.9 1138.5,926.0 1139.5,929.3 1140.5,930.0 1141.5,921.4 1142.5,925.3 1143.5,924.1 1144.5,924.7 1145.5,926.1 1146.5,926.0 1147.5,929.4 1148.5,922.4 1149.5,922.9 1150.5,925.7 1151.5,919.4 1152.5,924.5 1153.5,927.6 1154.5,923.3 1155.5,922.6 1156.5,928.7 1157.5,923.3 1158.5,922.3 1159.5,925.7 1160.5,922.3 1161.5,921.4 1162.5,929.2 1163.5,922.6 1164.5,926.8 1165.5,928.0 1166.5,924.0 1167.5,926.5 1168.5,924.4 1169.5,926.6 1170.5,928.5 1171.5,924.3 1172.5,926.1 1173.5,925.1 1174.5,927.0 1175.5,924.1 1176.5,925.1 1177.5,921.6 1178.5,926.2 1179.5,923.7 1180.5,927.4 1181.5,930.8 1182.5,923.0 1183.5,925.1 1184.5,924.1 1185.5,921.6 1186.5,928.2 1187.5,927.2 1188.5,927.5 1189.5,926.1 1190.5,917.1 1191.5,924.2 1192.5,923.8 1193.5,926.5 1194.5,924.4 1195.5,925.0 1196.5,920.2 1197.5,925.5 1198.5,921.8 1199.5,925.6 1200.5,925.0 1201.5,926.4 1202.5,922.9 1203.5,925.0 1204.5,922.1 1205.5,924.2 1206.5,926.2 1207.5,927.3 1208.5,923.2 1209.5,928.2 1210.5,923.6 1211.5,930.7 1212.5,923.4 1213.5,923.7 1214.5,924.6 1215.5,923.1 1216.5,928.5 1217.5,925.9 1218.5,922.9 1219.5,921.3 1220.5,924.1 1221.5,923.8 1222.5,924.4 1223.5,922.4 1224.5,927.3 1225.5,930.9 1226.5,921.8 1227.5,923.1 1228.5,927.9 1229.5,923.5 1230.5,919.9 1231.5,918.7 1232.5,924.3 1233.5,921.1 1234.5,926.8 1235.5,922.5 1236.5,921.7 1237.5,926.9 1238.5,927.6 1239.5,918.9 1240.5,920.4 1241.5,918.2 1242.5,924.9 1243.5,925.7 1244.5,919.2 1245.5,924.7 1246.5,929.1 1247.5,924.8 1248.5,922.5 1249.5,923.5 1250.5,930.3 1251.5,924.5 1252.5,929.2 1253.5,919.3 1254.5,927.6 1255.5,926.6 1256.5,924.4 1257.5,925.4 1258.5,921.6 1259.5,925.6 1260.5,923.3 1261.5,923.1 1262.5,923.5 1263.5,926.9 1264.5,920.3 1265.5,926.3 1266.5,927.1 1267.5,925.3 1268.5,924.6 1269.5,931.3 1270.5,925.8 1271.5,921.5 1272.5,923.4 1273.5,923.5 1274.5,921.9 1275.5,923.6 1276.5,928.3 1277.5,928.1 1278.5,925.4 1279.5,930.7 1280.5,924.7 1281.5,919.7 1282.5,924.5 1283.5,923.3 1284.5,932.2 1285.5,927.6 1286.5,925.4 1287.5,924.5 1288.5,926.1 1289.5,922.3 1290.5,924.8 1291.5,925.7 1292.5,924.6 1293.5,923.3 1294.5,926.5 1295.5,925.0 1296.5,925.2 1297.5,921.9 1298.5,924.4 1299.5,927.6 1300.5,925.4 1301.5,926.6 1302.5,923.7 1303.5,924.6 1304.5,923.4 1305.5,924.0 1306.5,926.3 1307.5,924.4 1308.5,924.2 1309.5,924.0 1310.5,924.2 1311.5,925.7 1312.5,929.2 1313.5,929.4 1314.5,924.6 1315.5,921.0 1316.5,922.3 1317.5,925.6 1318.5,924.1 1319.5,925.1 1320.5,928.2 1321.5,927.3 1322.5,928.8 1323.5,924.1 1324.5,921.0 1325.5,908.0 1326.5,845.0 1327.5,723.0 1328.5,659.0 1329.5,761.0 1330.5,888.0 1331.5,919.0 1333.5,923.0 1334.5,920.3 1335.5,920.0 1336.5,930.0 1337.5,925.3 1338.5,923.0 1339.5,927.4 1340.5,926.2 1341.5,923.6 1342.5,922.6 1343.5,924.0 1344.5,927.1 1345.5,924.6 1346.5,922.5 1347.5,922.7 1348.5,926.2 1349.5,922.0 1350.5,924.1 1351.5,921.4 1352.5,927.4 1353.5,928.9 1354.5,925.1 1355.5,923.1 1356.5,925.6 1357.5,925.4 1358.5,929.1 1359.5,928.6 1360.5,926.4 1361.5,924.3 1362.5,921.4 1363.5,922.8 1364.5,924.3 1365.5,924.9 1366.5,926.1 1367.5,922.5 1368.5,925.3 1369.5,924.6 1370.5,919.4 1371.5,924.1 1372.5,923.2 1373.5,924.1 1374.5,926.0 1375.5,925.6 1376.5,922.9 1377.5,920.1 1378.5,921.9 1379.5,924.5 1380.5,922.3 1381.5,924.7 1382.5,926.5 1383.5,926.2 1384.5,924.6 1385.5,928.6 1386.5,927.6 1387.5,924.7 1388.5,924.3 1389.5,927.8 1390.5,926.2 1391.5,925.1 1392.5,923.0 1393.5,922.2 1394.5,922.1 1395.5,923.5 1396.5,924.6 1397.5,923.3 1398.5,921.8 1399.5,921.4 1400.5,922.9 1401.5,925.0 1402.5,925.5 1403.5,925.0 1404.5,920.5 1405.5,922.2 1406.5,922.2 1407.5,922.0 1408.5,922.3 1409.5,924.0 1410.5,924.9 1411.5,924.7 1412.5,928.8 1413.5,926.9 1414.5,926.4 1415.5,925.7 1416.5,924.2 1417.5,925.9 1418.5,926.0 1419.5,926.3 1420.5,925.1 1421.5,924.6 1422.5,922.4 1423.5,921.4 1424.5,924.1 1425.5,925.2 1426.5,922.2 1427.5,922.3 1428.5,922.3 1429.5,922.3 1430.5,923.8 1431.5,926.6 1432.5,925.2 1433.5,924.8 1434.5,924.7 1435.5,923.6 1436.5,921.6 1437.5,923.3 1438.5,925.1 1439.5,926.9 1440.5,925.2 1441.5,926.1 1442.5,924.7 1443.5,923.4 1444.5,921.5 1445.5,921.2 1446.5,920.7 1447.5,922.2 1448.5,925.2 1449.5,923.0 1450.5,921.4 1451.5,922.4 1452.5,925.2 1453.5,926.8 1454.5,924.2 1455.5,922.1 1456.5,922.9 1457.5,926.0 1458.5,925.4 1459.5,924.5 1460.5,925.7 1461.5,928.1 1462.5,929.3 1463.5,929.5 1464.5,928.4 1465.5,927.2 1466.5,924.4 1467.5,920.3 1468.5,917.7 1469.5,921.7 1470.5,922.0 1471.5,922.3 1472.5,925.2 1473.5,927.0 1474.5,925.7 1475.5,923.2 1476.5,923.0 1477.5,923.3 1478.5,921.3 1479.5,921.0 1480.5,921.8 1481.5,924.2 1482.5,926.7 1483.5,925.9 1484.5,923.6 1485.5,922.4 1486.5,925.8 1487.5,928.7 1488.5,928.5 1489.5,926.2 1490.5,926.8 1491.5,925.1 1492.5,925.1 1493.5,923.5 1494.5,923.1 1495.5,922.0 1496.5,923.3 1497.5,924.5 1498.5,924.4 1499.5,924.5 1500.5,924.4 1501.5,924.7 1502.5,923.7 1503.5,922.6 1504.5,922.7 1505.5,922.5 1506.5,923.9 1507.5,923.0 1508.5,924.3 1509.5,923.1 1510.5,923.3 1511.5,922.9 1512.5,924.8 1513.5,925.0 1514.5,924.6 1515.5,926.9 1516.5,927.4 1517.5,925.6 1518.5,923.5 1519.5,921.7 1520.5,922.3 1521.5,927.2 1522.5,929.7 1523.5,923.9 1524.5,921.3 1525.5,923.4 1526.5,922.6 1527.5,922.9 1528.5,924.6 1529.5,923.4 1530.5,923.2 1531.5,922.1 1532.5,922.8 1533.5,923.5 1534.5,921.9 1535.5,921.5 1536.5,921.8 1537.5,923.1 1538.5,922.7 1539.5,920.7 1540.5,921.2 1541.5,921.0 1542.5,922.1 1543.5,925.3 1544.5,925.1 1545.5,922.4 1546.5,921.3 1547.5,923.9 1548.5,925.1 1549.5,925.1 1550.5,922.8 1551.5,919.8 1552.5,922.0 1553.5,926.2 1554.5,924.7 1555.5,921.0 1556.5,922.5 1557.5,926.3 1558.5,925.2 1559.5,923.6 1560.5,922.3 1561.5,922.3 1562.5,923.3 1563.5,923.9 1564.5,921.9 1565.5,921.7 1566.5,921.6 1567.5,921.6 1568.5,923.8 1569.5,925.9 1570.5,925.9 1571.5,922.9 1572.5,919.9 1573.5,922.7 1574.5,924.1 1575.5,923.4 1576.5,923.5 1577.5,923.5 1578.5,922.4 1579.5,923.6 1580.5,925.2 1581.5,923.8 1582.5,925.0 1583.5,924.7 1584.5,925.3 1585.5,925.1 1586.5,925.4 1587.5,924.1 1588.5,922.9 1589.5,921.3 1590.5,922.2 1591.5,924.5 1592.5,923.6 1593.5,924.1 1594.5,923.3 1595.5,924.5 1596.5,925.0 1597.5,924.9 1598.5,923.1 1599.5,921.0 1600.5,920.5 1601.5,923.8 1602.5,923.0 1603.5,919.5 1604.5,917.3 1605.5,917.6 1606.5,918.9 1607.5,919.0 1608.5,917.9 1609.5,920.2 1610.5,923.3 1611.5,925.4 1612.5,925.2 1613.5,923.2 1614.5,921.4 1615.5,921.6 1616.5,921.3 1617.5,920.8 1618.5,921.5 1619.5,921.9 1620.5,923.2 1621.5,923.6 1622.5,923.5 1623.5,924.1 1624.5,921.7 1625.5,921.4 1626.5,922.5 1627.5,921.1 1628.5,921.5 1629.5,921.7 1630.5,919.8 1631.5,921.8 1632.5,923.4 1633.5,920.6 1634.5,918.9 1635.5,920.8 1636.5,920.6 1637.5,920.8 1638.5,920.4 1639.5,921.0 1640.5,923.0 1641.5,922.4 1642.5,919.2 1643.5,917.5 1644.5,917.8 1645.5,916.2 1646.5,915.8 1647.5,918.7 1648.5,919.5 1649.5,918.8 1650.5,918.1 1651.5,917.4 1652.5,918.6 1653.5,919.1 1654.5,921.8 1655.5,920.8 1656.5,919.1 1657.5,917.8 1658.5,917.9 1659.5,916.2 1660.5,915.6 1661.5,917.0 1662.5,920.1 1663.5,920.5 1664.5,921.6 1665.5,920.3 1666.5,918.1 1667.5,916.0 1668.5,916.5 1669.5,917.0 1670.5,918.2 1671.5,919.1 1672.5,917.1 1673.5,915.7 1674.5,915.5 1675.5,917.4 1676.5,916.4 1677.5,916.3 1678.5,915.2 1679.5,913.3 1680.5,915.2 1681.5,914.7 1682.5,911.2 1683.5,912.8 1684.5,915.6 1685.5,917.0 1686.5,916.4 1687.5,915.4 1688.5,914.0 1689.5,909.7 1690.5,908.9 1691.5,910.9 1692.5,913.7 1693.5,915.4 1694.5,915.2 1695.5,916.3 1696.5,916.5 1697.5,917.0 1698.5,916.8 1699.5,912.7 1700.5,913.0 1701.5,915.2 1702.5,915.0 1703.5,913.3 1704.5,911.6 1705.5,911.0 1706.5,911.8 1707.5,913.0 1708.5,912.5 1709.5,911.2 1710.5,910.7 1711.5,911.2 1712.5,910.0 1713.5,908.0 1714.5,907.6 1715.5,908.9 1716.5,910.9 1717.5,911.5 1718.5,911.4 1719.5,911.0 1720.5,908.4 1721.5,907.8 1722.5,908.8 1723.5,910.7 1724.5,910.3 1725.5,908.2 1726.5,910.1 1727.5,914.1 1728.5,912.7 1729.5,912.6 1730.5,913.1 1731.5,910.1 1732.5,908.7 1733.5,907.1 1734.5,905.1 1735.5,904.0 1736.5,908.4" fill="none" stroke="#ff0000" stroke-width="1"/><polyline points="75.0,912.3 80.0,912.3 94.6,900.8 108.5,908.0 122.0,900.0 133.5,894.6 144.6,900.8 155.4,897.0 166.2,886.0 176.2,892.0 195.0,877.5 203.3,877.5 221.0,865.4 240.8,852.0 250.4,841.3 250.9,840.7 251.4,840.1 251.9,839.4 252.4,838.8 252.9,838.2 253.4,837.6 253.9,836.9 254.4,836.3 254.9,835.7 255.4,835.1 255.9,834.5 256.4,833.9 256.9,833.3 257.4,832.7 257.9,832.1 258.4,831.5 258.9,830.9 259.4,830.2 259.9,829.6 260.4,829.0 260.9,828.4 261.4,827.8 261.9,827.2 262.4,826.5 262.9,825.9 263.4,825.3 263.9,824.6 264.4,824.0 264.9,823.3 265.4,822.7 265.9,822.0 266.4,821.3 266.9,820.7 267.4,820.0 267.9,819.3 268.4,818.6 268.9,817.9 269.4,817.2 269.9,816.4 270.4,815.7 270.9,815.0 271.4,814.2 271.9,813.5 272.4,812.7 272.9,812.0 273.4,811.2 273.9,810.5 274.4,809.7 274.9,809.0 275.4,808.2 275.9,807.4 276.4,806.6 276.9,805.9 277.4,805.0 277.9,804.2 278.4,803.4 278.9,802.5 279.4,801.7 279.9,800.8 280.4,799.9 280.9,798.9 281.4,798.0 281.9,797.0 282.4,796.0 282.9,795.0 283.4,794.0 283.9,792.9 284.4,791.8 284.9,790.6 285.4,789.5 285.9,788.3 286.4,787.0 286.9,785.8 287.4,784.5 287.9,783.1 288.4,781.7 288.9,780.2 289.4,778.7 289.9,777.1 290.4,775.3 290.9,773.5 291.4,771.5 291.9,769.5 292.4,767.3 292.9,765.0 293.4,762.5 293.9,759.4 294.4,755.8 294.9,751.8 295.4,747.4 295.9,743.0 296.4,738.5 296.9,734.0 297.4,729.3 297.9,724.4 298.4,719.2 298.9,713.9 299.4,708.3 299.9,702.6 300.4,696.5 300.9,690.0 301.4,682.7 301.9,674.2 302.4,665.1 302.9,656.4 303.4,647.9 303.9,639.4 309.5,616.5 314.7,633.9 315.2,643.8 315.7,653.8 316.2,663.9 316.7,674.2 317.2,684.0 317.7,692.7 318.2,701.2 318.7,708.3 319.2,713.5 319.7,717.7 320.2,721.3 320.7,724.4 321.2,727.3 321.7,730.0 322.2,732.8 322.7,735.7 323.2,738.9 323.7,742.4 324.2,745.9 324.7,749.5 325.2,753.0 325.7,756.4 326.2,759.6 326.7,762.5 327.2,765.1 327.7,767.5 328.2,769.8 328.7,772.1 329.2,774.2 329.7,776.3 330.2,778.3 330.7,780.2 331.2,782.1 331.7,783.9 332.2,785.7 332.7,787.4 333.2,789.1 333.7,790.8 334.2,792.4 334.7,794.0 335.2,795.6 335.7,797.1 336.2,798.6 336.7,800.0 337.2,801.4 337.7,802.8 338.2,804.2 338.7,805.6 339.2,806.9 339.7,808.3 340.2,809.6 340.7,810.9 341.2,812.2 341.7,813.5 342.2,814.9 342.7,816.2 343.2,817.6 343.7,818.9 344.2,820.3 344.7,821.6 345.2,823.0 345.7,824.4 346.2,825.7 346.7,827.1 347.2,828.4 347.7,829.8 348.2,831.0 348.7,832.3 349.2,833.6 349.7,834.8 350.2,835.9 350.7,837.1 351.2,838.2 351.7,839.2 352.2,840.2 352.7,841.2 353.2,842.0 353.7,842.9 354.2,843.8 354.7,844.6 355.2,845.4 355.7,846.2 356.2,846.9 356.7,847.7 357.2,848.4 357.7,849.1 358.2,849.8 358.7,850.5 359.2,851.1 359.7,851.8 360.2,852.4 360.7,853.1 361.2,853.7 361.7,854.3 362.2,854.9 362.7,855.6 363.2,856.2 363.7,856.8 364.2,857.4 364.7,858.0 365.2,858.6 365.7,859.2 366.2,859.8 366.7,860.4 367.2,861.0 367.7,861.7 368.2,862.3 368.7,862.9 369.2,863.6 369.7,864.3 370.0,865.9 372.0,870.2 376.5,870.0 379.0,879.0 385.0,882.8 391.0,887.8 396.0,897.0 401.0,895.0 404.0,910.9 408.0,894.6 411.0,910.2 414.0,904.0 415.5,916.5 417.5,970.0 419.0,942.8 421.5,897.8 423.0,914.0 424.5,905.0 427.0,931.5 428.5,905.0 431.5,924.0 435.0,916.5 436.5,915.2 437.5,929.0 438.5,966.5 440.0,949.0 441.5,934.0 444.0,931.5 446.0,924.0 447.0,920.2 449.0,935.2 451.5,924.0 453.0,912.8 454.0,895.2 456.0,862.8 457.5,852.8 459.0,862.8 461.0,889.0 462.0,929.0 464.0,925.2 465.5,931.5 467.0,951.5 468.5,931.5 470.0,945.2 472.0,925.2 473.0,926.5 474.5,930.2 475.5,924.0 477.0,929.0 478.0,944.0 479.5,929.0 481.0,957.8 483.0,931.5 484.0,919.0 486.0,959.0 488.0,925.2 490.5,929.0 493.0,927.8 495.0,930.2 497.0,939.0 500.0,935.2 501.5,962.9 503.5,971.0 505.5,929.1 507.5,938.0 509.5,938.6 511.5,933.6 513.5,934.9 515.5,935.9 517.5,931.0 519.5,944.4 521.5,946.0 523.5,929.2 525.5,971.0 527.5,960.8 529.5,940.1 531.5,928.9 533.5,931.4 535.5,958.5 537.5,935.9 539.5,924.6 541.5,940.0 543.5,939.7 545.5,971.0 547.5,926.2 549.5,936.8 551.5,934.2 553.5,931.0 555.5,950.0 557.5,928.7 559.5,934.2 561.5,936.2 563.5,941.3 565.5,936.6 567.5,920.7 569.5,930.1 571.5,971.0 573.5,937.2 575.5,925.3 577.5,928.3 579.5,921.6 581.5,951.8 583.5,956.0 585.5,924.7 587.5,971.0 589.5,917.2 591.5,920.1 593.5,943.9 595.5,965.2 597.5,952.3 599.5,929.4 601.5,916.9 603.5,934.0 605.5,947.0 607.5,967.3 609.5,936.0 611.5,935.7 613.5,951.3 615.5,932.9 616.5,928.2 617.5,970.4 618.5,926.4 619.5,953.8 620.5,935.5 621.5,937.7 622.5,971.0 623.5,930.9 624.5,956.8 625.5,931.1 626.5,936.1 627.5,956.9 628.5,956.1 629.5,971.0 630.5,935.5 631.5,971.0 632.5,942.7 633.5,940.0 634.5,949.7 635.5,926.2 636.5,931.5 637.5,931.4 638.5,943.4 639.5,941.7 640.5,941.2 641.5,933.9 642.5,962.3 643.5,961.7 644.5,935.5 645.5,952.1 646.5,928.4 647.5,938.5 648.5,955.5 649.5,924.3 650.5,924.0 651.5,932.1 652.5,943.4 653.5,931.9 654.5,923.8 655.5,925.9 656.5,940.7 657.5,924.5 658.5,944.7 659.5,934.3 660.5,933.8 661.5,932.6 662.5,940.5 663.5,932.0 664.5,971.0 665.5,930.5 666.5,951.0 667.5,933.7 668.5,939.6 669.5,936.3 670.5,931.2 671.5,951.4 672.5,937.9 673.5,924.9 674.5,952.1 675.5,926.6 676.5,950.2 677.5,938.1 678.5,943.0 679.5,929.3 680.5,923.9 681.5,951.4 682.5,943.9 683.5,939.3 684.5,926.5 685.5,941.4 686.5,943.0 687.5,932.8 688.5,916.3 689.5,940.6 690.5,927.2 691.5,931.9 692.5,936.6 693.5,946.1 694.5,947.0 695.5,942.3 696.5,960.1 697.5,946.1 698.5,968.2 699.5,971.0 700.5,929.2 701.5,943.9 702.5,937.1 703.5,930.7 704.5,965.8 705.5,968.5 706.5,962.4 707.5,951.7 708.5,939.9 709.5,958.6 710.5,937.2 711.5,955.1 712.5,935.5 713.5,920.1 714.5,944.9 715.5,937.9 716.5,934.0 717.5,946.8 718.5,947.0 719.5,924.8 720.5,919.9 721.5,933.3 722.5,942.4 723.5,937.3 724.5,928.2 725.5,929.3 726.5,939.5 727.5,930.3 728.5,935.4 729.5,953.1 730.5,928.2 731.5,932.0 732.5,924.7 733.5,924.6 734.5,963.4 735.5,927.0 736.5,951.6 737.5,939.8 738.5,931.2 739.5,923.3 740.5,938.6 741.5,934.6 742.5,929.8 743.5,952.1 744.5,936.3 745.5,924.9 746.5,935.8 747.5,939.3 748.5,961.6 749.5,918.8 750.5,938.0 751.5,953.9 752.5,939.3 753.5,928.8 754.5,932.1 755.5,934.1 756.5,940.6 757.5,921.7 758.5,932.6 759.5,928.9 760.5,940.8 761.5,930.0 762.5,935.1 763.5,930.3 764.5,929.0 765.5,936.5 766.5,944.6 767.5,947.0 768.5,967.2 769.5,952.0 770.5,960.1 771.5,939.7 772.5,934.7 773.5,925.5 774.5,971.0 775.5,928.2 776.5,920.2 777.5,945.1 778.5,931.2 779.5,924.8 780.5,917.0 781.5,937.0 782.5,946.9 783.5,936.3 784.5,947.9 785.5,935.9 786.5,966.6 787.5,926.0 788.5,951.3 789.5,941.0 790.5,943.8 791.5,932.7 792.5,932.6 793.5,931.8 794.5,928.4 795.5,941.6 796.5,925.4 797.5,921.9 798.5,940.5 799.5,935.0 800.5,919.0 801.5,946.3 802.5,935.6 803.5,940.9 804.5,945.9 805.5,944.1 806.5,931.7 807.5,938.0 808.5,931.6 809.5,938.8 810.5,944.1 811.5,942.3 812.5,920.1 813.5,935.0 814.5,937.0 815.5,939.9 816.5,928.3 817.5,967.4 818.5,932.7 819.5,935.6 820.5,948.1 821.5,929.5 822.5,935.1 823.5,935.8 824.5,940.7 825.5,935.4 826.5,956.9 827.5,931.3 828.5,938.1 829.5,938.6 830.5,933.1 831.5,940.8 832.5,937.6 833.5,926.7 834.5,931.3 835.5,940.2 836.5,961.9 837.5,940.1 838.5,952.6 839.5,941.2 840.5,957.2 841.5,930.2 842.5,935.6 843.5,923.7 844.5,936.8 845.5,929.6 846.5,955.9 847.5,923.1 848.5,932.9 849.5,941.7 850.5,934.4 851.5,960.0 852.5,945.1 853.5,954.1 854.5,929.6 855.5,939.0 856.5,949.0 857.5,939.0 858.5,929.9 859.5,924.1 860.5,933.6 861.5,930.0 862.5,933.0 863.5,938.9 864.5,940.8 865.5,931.4 866.5,933.0 867.5,942.1 868.5,932.0 869.5,934.3 870.5,930.8 871.5,925.9 872.5,944.7 873.5,932.0 874.5,943.6 875.5,950.0 876.5,954.2 877.5,955.3 878.5,932.9 879.5,956.2 880.5,933.0 881.5,927.2 882.5,938.7 883.5,932.5 884.5,919.6 885.5,949.3 886.5,941.9 887.5,952.9 888.5,948.8 889.5,941.7 890.5,940.1 891.5,935.4 892.5,949.9 893.5,935.5 894.5,956.1 895.5,932.7 896.5,930.8 897.5,935.5 898.5,951.0 899.5,933.3 900.5,929.3 901.5,933.1 902.5,938.1 903.5,944.4 904.5,935.3 905.5,933.4 906.5,934.4 907.5,929.0 908.5,942.4 909.5,953.7 910.5,945.3 911.5,931.6 912.5,936.3 913.5,932.4 914.5,936.5 915.5,952.0 916.5,931.7 917.5,934.0 918.5,943.5 919.5,930.6 920.5,928.0 921.5,941.8 922.5,929.8 923.5,934.9 924.5,941.2 925.5,925.8 926.5,921.0 927.5,936.3 928.5,930.5 929.5,931.3 930.5,938.9 931.5,971.0 932.5,937.2 933.5,949.8 934.5,936.6 935.5,943.0 936.5,926.2 937.5,940.5 938.5,936.3 939.5,934.4 940.5,942.2 941.5,941.1 942.5,940.3 943.5,929.8 944.5,947.3 945.5,937.4 946.5,938.0 947.5,934.0 948.5,936.2 949.5,937.6 950.5,940.9 951.5,926.6 952.5,936.2 953.5,942.8 954.5,935.6 955.5,933.3 956.5,933.4 957.5,931.3 958.5,937.7 959.5,943.5 960.5,936.4 961.5,927.6 962.5,971.0 963.5,936.2 964.5,935.8 965.5,930.3 966.5,949.2 967.5,931.1 968.5,935.2 969.5,950.7 970.5,935.5 971.5,943.2 972.5,935.1 973.5,941.4 974.5,939.7 975.5,927.9 976.5,938.9 977.5,940.7 978.5,939.8 979.5,935.8 980.5,943.2 981.5,945.8 982.5,929.1 983.5,927.1 984.5,931.2 985.5,945.8 986.5,945.7 987.5,929.6 988.5,933.3 989.5,924.9 990.5,934.5 991.5,925.7 992.5,940.6 993.5,935.9 994.5,931.5 995.5,933.2 996.5,939.7 997.5,939.8 998.5,933.1 999.5,939.2 1000.5,939.4 1001.5,947.3 1002.5,935.8 1003.5,934.7 1004.5,936.2 1005.5,927.3 1006.5,934.8 1007.5,929.5 1008.5,928.7 1009.5,933.7 1010.5,931.2 1011.5,944.1 1012.5,941.9 1013.5,928.9 1014.5,935.5 1015.5,931.2 1016.5,934.4 1017.5,929.3 1018.5,944.2 1019.5,925.2 1020.5,942.1 1021.5,929.7 1022.5,930.0 1023.5,933.4 1024.5,930.9 1025.5,934.4 1026.5,938.9 1027.5,950.0 1028.5,933.4 1029.5,937.5 1030.5,927.0 1031.5,936.6 1032.5,932.2 1033.5,933.3 1034.5,943.0 1035.5,934.4 1036.5,931.2 1037.5,940.8 1038.5,932.6 1039.5,932.6 1040.5,929.2 1041.5,944.6 1042.5,935.3 1043.5,941.2 1044.5,934.0 1045.5,934.1 1046.5,936.3 1047.5,930.5 1048.5,934.2 1049.5,935.9 1050.5,940.0 1051.5,951.8 1052.5,929.7 1053.5,933.6 1054.5,934.5 1055.5,932.4 1056.5,940.8 1057.5,928.6 1058.5,926.8 1059.5,935.6 1060.5,939.4 1061.5,932.5 1062.5,940.3 1063.5,931.7 1064.5,938.6 1065.5,932.8 1066.5,927.5 1067.5,931.5 1068.5,936.6 1069.5,942.7 1070.5,936.9 1071.5,930.6 1072.5,933.0 1073.5,934.7 1074.5,942.3 1075.5,933.0 1076.5,927.5 1077.5,939.7 1078.5,943.8 1079.5,949.4 1080.5,936.1 1081.5,944.8 1082.5,953.3 1083.5,924.1 1084.5,936.5 1085.5,946.1 1086.5,926.9 1087.5,932.3 1088.5,932.1 1089.5,929.0 1090.5,939.1 1091.5,937.1 1092.5,927.5 1093.5,948.7 1094.5,942.6 1095.5,928.0 1096.5,931.4 1097.5,931.1 1098.5,931.2 1099.5,930.6 1100.5,940.9 1101.5,935.3 1102.5,940.9 1103.5,937.1 1104.5,940.4 1105.5,930.2 1106.5,940.2 1107.5,930.8 1108.5,930.6 1109.5,938.5 1110.5,939.6 1111.5,935.3 1112.5,937.5 1113.5,927.7 1114.5,935.0 1115.5,932.2 1116.5,936.7 1117.5,944.3 1118.5,930.4 1119.5,928.3 1120.5,930.9 1121.5,931.6 1122.5,931.9 1123.5,926.8 1124.5,952.2 1125.5,934.6 1126.5,933.3 1127.5,932.8 1128.5,932.3 1129.5,930.7 1130.5,927.7 1131.5,929.5 1132.5,936.6 1133.5,929.3 1134.5,934.2 1135.5,929.4 1136.5,939.8 1137.5,943.3 1138.5,937.0 1139.5,929.0 1140.5,938.3 1141.5,932.9 1142.5,938.6 1143.5,926.0 1144.5,928.3 1145.5,934.4 1146.5,941.5 1147.5,939.0 1148.5,936.3 1149.5,945.5 1150.5,954.2 1151.5,930.7 1152.5,929.6 1153.5,924.0 1154.5,928.4 1155.5,936.0 1156.5,935.4 1157.5,925.8 1158.5,936.2 1159.5,933.0 1160.5,933.0 1161.5,929.1 1162.5,941.9 1163.5,929.3 1164.5,939.3 1165.5,936.9 1166.5,945.9 1167.5,935.4 1168.5,931.8 1169.5,929.0 1170.5,938.6 1171.5,933.5 1172.5,953.7 1173.5,937.1 1174.5,931.1 1175.5,937.4 1176.5,938.0 1177.5,948.7 1178.5,936.1 1179.5,928.9 1180.5,934.8 1181.5,935.1 1182.5,942.5 1183.5,938.1 1184.5,933.9 1185.5,928.9 1186.5,928.2 1187.5,937.0 1188.5,927.6 1189.5,940.7 1190.5,932.7 1191.5,931.4 1192.5,933.0 1193.5,928.9 1194.5,931.4 1195.5,929.2 1196.5,937.4 1197.5,932.3 1198.5,932.9 1199.5,935.6 1200.5,951.3 1201.5,931.4 1202.5,932.7 1203.5,930.4 1204.5,928.7 1205.5,932.2 1206.5,937.3 1207.5,950.3 1208.5,925.7 1209.5,939.6 1210.5,934.1 1211.5,929.4 1212.5,942.0 1213.5,934.5 1214.5,936.4 1215.5,934.0 1216.5,934.3 1217.5,930.3 1218.5,936.5 1219.5,929.6 1220.5,928.3 1221.5,929.2 1222.5,933.1 1223.5,930.4 1224.5,928.5 1225.5,938.5 1226.5,931.5 1227.5,930.3 1228.5,939.2 1229.5,928.2 1230.5,932.2 1231.5,936.0 1232.5,929.4 1233.5,933.4 1234.5,932.4 1235.5,934.2 1236.5,940.6 1237.5,928.8 1238.5,936.7 1239.5,934.2 1240.5,936.7 1241.5,937.4 1242.5,931.1 1243.5,928.3 1244.5,940.0 1245.5,942.7 1246.5,928.5 1247.5,932.9 1248.5,934.0 1249.5,937.2 1250.5,940.0 1251.5,939.8 1252.5,932.7 1253.5,929.4 1254.5,930.6 1255.5,932.6 1256.5,938.5 1257.5,930.7 1258.5,934.5 1259.5,931.6 1260.5,936.1 1261.5,939.8 1262.5,942.3 1263.5,935.9 1264.5,936.2 1265.5,937.6 1266.5,936.3 1267.5,927.7 1268.5,933.7 1269.5,932.1 1270.5,930.7 1271.5,938.5 1272.5,934.0 1273.5,931.8 1274.5,933.4 1275.5,932.3 1276.5,933.4 1277.5,933.9 1278.5,933.9 1279.5,936.2 1280.5,932.3 1281.5,935.4 1282.5,933.6 1283.5,931.4 1284.5,943.6 1285.5,939.4 1286.5,936.5 1287.5,929.3 1288.5,935.4 1289.5,948.4 1290.5,939.6 1291.5,936.0 1292.5,941.4 1293.5,937.5 1294.5,931.4 1295.5,931.8 1296.5,929.0 1297.5,932.8 1298.5,930.8 1299.5,930.5 1300.5,933.0 1301.5,932.4 1302.5,934.0 1303.5,943.6 1304.5,933.2 1305.5,933.4 1306.5,938.5 1307.5,934.8 1308.5,931.4 1309.5,930.7 1310.5,932.1 1311.5,933.7 1312.5,932.4 1313.5,933.9 1314.5,933.0 1315.5,933.7 1316.5,931.2 1317.5,932.0 1318.5,930.0 1319.5,927.7 1320.5,932.3 1321.5,935.6 1322.5,937.0 1323.5,933.4 1324.5,929.0 1325.5,915.0 1326.5,846.0 1327.5,721.0 1328.5,649.0 1329.5,758.0 1330.5,890.0 1331.5,927.0 1333.5,931.0 1334.5,932.9 1335.5,929.3 1336.5,934.8 1337.5,938.2 1338.5,934.1 1339.5,933.5 1340.5,938.7 1341.5,934.5 1342.5,939.5 1343.5,941.3 1344.5,934.1 1345.5,931.1 1346.5,932.0 1347.5,939.3 1348.5,935.0 1349.5,933.3 1350.5,929.0 1351.5,928.8 1352.5,931.9 1353.5,933.3 1354.5,936.5 1355.5,934.3 1356.5,930.8 1357.5,931.6 1358.5,931.2 1359.5,936.3 1360.5,935.1 1361.5,941.8 1362.5,937.4 1363.5,935.1 1364.5,935.0 1365.5,934.0 1366.5,932.4 1367.5,933.7 1368.5,937.0 1369.5,932.7 1370.5,937.3 1371.5,929.8 1372.5,932.5 1373.5,932.9 1374.5,931.1 1375.5,935.9 1376.5,936.5 1377.5,935.9 1378.5,931.4 1379.5,929.2 1380.5,937.4 1381.5,934.3 1382.5,929.6 1383.5,934.3 1384.5,932.8 1385.5,935.7 1386.5,935.3 1387.5,938.5 1388.5,931.5 1389.5,929.1 1390.5,932.1 1391.5,930.8 1392.5,931.0 1393.5,933.4 1394.5,929.2 1395.5,928.9 1396.5,933.8 1397.5,934.9 1398.5,937.6 1399.5,948.1 1400.5,940.6 1401.5,934.8 1402.5,937.8 1403.5,941.1 1404.5,935.7 1405.5,937.1 1406.5,937.5 1407.5,936.9 1408.5,936.5 1409.5,935.4 1410.5,929.7 1411.5,932.6 1412.5,936.8 1413.5,938.9 1414.5,936.5 1415.5,932.5 1416.5,929.6 1417.5,929.6 1418.5,932.4 1419.5,934.5 1420.5,934.5 1421.5,933.6 1422.5,929.0 1423.5,930.5 1424.5,930.6 1425.5,929.7 1426.5,928.3 1427.5,932.2 1428.5,937.0 1429.5,933.3 1430.5,927.6 1431.5,927.2 1432.5,931.9 1433.5,940.2 1434.5,942.6 1435.5,936.6 1436.5,932.4 1437.5,930.5 1438.5,928.2 1439.5,929.5 1440.5,931.1 1441.5,932.3 1442.5,932.0 1443.5,937.8 1444.5,941.1 1445.5,935.7 1446.5,934.2 1447.5,935.1 1448.5,934.5 1449.5,934.0 1450.5,936.6 1451.5,932.3 1452.5,932.4 1453.5,937.4 1454.5,934.0 1455.5,930.9 1456.5,930.2 1457.5,932.5 1458.5,934.2 1459.5,937.6 1460.5,935.9 1461.5,934.0 1462.5,933.5 1463.5,938.7 1464.5,939.0 1465.5,933.9 1466.5,931.1 1467.5,929.7 1468.5,930.1 1469.5,932.3 1470.5,933.7 1471.5,936.1 1472.5,933.9 1473.5,933.0 1474.5,933.7 1475.5,935.8 1476.5,932.5 1477.5,931.0 1478.5,934.1 1479.5,939.3 1480.5,940.8 1481.5,938.9 1482.5,937.0 1483.5,934.4 1484.5,933.5 1485.5,932.1 1486.5,927.8 1487.5,927.5 1488.5,932.8 1489.5,933.2 1490.5,929.8 1491.5,929.4 1492.5,930.3 1493.5,931.6 1494.5,934.2 1495.5,934.3 1496.5,934.5 1497.5,934.4 1498.5,932.4 1499.5,928.3 1500.5,928.1 1501.5,929.2 1502.5,930.3 1503.5,933.7 1504.5,935.2 1505.5,942.4 1506.5,950.4 1507.5,937.9 1508.5,932.4 1509.5,933.5 1510.5,932.7 1511.5,931.9 1512.5,933.6 1513.5,932.1 1514.5,934.1 1515.5,930.9 1516.5,929.2 1517.5,929.4 1518.5,934.1 1519.5,933.4 1520.5,932.1 1521.5,934.2 1522.5,933.1 1523.5,931.6 1524.5,929.8 1525.5,931.7 1526.5,934.6 1527.5,937.3 1528.5,932.5 1529.5,929.9 1530.5,930.7 1531.5,931.3 1532.5,931.8 1533.5,931.1 1534.5,931.8 1535.5,935.5 1536.5,940.5 1537.5,935.1 1538.5,933.2 1539.5,938.8 1540.5,936.2 1541.5,935.4 1542.5,933.9 1543.5,929.2 1544.5,929.4 1545.5,933.8 1546.5,937.4 1547.5,934.9 1548.5,935.6 1549.5,932.0 1550.5,929.3 1551.5,931.4 1552.5,930.1 1553.5,935.4 1554.5,941.2 1555.5,938.3 1556.5,933.7 1557.5,932.4 1558.5,931.7 1559.5,933.2 1560.5,934.7 1561.5,935.1 1562.5,933.1 1563.5,932.2 1564.5,929.6 1565.5,930.2 1566.5,937.2 1567.5,942.5 1568.5,940.0 1569.5,938.6 1570.5,934.8 1571.5,931.3 1572.5,931.1 1573.5,931.7 1574.5,928.4 1575.5,929.5 1576.5,934.6 1577.5,931.0 1578.5,930.9 1579.5,938.1 1580.5,939.8 1581.5,932.8 1582.5,930.8 1583.5,932.5 1584.5,934.0 1585.5,931.2 1586.5,929.4 1587.5,930.0 1588.5,930.2 1589.5,932.8 1590.5,935.0 1591.5,937.2 1592.5,930.7 1593.5,929.3 1594.5,929.6 1595.5,927.1 1596.5,925.0 1597.5,931.0 1598.5,937.1 1599.5,933.7 1600.5,933.6 1601.5,935.1 1602.5,936.8 1603.5,931.8 1604.5,929.4 1605.5,934.3 1606.5,934.2 1607.5,931.2 1608.5,928.7 1609.5,929.7 1610.5,928.1 1611.5,926.6 1612.5,928.6 1613.5,926.7 1614.5,927.8 1615.5,933.8 1616.5,938.4 1617.5,932.9 1618.5,927.1 1619.5,929.2 1620.5,932.4 1621.5,929.7 1622.5,929.8 1623.5,929.6 1624.5,928.0 1625.5,928.8 1626.5,930.3 1627.5,930.0 1628.5,931.4 1629.5,935.0 1630.5,932.1 1631.5,928.0 1632.5,925.6 1633.5,928.2 1634.5,935.7 1635.5,941.8 1636.5,931.4 1637.5,925.2 1638.5,928.3 1639.5,932.8 1640.5,929.2 1641.5,926.1 1642.5,927.5 1643.5,929.8 1644.5,927.3 1645.5,925.5 1646.5,929.0 1647.5,933.8 1648.5,938.4 1649.5,940.9 1650.5,934.5 1651.5,927.1 1652.5,926.6 1653.5,927.3 1654.5,925.8 1655.5,926.4 1656.5,923.1 1657.5,922.9 1658.5,924.0 1659.5,927.9 1660.5,930.7 1661.5,927.6 1662.5,924.3 1663.5,926.1 1664.5,932.9 1665.5,931.7 1666.5,924.3 1667.5,925.8 1668.5,932.9 1669.5,931.1 1670.5,924.9 1671.5,921.4 1672.5,921.0 1673.5,924.1 1674.5,924.6 1675.5,926.5 1676.5,935.8 1677.5,937.6 1678.5,928.4 1679.5,925.1 1680.5,928.1 1681.5,927.2 1682.5,923.6 1683.5,923.2 1684.5,925.3 1685.5,925.6 1686.5,924.9 1687.5,922.0 1688.5,920.5 1689.5,921.1 1690.5,923.3 1691.5,923.6 1692.5,924.8 1693.5,924.3 1694.5,925.5 1695.5,933.4 1696.5,928.2 1697.5,923.7 1698.5,923.4 1699.5,920.7 1700.5,920.1 1701.5,922.0 1702.5,920.5 1703.5,919.6 1704.5,920.1 1705.5,921.0 1706.5,925.2 1707.5,929.9 1708.5,924.7 1709.5,922.9 1710.5,921.5 1711.5,920.4 1712.5,920.1 1713.5,923.3 1714.5,921.7 1715.5,918.2 1716.5,922.4 1717.5,923.3 1718.5,920.6 1719.5,922.9 1720.5,921.3 1721.5,921.3 1722.5,923.1 1723.5,922.4 1724.5,920.7 1725.5,920.6 1726.5,917.3 1727.5,913.2 1728.5,915.2 1729.5,918.5 1730.5,918.2 1731.5,919.0 1732.5,919.5 1733.5,919.1 1734.5,915.7 1735.5,917.1 1736.5,924.3" fill="none" stroke="#0000ff" stroke-width="1"/></svg><div style="position:absolute;left:559px;top:266px;width:56px;height:61px;box-shadow:0 1px 7px rgba(0,0,0,0.18)"></div><div style="position:absolute;left:562px;top:268px;width:50px;height:1px;background:#5aa0e8"></div><div style="position:absolute;left:562px;top:269px;width:50px;height:25px;background:#ffffff"></div><div style="position:absolute;left:592px;top:271px;width:19px;height:19px;background:#c75050"></div><div style="position:absolute;left:592px;top:271px;width:19px;height:19px;color:#fff;font-size:11px;line-height:18px;text-align:center;font-weight:bold">x</div><div style="position:absolute;left:562px;top:294px;width:50px;height:29px;background:#f0f0f0"></div><div style="position:absolute;left:567px;top:298px;width:41px;height:25px;background:#f0f0f0;border-top:1px solid #fff;border-left:1px solid #fff;border-right:2px solid #696969;border-bottom:1px solid #a0a0a0"></div><div class="lbl" style="left:567px;top:304px;width:39px;text-align:center">Stop</div></body></html>
